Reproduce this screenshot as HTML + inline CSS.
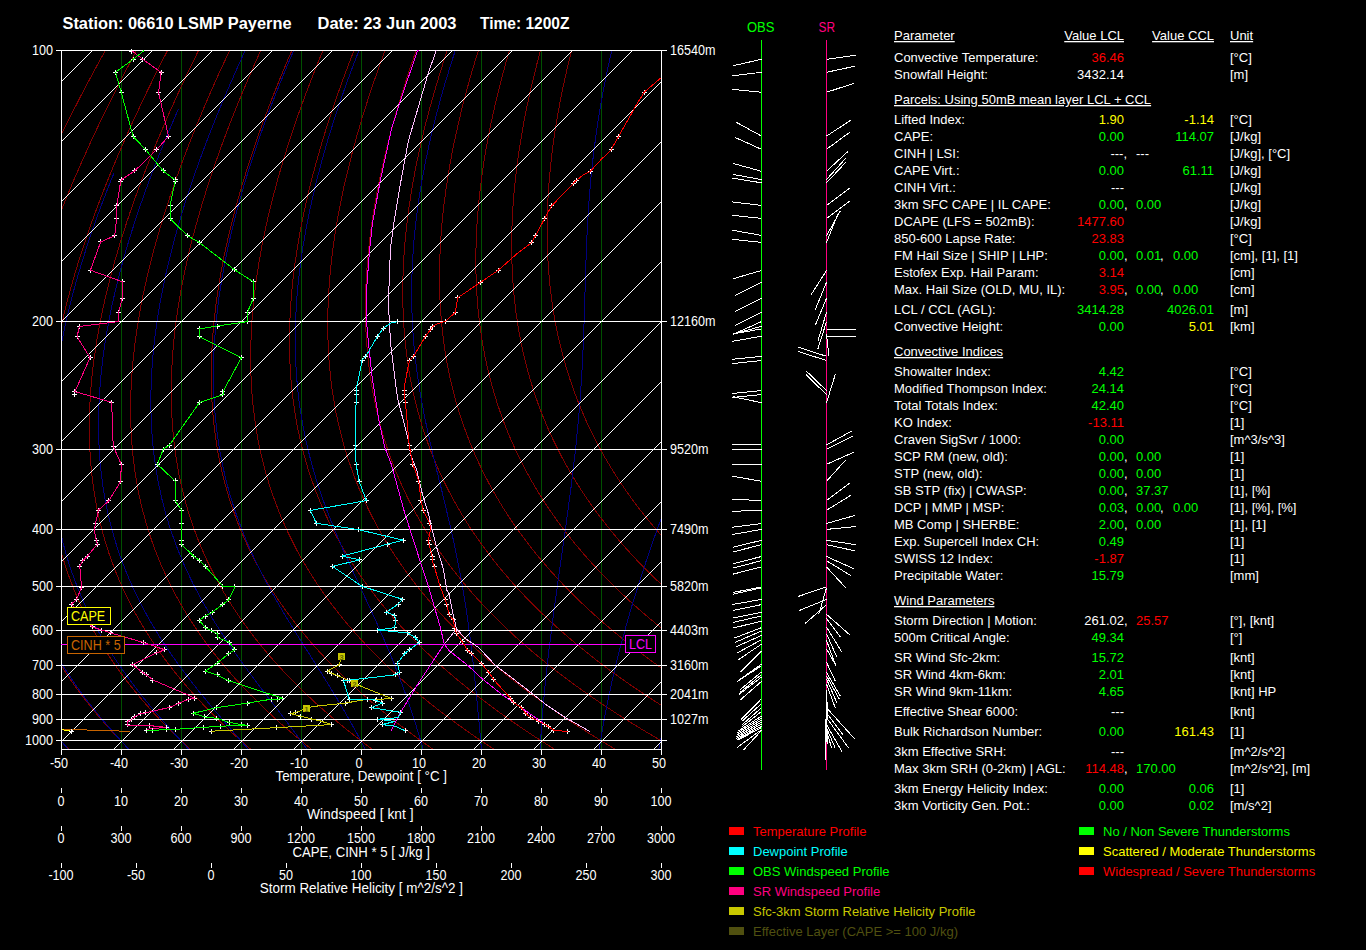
<!DOCTYPE html><html><head><meta charset="utf-8"><style>html,body{margin:0;padding:0;background:#000;width:1366px;height:950px;overflow:hidden}</style></head><body><svg width="1366" height="950" viewBox="0 0 1366 950" style="position:absolute;left:0;top:0">
<rect width="1366" height="950" fill="#000"/>
<defs><clipPath id="pc"><rect x="61" y="50" width="601" height="700"/></clipPath></defs>
<g clip-path="url(#pc)" fill="none" stroke-width="1" shape-rendering="crispEdges">
<line x1="121.5" y1="50" x2="121.5" y2="750" stroke="#005000"/>
<line x1="181.5" y1="50" x2="181.5" y2="750" stroke="#005000"/>
<line x1="241.5" y1="50" x2="241.5" y2="750" stroke="#005000"/>
<line x1="301.5" y1="50" x2="301.5" y2="750" stroke="#005000"/>
<line x1="361.5" y1="50" x2="361.5" y2="750" stroke="#005000"/>
<line x1="421.5" y1="50" x2="421.5" y2="750" stroke="#005000"/>
<line x1="481.5" y1="50" x2="481.5" y2="750" stroke="#005000"/>
<line x1="541.5" y1="50" x2="541.5" y2="750" stroke="#005000"/>
<line x1="601.5" y1="50" x2="601.5" y2="750" stroke="#005000"/>
<polyline points="105.6,50.0 104.5,52.0 103.4,54.0 102.3,56.0 101.2,58.0 100.1,60.0 99.0,62.0 97.9,64.0 96.8,66.0 95.7,68.0 94.6,70.0 93.6,72.0 92.5,74.0 91.4,76.0 90.3,78.0 89.3,80.0 88.2,82.0 87.1,84.0 86.1,86.0 85.0,88.0 84.0,90.0 82.9,92.0 81.9,94.0 80.8,96.0 79.8,98.0 78.8,100.0 77.7,102.0 76.7,104.0 75.7,106.0 74.6,108.0 73.6,110.0 72.6,112.0 71.6,114.0 70.6,116.0 69.6,118.0 68.5,120.0 67.5,122.0 66.5,124.0 65.5,126.0 64.6,128.0 63.6,130.0 62.6,132.0 61.6,134.0 60.6,136.0 59.6,138.0 58.7,140.0 57.7,142.0 56.7,144.0 55.7,146.0 54.8,148.0 53.8,150.0 52.9,152.0 51.9,154.0 51.0,156.0 50.0,158.0 49.1,160.0 48.2,162.0 47.2,164.0 46.3,166.0 45.4,168.0 44.4,170.0 43.5,172.0 42.6,174.0 41.7,176.0 40.8,178.0 39.9,180.0 39.0,182.0 38.1,184.0 37.2,186.0 36.3,188.0 35.4,190.0 34.5,192.0 33.6,194.0 32.8,196.0 31.9,198.0 31.0,200.0 30.2,202.0 29.3,204.0 28.5,206.0 27.6,208.0 26.8,210.0 25.9,212.0 25.1,214.0 24.2,216.0 23.4,218.0 22.6,220.0 21.8,222.0 20.9,224.0 20.1,226.0 19.3,228.0 18.5,230.0 17.7,232.0 16.9,234.0 16.1,236.0 15.3,238.0 14.5,240.0 13.8,242.0 13.0,244.0 12.2,246.0 11.4,248.0 10.7,250.0 9.9,252.0 9.2,254.0 8.4,256.0 7.7,258.0 6.9,260.0 6.2,262.0 5.5,264.0 4.7,266.0 4.0,268.0 3.3,270.0 2.6,272.0 1.9,274.0 1.2,276.0 0.5,278.0 -0.2,280.0 -0.9,282.0 -1.6,284.0 -2.3,286.0 -2.9,288.0 -3.6,290.0 -4.3,292.0 -4.9,294.0 -5.6,296.0 -6.2,298.0 -6.9,300.0 -7.5,302.0 -8.1,304.0 -8.8,306.0 -9.4,308.0 -10.0,310.0 -10.6,312.0 -11.2,314.0 -11.8,316.0 -12.4,318.0 -13.0,320.0 -13.6,322.0 -14.2,324.0 -14.7,326.0 -15.3,328.0 -15.9,330.0 -16.4,332.0 -17.0,334.0 -17.5,336.0 -18.1,338.0 -18.6,340.0 -19.1,342.0 -19.6,344.0 -20.2,346.0 -20.7,348.0 -21.2,350.0 -21.7,352.0 -22.2,354.0 -22.6,356.0 -23.1,358.0 -23.6,360.0 -24.1,362.0 -24.5,364.0 -25.0,366.0 -25.4,368.0 -25.9,370.0 -26.3,372.0 -26.7,374.0 -27.2,376.0 -27.6,378.0 -28.0,380.0 -28.4,382.0 -28.8,384.0 -29.2,386.0 -29.6,388.0 -29.9,390.0 -30.3,392.0 -30.7,394.0 -31.0,396.0 -31.4,398.0 -31.7,400.0 -32.1,402.0 -32.4,404.0 -32.7,406.0 -33.0,408.0 -33.3,410.0 -33.6,412.0 -33.9,414.0 -34.2,416.0 -34.5,418.0 -34.7,420.0 -35.0,422.0 -35.3,424.0 -35.5,426.0 -35.7,428.0 -36.0,430.0 -36.2,432.0 -36.4,434.0 -36.6,436.0 -36.8,438.0 -37.0,440.0 -37.2,442.0 -37.4,444.0 -37.6,446.0 -37.7,448.0 -37.9,450.0 -38.0,452.0 -38.1,454.0 -38.3,456.0 -38.4,458.0 -38.5,460.0 -38.6,462.0 -38.7,464.0 -38.8,466.0 -38.9,468.0 -38.9,470.0 -39.0,472.0 -39.0,474.0 -39.1,476.0 -39.1,478.0 -39.1,480.0 -39.2,482.0 -39.2,484.0 -39.2,486.0 -39.1,488.0 -39.1,490.0 -39.1,492.0 -39.0,494.0 -39.0,496.0 -38.9,498.0 -38.9,500.0 -38.8,502.0 -38.7,504.0 -38.6,506.0 -38.5,508.0 -38.4,510.0 -38.2,512.0 -38.1,514.0 -38.0,516.0 -37.8,518.0 -37.6,520.0 -37.4,522.0 -37.3,524.0 -37.1,526.0 -36.8,528.0 -36.6,530.0 -36.4,532.0 -36.2,534.0 -35.9,536.0 -35.6,538.0 -35.4,540.0 -35.1,542.0 -34.8,544.0 -34.5,546.0 -34.2,548.0 -33.8,550.0 -33.5,552.0 -33.1,554.0 -32.8,556.0 -32.4,558.0 -32.0,560.0 -31.6,562.0 -31.2,564.0 -30.8,566.0 -30.3,568.0 -29.9,570.0 -29.4,572.0 -28.9,574.0 -28.5,576.0 -28.0,578.0 -27.5,580.0 -26.9,582.0 -26.4,584.0 -25.9,586.0 -25.3,588.0 -24.7,590.0 -24.1,592.0 -23.5,594.0 -22.9,596.0 -22.3,598.0 -21.7,600.0 -21.0,602.0 -20.4,604.0 -19.7,606.0 -19.0,608.0 -18.3,610.0 -17.6,612.0 -16.9,614.0 -16.1,616.0 -15.3,618.0 -14.6,620.0 -13.8,622.0 -13.0,624.0 -12.2,626.0 -11.3,628.0 -10.5,630.0 -9.6,632.0 -8.8,634.0 -7.9,636.0 -7.0,638.0 -6.1,640.0 -5.1,642.0 -4.2,644.0 -3.2,646.0 -2.3,648.0 -1.3,650.0 -0.3,652.0 0.8,654.0 1.8,656.0 2.8,658.0 3.9,660.0 5.0,662.0 6.1,664.0 7.2,666.0 8.3,668.0 9.5,670.0 10.7,672.0 11.8,674.0 13.0,676.0 14.2,678.0 15.5,680.0 16.7,682.0 18.0,684.0 19.2,686.0 20.5,688.0 21.8,690.0 23.2,692.0 24.5,694.0 25.9,696.0 27.3,698.0 28.7,700.0 30.1,702.0 31.5,704.0 32.9,706.0 34.4,708.0 35.9,710.0 37.4,712.0 38.9,714.0 40.4,716.0 42.0,718.0 43.6,720.0 45.1,722.0 46.7,724.0 48.4,726.0 50.0,728.0 51.7,730.0 53.3,732.0 55.0,734.0 56.8,736.0 58.5,738.0 60.2,740.0 62.0,742.0 63.8,744.0 65.6,746.0 67.4,748.0 69.3,750.0" stroke="#800000"/>
<polyline points="136.6,50.0 135.6,52.0 134.5,54.0 133.5,56.0 132.4,58.0 131.3,60.0 130.3,62.0 129.2,64.0 128.2,66.0 127.2,68.0 126.1,70.0 125.1,72.0 124.0,74.0 123.0,76.0 122.0,78.0 121.0,80.0 119.9,82.0 118.9,84.0 117.9,86.0 116.9,88.0 115.9,90.0 114.9,92.0 113.9,94.0 112.9,96.0 111.9,98.0 110.9,100.0 109.9,102.0 108.9,104.0 107.9,106.0 106.9,108.0 106.0,110.0 105.0,112.0 104.0,114.0 103.0,116.0 102.1,118.0 101.1,120.0 100.1,122.0 99.2,124.0 98.2,126.0 97.3,128.0 96.3,130.0 95.4,132.0 94.5,134.0 93.5,136.0 92.6,138.0 91.7,140.0 90.7,142.0 89.8,144.0 88.9,146.0 88.0,148.0 87.1,150.0 86.2,152.0 85.3,154.0 84.4,156.0 83.5,158.0 82.6,160.0 81.7,162.0 80.8,164.0 79.9,166.0 79.0,168.0 78.2,170.0 77.3,172.0 76.4,174.0 75.6,176.0 74.7,178.0 73.8,180.0 73.0,182.0 72.1,184.0 71.3,186.0 70.5,188.0 69.6,190.0 68.8,192.0 68.0,194.0 67.1,196.0 66.3,198.0 65.5,200.0 64.7,202.0 63.9,204.0 63.1,206.0 62.3,208.0 61.5,210.0 60.7,212.0 59.9,214.0 59.1,216.0 58.3,218.0 57.6,220.0 56.8,222.0 56.0,224.0 55.3,226.0 54.5,228.0 53.8,230.0 53.0,232.0 52.3,234.0 51.5,236.0 50.8,238.0 50.1,240.0 49.3,242.0 48.6,244.0 47.9,246.0 47.2,248.0 46.5,250.0 45.8,252.0 45.1,254.0 44.4,256.0 43.7,258.0 43.0,260.0 42.3,262.0 41.6,264.0 41.0,266.0 40.3,268.0 39.7,270.0 39.0,272.0 38.4,274.0 37.7,276.0 37.1,278.0 36.4,280.0 35.8,282.0 35.2,284.0 34.6,286.0 33.9,288.0 33.3,290.0 32.7,292.0 32.1,294.0 31.5,296.0 31.0,298.0 30.4,300.0 29.8,302.0 29.2,304.0 28.7,306.0 28.1,308.0 27.5,310.0 27.0,312.0 26.5,314.0 25.9,316.0 25.4,318.0 24.9,320.0 24.3,322.0 23.8,324.0 23.3,326.0 22.8,328.0 22.3,330.0 21.8,332.0 21.3,334.0 20.9,336.0 20.4,338.0 19.9,340.0 19.5,342.0 19.0,344.0 18.5,346.0 18.1,348.0 17.7,350.0 17.2,352.0 16.8,354.0 16.4,356.0 16.0,358.0 15.6,360.0 15.2,362.0 14.8,364.0 14.4,366.0 14.0,368.0 13.7,370.0 13.3,372.0 12.9,374.0 12.6,376.0 12.2,378.0 11.9,380.0 11.6,382.0 11.2,384.0 10.9,386.0 10.6,388.0 10.3,390.0 10.0,392.0 9.7,394.0 9.4,396.0 9.2,398.0 8.9,400.0 8.6,402.0 8.4,404.0 8.1,406.0 7.9,408.0 7.7,410.0 7.4,412.0 7.2,414.0 7.0,416.0 6.8,418.0 6.6,420.0 6.4,422.0 6.3,424.0 6.1,426.0 5.9,428.0 5.8,430.0 5.6,432.0 5.5,434.0 5.4,436.0 5.3,438.0 5.1,440.0 5.0,442.0 4.9,444.0 4.9,446.0 4.8,448.0 4.7,450.0 4.6,452.0 4.6,454.0 4.5,456.0 4.5,458.0 4.5,460.0 4.5,462.0 4.5,464.0 4.5,466.0 4.5,468.0 4.5,470.0 4.5,472.0 4.6,474.0 4.6,476.0 4.7,478.0 4.7,480.0 4.8,482.0 4.9,484.0 5.0,486.0 5.1,488.0 5.2,490.0 5.3,492.0 5.4,494.0 5.6,496.0 5.7,498.0 5.9,500.0 6.1,502.0 6.3,504.0 6.5,506.0 6.7,508.0 6.9,510.0 7.1,512.0 7.3,514.0 7.6,516.0 7.8,518.0 8.1,520.0 8.4,522.0 8.7,524.0 9.0,526.0 9.3,528.0 9.6,530.0 9.9,532.0 10.3,534.0 10.6,536.0 11.0,538.0 11.4,540.0 11.7,542.0 12.1,544.0 12.6,546.0 13.0,548.0 13.4,550.0 13.9,552.0 14.3,554.0 14.8,556.0 15.3,558.0 15.8,560.0 16.3,562.0 16.8,564.0 17.3,566.0 17.9,568.0 18.4,570.0 19.0,572.0 19.6,574.0 20.2,576.0 20.8,578.0 21.4,580.0 22.0,582.0 22.7,584.0 23.3,586.0 24.0,588.0 24.7,590.0 25.4,592.0 26.1,594.0 26.8,596.0 27.6,598.0 28.3,600.0 29.1,602.0 29.9,604.0 30.7,606.0 31.5,608.0 32.3,610.0 33.2,612.0 34.0,614.0 34.9,616.0 35.8,618.0 36.7,620.0 37.6,622.0 38.5,624.0 39.4,626.0 40.4,628.0 41.4,630.0 42.3,632.0 43.3,634.0 44.4,636.0 45.4,638.0 46.4,640.0 47.5,642.0 48.6,644.0 49.7,646.0 50.8,648.0 51.9,650.0 53.0,652.0 54.2,654.0 55.4,656.0 56.6,658.0 57.8,660.0 59.0,662.0 60.2,664.0 61.5,666.0 62.8,668.0 64.0,670.0 65.3,672.0 66.7,674.0 68.0,676.0 69.4,678.0 70.7,680.0 72.1,682.0 73.5,684.0 75.0,686.0 76.4,688.0 77.9,690.0 79.3,692.0 80.8,694.0 82.3,696.0 83.9,698.0 85.4,700.0 87.0,702.0 88.6,704.0 90.2,706.0 91.8,708.0 93.4,710.0 95.1,712.0 96.7,714.0 98.4,716.0 100.1,718.0 101.9,720.0 103.6,722.0 105.4,724.0 107.2,726.0 109.0,728.0 110.8,730.0 112.6,732.0 114.5,734.0 116.4,736.0 118.3,738.0 120.2,740.0 122.1,742.0 124.1,744.0 126.1,746.0 128.1,748.0 130.1,750.0" stroke="#800000"/>
<polyline points="167.7,50.0 166.7,52.0 165.7,54.0 164.7,56.0 163.6,58.0 162.6,60.0 161.6,62.0 160.6,64.0 159.6,66.0 158.6,68.0 157.6,70.0 156.6,72.0 155.6,74.0 154.6,76.0 153.6,78.0 152.7,80.0 151.7,82.0 150.7,84.0 149.7,86.0 148.8,88.0 147.8,90.0 146.8,92.0 145.9,94.0 144.9,96.0 143.9,98.0 143.0,100.0 142.0,102.0 141.1,104.0 140.2,106.0 139.2,108.0 138.3,110.0 137.4,112.0 136.4,114.0 135.5,116.0 134.6,118.0 133.7,120.0 132.7,122.0 131.8,124.0 130.9,126.0 130.0,128.0 129.1,130.0 128.2,132.0 127.3,134.0 126.4,136.0 125.6,138.0 124.7,140.0 123.8,142.0 122.9,144.0 122.0,146.0 121.2,148.0 120.3,150.0 119.4,152.0 118.6,154.0 117.7,156.0 116.9,158.0 116.0,160.0 115.2,162.0 114.4,164.0 113.5,166.0 112.7,168.0 111.9,170.0 111.0,172.0 110.2,174.0 109.4,176.0 108.6,178.0 107.8,180.0 107.0,182.0 106.2,184.0 105.4,186.0 104.6,188.0 103.8,190.0 103.0,192.0 102.3,194.0 101.5,196.0 100.7,198.0 100.0,200.0 99.2,202.0 98.4,204.0 97.7,206.0 96.9,208.0 96.2,210.0 95.4,212.0 94.7,214.0 94.0,216.0 93.3,218.0 92.5,220.0 91.8,222.0 91.1,224.0 90.4,226.0 89.7,228.0 89.0,230.0 88.3,232.0 87.6,234.0 86.9,236.0 86.2,238.0 85.6,240.0 84.9,242.0 84.2,244.0 83.6,246.0 82.9,248.0 82.3,250.0 81.6,252.0 81.0,254.0 80.3,256.0 79.7,258.0 79.1,260.0 78.4,262.0 77.8,264.0 77.2,266.0 76.6,268.0 76.0,270.0 75.4,272.0 74.8,274.0 74.2,276.0 73.7,278.0 73.1,280.0 72.5,282.0 71.9,284.0 71.4,286.0 70.8,288.0 70.3,290.0 69.7,292.0 69.2,294.0 68.7,296.0 68.1,298.0 67.6,300.0 67.1,302.0 66.6,304.0 66.1,306.0 65.6,308.0 65.1,310.0 64.6,312.0 64.1,314.0 63.7,316.0 63.2,318.0 62.7,320.0 62.3,322.0 61.8,324.0 61.4,326.0 60.9,328.0 60.5,330.0 60.1,332.0 59.6,334.0 59.2,336.0 58.8,338.0 58.4,340.0 58.0,342.0 57.6,344.0 57.3,346.0 56.9,348.0 56.5,350.0 56.1,352.0 55.8,354.0 55.4,356.0 55.1,358.0 54.8,360.0 54.4,362.0 54.1,364.0 53.8,366.0 53.5,368.0 53.2,370.0 52.9,372.0 52.6,374.0 52.3,376.0 52.0,378.0 51.8,380.0 51.5,382.0 51.3,384.0 51.0,386.0 50.8,388.0 50.5,390.0 50.3,392.0 50.1,394.0 49.9,396.0 49.7,398.0 49.5,400.0 49.3,402.0 49.1,404.0 49.0,406.0 48.8,408.0 48.6,410.0 48.5,412.0 48.4,414.0 48.2,416.0 48.1,418.0 48.0,420.0 47.9,422.0 47.8,424.0 47.7,426.0 47.6,428.0 47.5,430.0 47.5,432.0 47.4,434.0 47.4,436.0 47.3,438.0 47.3,440.0 47.3,442.0 47.3,444.0 47.3,446.0 47.3,448.0 47.3,450.0 47.3,452.0 47.3,454.0 47.4,456.0 47.4,458.0 47.5,460.0 47.5,462.0 47.6,464.0 47.7,466.0 47.8,468.0 47.9,470.0 48.0,472.0 48.2,474.0 48.3,476.0 48.4,478.0 48.6,480.0 48.7,482.0 48.9,484.0 49.1,486.0 49.3,488.0 49.5,490.0 49.7,492.0 49.9,494.0 50.2,496.0 50.4,498.0 50.7,500.0 50.9,502.0 51.2,504.0 51.5,506.0 51.8,508.0 52.1,510.0 52.4,512.0 52.8,514.0 53.1,516.0 53.5,518.0 53.8,520.0 54.2,522.0 54.6,524.0 55.0,526.0 55.4,528.0 55.8,530.0 56.2,532.0 56.7,534.0 57.1,536.0 57.6,538.0 58.1,540.0 58.6,542.0 59.1,544.0 59.6,546.0 60.1,548.0 60.7,550.0 61.2,552.0 61.8,554.0 62.3,556.0 62.9,558.0 63.5,560.0 64.2,562.0 64.8,564.0 65.4,566.0 66.1,568.0 66.7,570.0 67.4,572.0 68.1,574.0 68.8,576.0 69.5,578.0 70.3,580.0 71.0,582.0 71.8,584.0 72.6,586.0 73.3,588.0 74.1,590.0 75.0,592.0 75.8,594.0 76.6,596.0 77.5,598.0 78.4,600.0 79.2,602.0 80.2,604.0 81.1,606.0 82.0,608.0 82.9,610.0 83.9,612.0 84.9,614.0 85.9,616.0 86.9,618.0 87.9,620.0 88.9,622.0 90.0,624.0 91.0,626.0 92.1,628.0 93.2,630.0 94.3,632.0 95.5,634.0 96.6,636.0 97.8,638.0 99.0,640.0 100.1,642.0 101.4,644.0 102.6,646.0 103.8,648.0 105.1,650.0 106.4,652.0 107.7,654.0 109.0,656.0 110.3,658.0 111.6,660.0 113.0,662.0 114.4,664.0 115.8,666.0 117.2,668.0 118.6,670.0 120.0,672.0 121.5,674.0 123.0,676.0 124.5,678.0 126.0,680.0 127.5,682.0 129.1,684.0 130.7,686.0 132.3,688.0 133.9,690.0 135.5,692.0 137.1,694.0 138.8,696.0 140.5,698.0 142.2,700.0 143.9,702.0 145.6,704.0 147.4,706.0 149.2,708.0 150.9,710.0 152.8,712.0 154.6,714.0 156.4,716.0 158.3,718.0 160.2,720.0 162.1,722.0 164.0,724.0 166.0,726.0 167.9,728.0 169.9,730.0 171.9,732.0 174.0,734.0 176.0,736.0 178.1,738.0 180.2,740.0 182.3,742.0 184.4,744.0 186.5,746.0 188.7,748.0 190.9,750.0" stroke="#800000"/>
<polyline points="198.8,50.0 197.8,52.0 196.8,54.0 195.9,56.0 194.9,58.0 193.9,60.0 192.9,62.0 192.0,64.0 191.0,66.0 190.0,68.0 189.1,70.0 188.1,72.0 187.2,74.0 186.2,76.0 185.3,78.0 184.3,80.0 183.4,82.0 182.5,84.0 181.5,86.0 180.6,88.0 179.7,90.0 178.8,92.0 177.8,94.0 176.9,96.0 176.0,98.0 175.1,100.0 174.2,102.0 173.3,104.0 172.4,106.0 171.5,108.0 170.6,110.0 169.7,112.0 168.8,114.0 168.0,116.0 167.1,118.0 166.2,120.0 165.3,122.0 164.5,124.0 163.6,126.0 162.8,128.0 161.9,130.0 161.0,132.0 160.2,134.0 159.4,136.0 158.5,138.0 157.7,140.0 156.8,142.0 156.0,144.0 155.2,146.0 154.4,148.0 153.5,150.0 152.7,152.0 151.9,154.0 151.1,156.0 150.3,158.0 149.5,160.0 148.7,162.0 147.9,164.0 147.1,166.0 146.4,168.0 145.6,170.0 144.8,172.0 144.0,174.0 143.3,176.0 142.5,178.0 141.8,180.0 141.0,182.0 140.3,184.0 139.5,186.0 138.8,188.0 138.0,190.0 137.3,192.0 136.6,194.0 135.8,196.0 135.1,198.0 134.4,200.0 133.7,202.0 133.0,204.0 132.3,206.0 131.6,208.0 130.9,210.0 130.2,212.0 129.5,214.0 128.9,216.0 128.2,218.0 127.5,220.0 126.8,222.0 126.2,224.0 125.5,226.0 124.9,228.0 124.2,230.0 123.6,232.0 123.0,234.0 122.3,236.0 121.7,238.0 121.1,240.0 120.5,242.0 119.8,244.0 119.2,246.0 118.6,248.0 118.0,250.0 117.5,252.0 116.9,254.0 116.3,256.0 115.7,258.0 115.1,260.0 114.6,262.0 114.0,264.0 113.5,266.0 112.9,268.0 112.4,270.0 111.8,272.0 111.3,274.0 110.8,276.0 110.2,278.0 109.7,280.0 109.2,282.0 108.7,284.0 108.2,286.0 107.7,288.0 107.2,290.0 106.7,292.0 106.3,294.0 105.8,296.0 105.3,298.0 104.9,300.0 104.4,302.0 104.0,304.0 103.5,306.0 103.1,308.0 102.6,310.0 102.2,312.0 101.8,314.0 101.4,316.0 101.0,318.0 100.6,320.0 100.2,322.0 99.8,324.0 99.4,326.0 99.0,328.0 98.7,330.0 98.3,332.0 98.0,334.0 97.6,336.0 97.3,338.0 96.9,340.0 96.6,342.0 96.3,344.0 96.0,346.0 95.7,348.0 95.3,350.0 95.1,352.0 94.8,354.0 94.5,356.0 94.2,358.0 93.9,360.0 93.7,362.0 93.4,364.0 93.2,366.0 92.9,368.0 92.7,370.0 92.5,372.0 92.3,374.0 92.0,376.0 91.8,378.0 91.6,380.0 91.5,382.0 91.3,384.0 91.1,386.0 90.9,388.0 90.8,390.0 90.6,392.0 90.5,394.0 90.4,396.0 90.2,398.0 90.1,400.0 90.0,402.0 89.9,404.0 89.8,406.0 89.7,408.0 89.6,410.0 89.6,412.0 89.5,414.0 89.4,416.0 89.4,418.0 89.4,420.0 89.3,422.0 89.3,424.0 89.3,426.0 89.3,428.0 89.3,430.0 89.3,432.0 89.3,434.0 89.4,436.0 89.4,438.0 89.5,440.0 89.5,442.0 89.6,444.0 89.7,446.0 89.8,448.0 89.9,450.0 90.0,452.0 90.1,454.0 90.2,456.0 90.3,458.0 90.5,460.0 90.6,462.0 90.8,464.0 91.0,466.0 91.1,468.0 91.3,470.0 91.5,472.0 91.7,474.0 92.0,476.0 92.2,478.0 92.4,480.0 92.7,482.0 93.0,484.0 93.2,486.0 93.5,488.0 93.8,490.0 94.1,492.0 94.4,494.0 94.8,496.0 95.1,498.0 95.4,500.0 95.8,502.0 96.2,504.0 96.6,506.0 96.9,508.0 97.3,510.0 97.8,512.0 98.2,514.0 98.6,516.0 99.1,518.0 99.5,520.0 100.0,522.0 100.5,524.0 101.0,526.0 101.5,528.0 102.0,530.0 102.5,532.0 103.1,534.0 103.6,536.0 104.2,538.0 104.8,540.0 105.4,542.0 106.0,544.0 106.6,546.0 107.2,548.0 107.9,550.0 108.5,552.0 109.2,554.0 109.9,556.0 110.6,558.0 111.3,560.0 112.0,562.0 112.8,564.0 113.5,566.0 114.3,568.0 115.0,570.0 115.8,572.0 116.6,574.0 117.5,576.0 118.3,578.0 119.1,580.0 120.0,582.0 120.9,584.0 121.8,586.0 122.7,588.0 123.6,590.0 124.5,592.0 125.5,594.0 126.4,596.0 127.4,598.0 128.4,600.0 129.4,602.0 130.4,604.0 131.4,606.0 132.5,608.0 133.6,610.0 134.6,612.0 135.7,614.0 136.9,616.0 138.0,618.0 139.1,620.0 140.3,622.0 141.5,624.0 142.7,626.0 143.9,628.0 145.1,630.0 146.3,632.0 147.6,634.0 148.9,636.0 150.2,638.0 151.5,640.0 152.8,642.0 154.1,644.0 155.5,646.0 156.9,648.0 158.3,650.0 159.7,652.0 161.1,654.0 162.5,656.0 164.0,658.0 165.5,660.0 167.0,662.0 168.5,664.0 170.0,666.0 171.6,668.0 173.2,670.0 174.7,672.0 176.3,674.0 178.0,676.0 179.6,678.0 181.3,680.0 183.0,682.0 184.7,684.0 186.4,686.0 188.1,688.0 189.9,690.0 191.6,692.0 193.4,694.0 195.2,696.0 197.1,698.0 198.9,700.0 200.8,702.0 202.7,704.0 204.6,706.0 206.5,708.0 208.5,710.0 210.4,712.0 212.4,714.0 214.4,716.0 216.5,718.0 218.5,720.0 220.6,722.0 222.7,724.0 224.8,726.0 226.9,728.0 229.1,730.0 231.2,732.0 233.4,734.0 235.6,736.0 237.9,738.0 240.1,740.0 242.4,742.0 244.7,744.0 247.0,746.0 249.3,748.0 251.7,750.0" stroke="#800000"/>
<polyline points="229.9,50.0 228.9,52.0 228.0,54.0 227.1,56.0 226.1,58.0 225.2,60.0 224.3,62.0 223.3,64.0 222.4,66.0 221.5,68.0 220.6,70.0 219.7,72.0 218.7,74.0 217.8,76.0 216.9,78.0 216.0,80.0 215.1,82.0 214.2,84.0 213.4,86.0 212.5,88.0 211.6,90.0 210.7,92.0 209.8,94.0 209.0,96.0 208.1,98.0 207.2,100.0 206.4,102.0 205.5,104.0 204.6,106.0 203.8,108.0 202.9,110.0 202.1,112.0 201.3,114.0 200.4,116.0 199.6,118.0 198.8,120.0 197.9,122.0 197.1,124.0 196.3,126.0 195.5,128.0 194.7,130.0 193.9,132.0 193.1,134.0 192.3,136.0 191.5,138.0 190.7,140.0 189.9,142.0 189.1,144.0 188.3,146.0 187.6,148.0 186.8,150.0 186.0,152.0 185.3,154.0 184.5,156.0 183.7,158.0 183.0,160.0 182.2,162.0 181.5,164.0 180.8,166.0 180.0,168.0 179.3,170.0 178.6,172.0 177.9,174.0 177.1,176.0 176.4,178.0 175.7,180.0 175.0,182.0 174.3,184.0 173.6,186.0 172.9,188.0 172.2,190.0 171.6,192.0 170.9,194.0 170.2,196.0 169.5,198.0 168.9,200.0 168.2,202.0 167.6,204.0 166.9,206.0 166.3,208.0 165.6,210.0 165.0,212.0 164.4,214.0 163.7,216.0 163.1,218.0 162.5,220.0 161.9,222.0 161.3,224.0 160.7,226.0 160.1,228.0 159.5,230.0 158.9,232.0 158.3,234.0 157.7,236.0 157.2,238.0 156.6,240.0 156.0,242.0 155.5,244.0 154.9,246.0 154.4,248.0 153.8,250.0 153.3,252.0 152.8,254.0 152.2,256.0 151.7,258.0 151.2,260.0 150.7,262.0 150.2,264.0 149.7,266.0 149.2,268.0 148.7,270.0 148.2,272.0 147.8,274.0 147.3,276.0 146.8,278.0 146.4,280.0 145.9,282.0 145.5,284.0 145.0,286.0 144.6,288.0 144.2,290.0 143.7,292.0 143.3,294.0 142.9,296.0 142.5,298.0 142.1,300.0 141.7,302.0 141.3,304.0 140.9,306.0 140.6,308.0 140.2,310.0 139.8,312.0 139.5,314.0 139.1,316.0 138.8,318.0 138.4,320.0 138.1,322.0 137.8,324.0 137.5,326.0 137.2,328.0 136.9,330.0 136.6,332.0 136.3,334.0 136.0,336.0 135.7,338.0 135.4,340.0 135.2,342.0 134.9,344.0 134.7,346.0 134.4,348.0 134.2,350.0 134.0,352.0 133.7,354.0 133.5,356.0 133.3,358.0 133.1,360.0 132.9,362.0 132.7,364.0 132.6,366.0 132.4,368.0 132.2,370.0 132.1,372.0 131.9,374.0 131.8,376.0 131.7,378.0 131.5,380.0 131.4,382.0 131.3,384.0 131.2,386.0 131.1,388.0 131.0,390.0 130.9,392.0 130.9,394.0 130.8,396.0 130.8,398.0 130.7,400.0 130.7,402.0 130.7,404.0 130.6,406.0 130.6,408.0 130.6,410.0 130.6,412.0 130.6,414.0 130.7,416.0 130.7,418.0 130.7,420.0 130.8,422.0 130.8,424.0 130.9,426.0 131.0,428.0 131.1,430.0 131.2,432.0 131.3,434.0 131.4,436.0 131.5,438.0 131.6,440.0 131.8,442.0 131.9,444.0 132.1,446.0 132.2,448.0 132.4,450.0 132.6,452.0 132.8,454.0 133.0,456.0 133.2,458.0 133.5,460.0 133.7,462.0 134.0,464.0 134.2,466.0 134.5,468.0 134.8,470.0 135.0,472.0 135.3,474.0 135.7,476.0 136.0,478.0 136.3,480.0 136.6,482.0 137.0,484.0 137.4,486.0 137.7,488.0 138.1,490.0 138.5,492.0 138.9,494.0 139.3,496.0 139.8,498.0 140.2,500.0 140.7,502.0 141.1,504.0 141.6,506.0 142.1,508.0 142.6,510.0 143.1,512.0 143.6,514.0 144.2,516.0 144.7,518.0 145.3,520.0 145.8,522.0 146.4,524.0 147.0,526.0 147.6,528.0 148.2,530.0 148.9,532.0 149.5,534.0 150.2,536.0 150.8,538.0 151.5,540.0 152.2,542.0 152.9,544.0 153.6,546.0 154.4,548.0 155.1,550.0 155.9,552.0 156.7,554.0 157.5,556.0 158.3,558.0 159.1,560.0 159.9,562.0 160.7,564.0 161.6,566.0 162.5,568.0 163.4,570.0 164.3,572.0 165.2,574.0 166.1,576.0 167.0,578.0 168.0,580.0 169.0,582.0 170.0,584.0 171.0,586.0 172.0,588.0 173.0,590.0 174.1,592.0 175.1,594.0 176.2,596.0 177.3,598.0 178.4,600.0 179.5,602.0 180.7,604.0 181.8,606.0 183.0,608.0 184.2,610.0 185.4,612.0 186.6,614.0 187.8,616.0 189.1,618.0 190.4,620.0 191.7,622.0 193.0,624.0 194.3,626.0 195.6,628.0 197.0,630.0 198.3,632.0 199.7,634.0 201.1,636.0 202.5,638.0 204.0,640.0 205.4,642.0 206.9,644.0 208.4,646.0 209.9,648.0 211.4,650.0 213.0,652.0 214.5,654.0 216.1,656.0 217.7,658.0 219.3,660.0 221.0,662.0 222.6,664.0 224.3,666.0 226.0,668.0 227.7,670.0 229.4,672.0 231.2,674.0 233.0,676.0 234.7,678.0 236.5,680.0 238.4,682.0 240.2,684.0 242.1,686.0 244.0,688.0 245.9,690.0 247.8,692.0 249.7,694.0 251.7,696.0 253.7,698.0 255.7,700.0 257.7,702.0 259.8,704.0 261.8,706.0 263.9,708.0 266.0,710.0 268.1,712.0 270.3,714.0 272.4,716.0 274.6,718.0 276.8,720.0 279.1,722.0 281.3,724.0 283.6,726.0 285.9,728.0 288.2,730.0 290.5,732.0 292.9,734.0 295.3,736.0 297.7,738.0 300.1,740.0 302.5,742.0 305.0,744.0 307.5,746.0 310.0,748.0 312.5,750.0" stroke="#800000"/>
<polyline points="261.0,50.0 260.0,52.0 259.1,54.0 258.2,56.0 257.4,58.0 256.5,60.0 255.6,62.0 254.7,64.0 253.8,66.0 252.9,68.0 252.1,70.0 251.2,72.0 250.3,74.0 249.4,76.0 248.6,78.0 247.7,80.0 246.9,82.0 246.0,84.0 245.2,86.0 244.3,88.0 243.5,90.0 242.7,92.0 241.8,94.0 241.0,96.0 240.2,98.0 239.3,100.0 238.5,102.0 237.7,104.0 236.9,106.0 236.1,108.0 235.3,110.0 234.5,112.0 233.7,114.0 232.9,116.0 232.1,118.0 231.3,120.0 230.5,122.0 229.8,124.0 229.0,126.0 228.2,128.0 227.5,130.0 226.7,132.0 225.9,134.0 225.2,136.0 224.4,138.0 223.7,140.0 222.9,142.0 222.2,144.0 221.5,146.0 220.8,148.0 220.0,150.0 219.3,152.0 218.6,154.0 217.9,156.0 217.2,158.0 216.5,160.0 215.8,162.0 215.1,164.0 214.4,166.0 213.7,168.0 213.0,170.0 212.3,172.0 211.7,174.0 211.0,176.0 210.3,178.0 209.7,180.0 209.0,182.0 208.4,184.0 207.7,186.0 207.1,188.0 206.4,190.0 205.8,192.0 205.2,194.0 204.6,196.0 203.9,198.0 203.3,200.0 202.7,202.0 202.1,204.0 201.5,206.0 200.9,208.0 200.3,210.0 199.7,212.0 199.2,214.0 198.6,216.0 198.0,218.0 197.5,220.0 196.9,222.0 196.3,224.0 195.8,226.0 195.3,228.0 194.7,230.0 194.2,232.0 193.7,234.0 193.1,236.0 192.6,238.0 192.1,240.0 191.6,242.0 191.1,244.0 190.6,246.0 190.1,248.0 189.6,250.0 189.1,252.0 188.7,254.0 188.2,256.0 187.7,258.0 187.3,260.0 186.8,262.0 186.4,264.0 185.9,266.0 185.5,268.0 185.1,270.0 184.6,272.0 184.2,274.0 183.8,276.0 183.4,278.0 183.0,280.0 182.6,282.0 182.2,284.0 181.8,286.0 181.5,288.0 181.1,290.0 180.7,292.0 180.4,294.0 180.0,296.0 179.7,298.0 179.3,300.0 179.0,302.0 178.7,304.0 178.4,306.0 178.0,308.0 177.7,310.0 177.4,312.0 177.1,314.0 176.9,316.0 176.6,318.0 176.3,320.0 176.0,322.0 175.8,324.0 175.5,326.0 175.3,328.0 175.0,330.0 174.8,332.0 174.6,334.0 174.4,336.0 174.1,338.0 173.9,340.0 173.7,342.0 173.6,344.0 173.4,346.0 173.2,348.0 173.0,350.0 172.9,352.0 172.7,354.0 172.6,356.0 172.4,358.0 172.3,360.0 172.2,362.0 172.1,364.0 171.9,366.0 171.8,368.0 171.8,370.0 171.7,372.0 171.6,374.0 171.5,376.0 171.5,378.0 171.4,380.0 171.4,382.0 171.3,384.0 171.3,386.0 171.3,388.0 171.3,390.0 171.3,392.0 171.3,394.0 171.3,396.0 171.3,398.0 171.3,400.0 171.4,402.0 171.4,404.0 171.5,406.0 171.5,408.0 171.6,410.0 171.7,412.0 171.8,414.0 171.9,416.0 172.0,418.0 172.1,420.0 172.2,422.0 172.4,424.0 172.5,426.0 172.7,428.0 172.8,430.0 173.0,432.0 173.2,434.0 173.4,436.0 173.6,438.0 173.8,440.0 174.0,442.0 174.2,444.0 174.5,446.0 174.7,448.0 175.0,450.0 175.3,452.0 175.6,454.0 175.8,456.0 176.1,458.0 176.5,460.0 176.8,462.0 177.1,464.0 177.5,466.0 177.8,468.0 178.2,470.0 178.6,472.0 178.9,474.0 179.3,476.0 179.7,478.0 180.2,480.0 180.6,482.0 181.0,484.0 181.5,486.0 182.0,488.0 182.4,490.0 182.9,492.0 183.4,494.0 183.9,496.0 184.4,498.0 185.0,500.0 185.5,502.0 186.1,504.0 186.7,506.0 187.2,508.0 187.8,510.0 188.4,512.0 189.1,514.0 189.7,516.0 190.3,518.0 191.0,520.0 191.6,522.0 192.3,524.0 193.0,526.0 193.7,528.0 194.4,530.0 195.2,532.0 195.9,534.0 196.7,536.0 197.5,538.0 198.2,540.0 199.0,542.0 199.8,544.0 200.7,546.0 201.5,548.0 202.4,550.0 203.2,552.0 204.1,554.0 205.0,556.0 205.9,558.0 206.8,560.0 207.8,562.0 208.7,564.0 209.7,566.0 210.7,568.0 211.7,570.0 212.7,572.0 213.7,574.0 214.7,576.0 215.8,578.0 216.9,580.0 218.0,582.0 219.1,584.0 220.2,586.0 221.3,588.0 222.5,590.0 223.6,592.0 224.8,594.0 226.0,596.0 227.2,598.0 228.4,600.0 229.7,602.0 230.9,604.0 232.2,606.0 233.5,608.0 234.8,610.0 236.1,612.0 237.5,614.0 238.8,616.0 240.2,618.0 241.6,620.0 243.0,622.0 244.4,624.0 245.9,626.0 247.3,628.0 248.8,630.0 250.3,632.0 251.8,634.0 253.4,636.0 254.9,638.0 256.5,640.0 258.1,642.0 259.7,644.0 261.3,646.0 263.0,648.0 264.6,650.0 266.3,652.0 268.0,654.0 269.7,656.0 271.4,658.0 273.2,660.0 275.0,662.0 276.8,664.0 278.6,666.0 280.4,668.0 282.3,670.0 284.1,672.0 286.0,674.0 287.9,676.0 289.9,678.0 291.8,680.0 293.8,682.0 295.8,684.0 297.8,686.0 299.8,688.0 301.9,690.0 303.9,692.0 306.0,694.0 308.2,696.0 310.3,698.0 312.4,700.0 314.6,702.0 316.8,704.0 319.0,706.0 321.3,708.0 323.5,710.0 325.8,712.0 328.1,714.0 330.4,716.0 332.8,718.0 335.2,720.0 337.6,722.0 340.0,724.0 342.4,726.0 344.9,728.0 347.3,730.0 349.8,732.0 352.4,734.0 354.9,736.0 357.5,738.0 360.1,740.0 362.7,742.0 365.3,744.0 368.0,746.0 370.6,748.0 373.3,750.0" stroke="#800000"/>
<polyline points="292.0,50.0 291.2,52.0 290.3,54.0 289.4,56.0 288.6,58.0 287.7,60.0 286.9,62.0 286.0,64.0 285.2,66.0 284.4,68.0 283.5,70.0 282.7,72.0 281.9,74.0 281.1,76.0 280.2,78.0 279.4,80.0 278.6,82.0 277.8,84.0 277.0,86.0 276.2,88.0 275.4,90.0 274.6,92.0 273.8,94.0 273.0,96.0 272.2,98.0 271.5,100.0 270.7,102.0 269.9,104.0 269.1,106.0 268.4,108.0 267.6,110.0 266.9,112.0 266.1,114.0 265.4,116.0 264.6,118.0 263.9,120.0 263.1,122.0 262.4,124.0 261.7,126.0 261.0,128.0 260.2,130.0 259.5,132.0 258.8,134.0 258.1,136.0 257.4,138.0 256.7,140.0 256.0,142.0 255.3,144.0 254.6,146.0 253.9,148.0 253.3,150.0 252.6,152.0 251.9,154.0 251.3,156.0 250.6,158.0 249.9,160.0 249.3,162.0 248.6,164.0 248.0,166.0 247.4,168.0 246.7,170.0 246.1,172.0 245.5,174.0 244.9,176.0 244.2,178.0 243.6,180.0 243.0,182.0 242.4,184.0 241.8,186.0 241.2,188.0 240.6,190.0 240.1,192.0 239.5,194.0 238.9,196.0 238.3,198.0 237.8,200.0 237.2,202.0 236.7,204.0 236.1,206.0 235.6,208.0 235.0,210.0 234.5,212.0 234.0,214.0 233.5,216.0 232.9,218.0 232.4,220.0 231.9,222.0 231.4,224.0 230.9,226.0 230.4,228.0 230.0,230.0 229.5,232.0 229.0,234.0 228.5,236.0 228.1,238.0 227.6,240.0 227.2,242.0 226.7,244.0 226.3,246.0 225.8,248.0 225.4,250.0 225.0,252.0 224.6,254.0 224.1,256.0 223.7,258.0 223.3,260.0 222.9,262.0 222.6,264.0 222.2,266.0 221.8,268.0 221.4,270.0 221.1,272.0 220.7,274.0 220.3,276.0 220.0,278.0 219.7,280.0 219.3,282.0 219.0,284.0 218.7,286.0 218.3,288.0 218.0,290.0 217.7,292.0 217.4,294.0 217.1,296.0 216.9,298.0 216.6,300.0 216.3,302.0 216.0,304.0 215.8,306.0 215.5,308.0 215.3,310.0 215.1,312.0 214.8,314.0 214.6,316.0 214.4,318.0 214.2,320.0 214.0,322.0 213.8,324.0 213.6,326.0 213.4,328.0 213.2,330.0 213.1,332.0 212.9,334.0 212.7,336.0 212.6,338.0 212.5,340.0 212.3,342.0 212.2,344.0 212.1,346.0 212.0,348.0 211.9,350.0 211.8,352.0 211.7,354.0 211.6,356.0 211.5,358.0 211.5,360.0 211.4,362.0 211.4,364.0 211.3,366.0 211.3,368.0 211.3,370.0 211.3,372.0 211.3,374.0 211.3,376.0 211.3,378.0 211.3,380.0 211.3,382.0 211.3,384.0 211.4,386.0 211.4,388.0 211.5,390.0 211.6,392.0 211.6,394.0 211.7,396.0 211.8,398.0 211.9,400.0 212.0,402.0 212.2,404.0 212.3,406.0 212.4,408.0 212.6,410.0 212.7,412.0 212.9,414.0 213.1,416.0 213.3,418.0 213.5,420.0 213.7,422.0 213.9,424.0 214.1,426.0 214.3,428.0 214.6,430.0 214.8,432.0 215.1,434.0 215.4,436.0 215.7,438.0 216.0,440.0 216.3,442.0 216.6,444.0 216.9,446.0 217.2,448.0 217.6,450.0 217.9,452.0 218.3,454.0 218.7,456.0 219.1,458.0 219.5,460.0 219.9,462.0 220.3,464.0 220.7,466.0 221.2,468.0 221.6,470.0 222.1,472.0 222.5,474.0 223.0,476.0 223.5,478.0 224.0,480.0 224.5,482.0 225.1,484.0 225.6,486.0 226.2,488.0 226.7,490.0 227.3,492.0 227.9,494.0 228.5,496.0 229.1,498.0 229.8,500.0 230.4,502.0 231.0,504.0 231.7,506.0 232.4,508.0 233.1,510.0 233.8,512.0 234.5,514.0 235.2,516.0 235.9,518.0 236.7,520.0 237.5,522.0 238.2,524.0 239.0,526.0 239.8,528.0 240.7,530.0 241.5,532.0 242.3,534.0 243.2,536.0 244.1,538.0 245.0,540.0 245.9,542.0 246.8,544.0 247.7,546.0 248.6,548.0 249.6,550.0 250.6,552.0 251.6,554.0 252.6,556.0 253.6,558.0 254.6,560.0 255.6,562.0 256.7,564.0 257.8,566.0 258.9,568.0 260.0,570.0 261.1,572.0 262.2,574.0 263.4,576.0 264.6,578.0 265.7,580.0 266.9,582.0 268.1,584.0 269.4,586.0 270.6,588.0 271.9,590.0 273.2,592.0 274.5,594.0 275.8,596.0 277.1,598.0 278.4,600.0 279.8,602.0 281.2,604.0 282.6,606.0 284.0,608.0 285.4,610.0 286.9,612.0 288.3,614.0 289.8,616.0 291.3,618.0 292.8,620.0 294.4,622.0 295.9,624.0 297.5,626.0 299.1,628.0 300.7,630.0 302.3,632.0 304.0,634.0 305.6,636.0 307.3,638.0 309.0,640.0 310.7,642.0 312.5,644.0 314.2,646.0 316.0,648.0 317.8,650.0 319.6,652.0 321.4,654.0 323.3,656.0 325.2,658.0 327.1,660.0 329.0,662.0 330.9,664.0 332.9,666.0 334.8,668.0 336.8,670.0 338.8,672.0 340.9,674.0 342.9,676.0 345.0,678.0 347.1,680.0 349.2,682.0 351.3,684.0 353.5,686.0 355.7,688.0 357.9,690.0 360.1,692.0 362.3,694.0 364.6,696.0 366.9,698.0 369.2,700.0 371.5,702.0 373.9,704.0 376.3,706.0 378.7,708.0 381.1,710.0 383.5,712.0 386.0,714.0 388.5,716.0 391.0,718.0 393.5,720.0 396.0,722.0 398.6,724.0 401.2,726.0 403.8,728.0 406.5,730.0 409.1,732.0 411.8,734.0 414.5,736.0 417.3,738.0 420.0,740.0 422.8,742.0 425.6,744.0 428.4,746.0 431.3,748.0 434.2,750.0" stroke="#800000"/>
<polyline points="323.1,50.0 322.3,52.0 321.5,54.0 320.6,56.0 319.8,58.0 319.0,60.0 318.2,62.0 317.4,64.0 316.6,66.0 315.8,68.0 315.0,70.0 314.2,72.0 313.4,74.0 312.7,76.0 311.9,78.0 311.1,80.0 310.3,82.0 309.6,84.0 308.8,86.0 308.0,88.0 307.3,90.0 306.5,92.0 305.8,94.0 305.0,96.0 304.3,98.0 303.6,100.0 302.8,102.0 302.1,104.0 301.4,106.0 300.7,108.0 299.9,110.0 299.2,112.0 298.5,114.0 297.8,116.0 297.1,118.0 296.4,120.0 295.7,122.0 295.1,124.0 294.4,126.0 293.7,128.0 293.0,130.0 292.3,132.0 291.7,134.0 291.0,136.0 290.4,138.0 289.7,140.0 289.1,142.0 288.4,144.0 287.8,146.0 287.1,148.0 286.5,150.0 285.9,152.0 285.3,154.0 284.6,156.0 284.0,158.0 283.4,160.0 282.8,162.0 282.2,164.0 281.6,166.0 281.0,168.0 280.4,170.0 279.9,172.0 279.3,174.0 278.7,176.0 278.1,178.0 277.6,180.0 277.0,182.0 276.5,184.0 275.9,186.0 275.4,188.0 274.9,190.0 274.3,192.0 273.8,194.0 273.3,196.0 272.8,198.0 272.2,200.0 271.7,202.0 271.2,204.0 270.7,206.0 270.2,208.0 269.8,210.0 269.3,212.0 268.8,214.0 268.3,216.0 267.9,218.0 267.4,220.0 267.0,222.0 266.5,224.0 266.1,226.0 265.6,228.0 265.2,230.0 264.8,232.0 264.4,234.0 263.9,236.0 263.5,238.0 263.1,240.0 262.7,242.0 262.3,244.0 261.9,246.0 261.6,248.0 261.2,250.0 260.8,252.0 260.5,254.0 260.1,256.0 259.8,258.0 259.4,260.0 259.1,262.0 258.7,264.0 258.4,266.0 258.1,268.0 257.8,270.0 257.5,272.0 257.2,274.0 256.9,276.0 256.6,278.0 256.3,280.0 256.0,282.0 255.7,284.0 255.5,286.0 255.2,288.0 255.0,290.0 254.7,292.0 254.5,294.0 254.3,296.0 254.0,298.0 253.8,300.0 253.6,302.0 253.4,304.0 253.2,306.0 253.0,308.0 252.8,310.0 252.7,312.0 252.5,314.0 252.3,316.0 252.2,318.0 252.0,320.0 251.9,322.0 251.8,324.0 251.6,326.0 251.5,328.0 251.4,330.0 251.3,332.0 251.2,334.0 251.1,336.0 251.0,338.0 251.0,340.0 250.9,342.0 250.8,344.0 250.8,346.0 250.7,348.0 250.7,350.0 250.7,352.0 250.7,354.0 250.7,356.0 250.7,358.0 250.7,360.0 250.7,362.0 250.7,364.0 250.7,366.0 250.8,368.0 250.8,370.0 250.9,372.0 250.9,374.0 251.0,376.0 251.1,378.0 251.2,380.0 251.3,382.0 251.4,384.0 251.5,386.0 251.6,388.0 251.7,390.0 251.9,392.0 252.0,394.0 252.2,396.0 252.4,398.0 252.5,400.0 252.7,402.0 252.9,404.0 253.1,406.0 253.3,408.0 253.6,410.0 253.8,412.0 254.1,414.0 254.3,416.0 254.6,418.0 254.8,420.0 255.1,422.0 255.4,424.0 255.7,426.0 256.0,428.0 256.4,430.0 256.7,432.0 257.0,434.0 257.4,436.0 257.7,438.0 258.1,440.0 258.5,442.0 258.9,444.0 259.3,446.0 259.7,448.0 260.1,450.0 260.6,452.0 261.0,454.0 261.5,456.0 262.0,458.0 262.4,460.0 262.9,462.0 263.4,464.0 264.0,466.0 264.5,468.0 265.0,470.0 265.6,472.0 266.1,474.0 266.7,476.0 267.3,478.0 267.9,480.0 268.5,482.0 269.1,484.0 269.8,486.0 270.4,488.0 271.1,490.0 271.7,492.0 272.4,494.0 273.1,496.0 273.8,498.0 274.5,500.0 275.3,502.0 276.0,504.0 276.8,506.0 277.5,508.0 278.3,510.0 279.1,512.0 279.9,514.0 280.7,516.0 281.6,518.0 282.4,520.0 283.3,522.0 284.2,524.0 285.1,526.0 286.0,528.0 286.9,530.0 287.8,532.0 288.8,534.0 289.7,536.0 290.7,538.0 291.7,540.0 292.7,542.0 293.7,544.0 294.7,546.0 295.8,548.0 296.8,550.0 297.9,552.0 299.0,554.0 300.1,556.0 301.2,558.0 302.4,560.0 303.5,562.0 304.7,564.0 305.9,566.0 307.1,568.0 308.3,570.0 309.5,572.0 310.8,574.0 312.0,576.0 313.3,578.0 314.6,580.0 315.9,582.0 317.2,584.0 318.6,586.0 319.9,588.0 321.3,590.0 322.7,592.0 324.1,594.0 325.6,596.0 327.0,598.0 328.5,600.0 329.9,602.0 331.4,604.0 333.0,606.0 334.5,608.0 336.0,610.0 337.6,612.0 339.2,614.0 340.8,616.0 342.4,618.0 344.1,620.0 345.7,622.0 347.4,624.0 349.1,626.0 350.8,628.0 352.6,630.0 354.3,632.0 356.1,634.0 357.9,636.0 359.7,638.0 361.5,640.0 363.4,642.0 365.2,644.0 367.1,646.0 369.0,648.0 371.0,650.0 372.9,652.0 374.9,654.0 376.9,656.0 378.9,658.0 380.9,660.0 383.0,662.0 385.0,664.0 387.1,666.0 389.2,668.0 391.4,670.0 393.5,672.0 395.7,674.0 397.9,676.0 400.1,678.0 402.4,680.0 404.6,682.0 406.9,684.0 409.2,686.0 411.5,688.0 413.9,690.0 416.3,692.0 418.6,694.0 421.1,696.0 423.5,698.0 426.0,700.0 428.4,702.0 430.9,704.0 433.5,706.0 436.0,708.0 438.6,710.0 441.2,712.0 443.8,714.0 446.5,716.0 449.1,718.0 451.8,720.0 454.5,722.0 457.3,724.0 460.0,726.0 462.8,728.0 465.6,730.0 468.4,732.0 471.3,734.0 474.2,736.0 477.1,738.0 480.0,740.0 482.9,742.0 485.9,744.0 488.9,746.0 491.9,748.0 495.0,750.0" stroke="#800000"/>
<polyline points="354.2,50.0 353.4,52.0 352.6,54.0 351.8,56.0 351.1,58.0 350.3,60.0 349.5,62.0 348.8,64.0 348.0,66.0 347.3,68.0 346.5,70.0 345.8,72.0 345.0,74.0 344.3,76.0 343.5,78.0 342.8,80.0 342.1,82.0 341.3,84.0 340.6,86.0 339.9,88.0 339.2,90.0 338.5,92.0 337.8,94.0 337.1,96.0 336.4,98.0 335.7,100.0 335.0,102.0 334.3,104.0 333.6,106.0 333.0,108.0 332.3,110.0 331.6,112.0 331.0,114.0 330.3,116.0 329.6,118.0 329.0,120.0 328.3,122.0 327.7,124.0 327.1,126.0 326.4,128.0 325.8,130.0 325.2,132.0 324.5,134.0 323.9,136.0 323.3,138.0 322.7,140.0 322.1,142.0 321.5,144.0 320.9,146.0 320.3,148.0 319.7,150.0 319.2,152.0 318.6,154.0 318.0,156.0 317.5,158.0 316.9,160.0 316.3,162.0 315.8,164.0 315.2,166.0 314.7,168.0 314.2,170.0 313.6,172.0 313.1,174.0 312.6,176.0 312.1,178.0 311.5,180.0 311.0,182.0 310.5,184.0 310.0,186.0 309.5,188.0 309.1,190.0 308.6,192.0 308.1,194.0 307.6,196.0 307.2,198.0 306.7,200.0 306.2,202.0 305.8,204.0 305.4,206.0 304.9,208.0 304.5,210.0 304.0,212.0 303.6,214.0 303.2,216.0 302.8,218.0 302.4,220.0 302.0,222.0 301.6,224.0 301.2,226.0 300.8,228.0 300.4,230.0 300.1,232.0 299.7,234.0 299.3,236.0 299.0,238.0 298.6,240.0 298.3,242.0 298.0,244.0 297.6,246.0 297.3,248.0 297.0,250.0 296.7,252.0 296.4,254.0 296.1,256.0 295.8,258.0 295.5,260.0 295.2,262.0 294.9,264.0 294.6,266.0 294.4,268.0 294.1,270.0 293.9,272.0 293.6,274.0 293.4,276.0 293.2,278.0 292.9,280.0 292.7,282.0 292.5,284.0 292.3,286.0 292.1,288.0 291.9,290.0 291.7,292.0 291.6,294.0 291.4,296.0 291.2,298.0 291.1,300.0 290.9,302.0 290.8,304.0 290.6,306.0 290.5,308.0 290.4,310.0 290.3,312.0 290.2,314.0 290.1,316.0 290.0,318.0 289.9,320.0 289.8,322.0 289.7,324.0 289.7,326.0 289.6,328.0 289.6,330.0 289.5,332.0 289.5,334.0 289.5,336.0 289.5,338.0 289.5,340.0 289.5,342.0 289.5,344.0 289.5,346.0 289.5,348.0 289.6,350.0 289.6,352.0 289.6,354.0 289.7,356.0 289.8,358.0 289.8,360.0 289.9,362.0 290.0,364.0 290.1,366.0 290.2,368.0 290.3,370.0 290.5,372.0 290.6,374.0 290.7,376.0 290.9,378.0 291.0,380.0 291.2,382.0 291.4,384.0 291.6,386.0 291.8,388.0 292.0,390.0 292.2,392.0 292.4,394.0 292.7,396.0 292.9,398.0 293.2,400.0 293.4,402.0 293.7,404.0 294.0,406.0 294.3,408.0 294.6,410.0 294.9,412.0 295.2,414.0 295.5,416.0 295.9,418.0 296.2,420.0 296.6,422.0 296.9,424.0 297.3,426.0 297.7,428.0 298.1,430.0 298.5,432.0 299.0,434.0 299.4,436.0 299.8,438.0 300.3,440.0 300.8,442.0 301.2,444.0 301.7,446.0 302.2,448.0 302.7,450.0 303.2,452.0 303.8,454.0 304.3,456.0 304.9,458.0 305.4,460.0 306.0,462.0 306.6,464.0 307.2,466.0 307.8,468.0 308.4,470.0 309.1,472.0 309.7,474.0 310.4,476.0 311.1,478.0 311.8,480.0 312.4,482.0 313.2,484.0 313.9,486.0 314.6,488.0 315.4,490.0 316.1,492.0 316.9,494.0 317.7,496.0 318.5,498.0 319.3,500.0 320.1,502.0 321.0,504.0 321.8,506.0 322.7,508.0 323.5,510.0 324.4,512.0 325.3,514.0 326.3,516.0 327.2,518.0 328.1,520.0 329.1,522.0 330.1,524.0 331.1,526.0 332.1,528.0 333.1,530.0 334.1,532.0 335.2,534.0 336.2,536.0 337.3,538.0 338.4,540.0 339.5,542.0 340.6,544.0 341.8,546.0 342.9,548.0 344.1,550.0 345.3,552.0 346.5,554.0 347.7,556.0 348.9,558.0 350.1,560.0 351.4,562.0 352.7,564.0 354.0,566.0 355.3,568.0 356.6,570.0 357.9,572.0 359.3,574.0 360.7,576.0 362.1,578.0 363.5,580.0 364.9,582.0 366.3,584.0 367.8,586.0 369.3,588.0 370.8,590.0 372.3,592.0 373.8,594.0 375.3,596.0 376.9,598.0 378.5,600.0 380.1,602.0 381.7,604.0 383.3,606.0 385.0,608.0 386.7,610.0 388.4,612.0 390.1,614.0 391.8,616.0 393.5,618.0 395.3,620.0 397.1,622.0 398.9,624.0 400.7,626.0 402.6,628.0 404.4,630.0 406.3,632.0 408.2,634.0 410.1,636.0 412.1,638.0 414.0,640.0 416.0,642.0 418.0,644.0 420.0,646.0 422.1,648.0 424.1,650.0 426.2,652.0 428.3,654.0 430.5,656.0 432.6,658.0 434.8,660.0 437.0,662.0 439.2,664.0 441.4,666.0 443.7,668.0 445.9,670.0 448.2,672.0 450.5,674.0 452.9,676.0 455.2,678.0 457.6,680.0 460.0,682.0 462.5,684.0 464.9,686.0 467.4,688.0 469.9,690.0 472.4,692.0 475.0,694.0 477.5,696.0 480.1,698.0 482.7,700.0 485.4,702.0 488.0,704.0 490.7,706.0 493.4,708.0 496.1,710.0 498.9,712.0 501.7,714.0 504.5,716.0 507.3,718.0 510.1,720.0 513.0,722.0 515.9,724.0 518.8,726.0 521.8,728.0 524.7,730.0 527.7,732.0 530.7,734.0 533.8,736.0 536.9,738.0 540.0,740.0 543.1,742.0 546.2,744.0 549.4,746.0 552.6,748.0 555.8,750.0" stroke="#800000"/>
<polyline points="385.3,50.0 384.5,52.0 383.8,54.0 383.0,56.0 382.3,58.0 381.6,60.0 380.8,62.0 380.1,64.0 379.4,66.0 378.7,68.0 378.0,70.0 377.3,72.0 376.6,74.0 375.9,76.0 375.2,78.0 374.5,80.0 373.8,82.0 373.1,84.0 372.4,86.0 371.8,88.0 371.1,90.0 370.4,92.0 369.8,94.0 369.1,96.0 368.5,98.0 367.8,100.0 367.2,102.0 366.5,104.0 365.9,106.0 365.2,108.0 364.6,110.0 364.0,112.0 363.4,114.0 362.8,116.0 362.1,118.0 361.5,120.0 360.9,122.0 360.3,124.0 359.7,126.0 359.2,128.0 358.6,130.0 358.0,132.0 357.4,134.0 356.8,136.0 356.3,138.0 355.7,140.0 355.2,142.0 354.6,144.0 354.1,146.0 353.5,148.0 353.0,150.0 352.4,152.0 351.9,154.0 351.4,156.0 350.9,158.0 350.4,160.0 349.9,162.0 349.4,164.0 348.9,166.0 348.4,168.0 347.9,170.0 347.4,172.0 346.9,174.0 346.4,176.0 346.0,178.0 345.5,180.0 345.0,182.0 344.6,184.0 344.1,186.0 343.7,188.0 343.3,190.0 342.8,192.0 342.4,194.0 342.0,196.0 341.6,198.0 341.2,200.0 340.8,202.0 340.4,204.0 340.0,206.0 339.6,208.0 339.2,210.0 338.8,212.0 338.4,214.0 338.1,216.0 337.7,218.0 337.4,220.0 337.0,222.0 336.7,224.0 336.3,226.0 336.0,228.0 335.7,230.0 335.4,232.0 335.0,234.0 334.7,236.0 334.4,238.0 334.1,240.0 333.9,242.0 333.6,244.0 333.3,246.0 333.0,248.0 332.8,250.0 332.5,252.0 332.3,254.0 332.0,256.0 331.8,258.0 331.5,260.0 331.3,262.0 331.1,264.0 330.9,266.0 330.7,268.0 330.5,270.0 330.3,272.0 330.1,274.0 329.9,276.0 329.7,278.0 329.6,280.0 329.4,282.0 329.3,284.0 329.1,286.0 329.0,288.0 328.9,290.0 328.7,292.0 328.6,294.0 328.5,296.0 328.4,298.0 328.3,300.0 328.2,302.0 328.1,304.0 328.1,306.0 328.0,308.0 327.9,310.0 327.9,312.0 327.8,314.0 327.8,316.0 327.8,318.0 327.8,320.0 327.7,322.0 327.7,324.0 327.7,326.0 327.7,328.0 327.8,330.0 327.8,332.0 327.8,334.0 327.9,336.0 327.9,338.0 328.0,340.0 328.0,342.0 328.1,344.0 328.2,346.0 328.3,348.0 328.4,350.0 328.5,352.0 328.6,354.0 328.7,356.0 328.9,358.0 329.0,360.0 329.2,362.0 329.3,364.0 329.5,366.0 329.7,368.0 329.9,370.0 330.1,372.0 330.3,374.0 330.5,376.0 330.7,378.0 330.9,380.0 331.2,382.0 331.4,384.0 331.7,386.0 331.9,388.0 332.2,390.0 332.5,392.0 332.8,394.0 333.1,396.0 333.4,398.0 333.8,400.0 334.1,402.0 334.4,404.0 334.8,406.0 335.2,408.0 335.5,410.0 335.9,412.0 336.3,414.0 336.7,416.0 337.2,418.0 337.6,420.0 338.0,422.0 338.5,424.0 338.9,426.0 339.4,428.0 339.9,430.0 340.4,432.0 340.9,434.0 341.4,436.0 341.9,438.0 342.4,440.0 343.0,442.0 343.6,444.0 344.1,446.0 344.7,448.0 345.3,450.0 345.9,452.0 346.5,454.0 347.1,456.0 347.8,458.0 348.4,460.0 349.1,462.0 349.8,464.0 350.5,466.0 351.2,468.0 351.9,470.0 352.6,472.0 353.3,474.0 354.1,476.0 354.8,478.0 355.6,480.0 356.4,482.0 357.2,484.0 358.0,486.0 358.8,488.0 359.7,490.0 360.5,492.0 361.4,494.0 362.3,496.0 363.2,498.0 364.1,500.0 365.0,502.0 365.9,504.0 366.9,506.0 367.8,508.0 368.8,510.0 369.8,512.0 370.8,514.0 371.8,516.0 372.8,518.0 373.9,520.0 374.9,522.0 376.0,524.0 377.1,526.0 378.2,528.0 379.3,530.0 380.4,532.0 381.6,534.0 382.7,536.0 383.9,538.0 385.1,540.0 386.3,542.0 387.5,544.0 388.8,546.0 390.0,548.0 391.3,550.0 392.6,552.0 393.9,554.0 395.2,556.0 396.6,558.0 397.9,560.0 399.3,562.0 400.7,564.0 402.1,566.0 403.5,568.0 404.9,570.0 406.4,572.0 407.8,574.0 409.3,576.0 410.8,578.0 412.3,580.0 413.9,582.0 415.4,584.0 417.0,586.0 418.6,588.0 420.2,590.0 421.8,592.0 423.5,594.0 425.1,596.0 426.8,598.0 428.5,600.0 430.2,602.0 432.0,604.0 433.7,606.0 435.5,608.0 437.3,610.0 439.1,612.0 440.9,614.0 442.8,616.0 444.7,618.0 446.5,620.0 448.5,622.0 450.4,624.0 452.3,626.0 454.3,628.0 456.3,630.0 458.3,632.0 460.3,634.0 462.4,636.0 464.5,638.0 466.5,640.0 468.7,642.0 470.8,644.0 472.9,646.0 475.1,648.0 477.3,650.0 479.5,652.0 481.8,654.0 484.0,656.0 486.3,658.0 488.6,660.0 491.0,662.0 493.3,664.0 495.7,666.0 498.1,668.0 500.5,670.0 502.9,672.0 505.4,674.0 507.9,676.0 510.4,678.0 512.9,680.0 515.5,682.0 518.0,684.0 520.6,686.0 523.2,688.0 525.9,690.0 528.6,692.0 531.3,694.0 534.0,696.0 536.7,698.0 539.5,700.0 542.3,702.0 545.1,704.0 547.9,706.0 550.8,708.0 553.7,710.0 556.6,712.0 559.5,714.0 562.5,716.0 565.4,718.0 568.5,720.0 571.5,722.0 574.5,724.0 577.6,726.0 580.7,728.0 583.9,730.0 587.0,732.0 590.2,734.0 593.4,736.0 596.7,738.0 599.9,740.0 603.2,742.0 606.5,744.0 609.9,746.0 613.2,748.0 616.6,750.0" stroke="#800000"/>
<polyline points="416.3,50.0 415.6,52.0 414.9,54.0 414.2,56.0 413.5,58.0 412.9,60.0 412.2,62.0 411.5,64.0 410.8,66.0 410.1,68.0 409.5,70.0 408.8,72.0 408.1,74.0 407.5,76.0 406.8,78.0 406.2,80.0 405.5,82.0 404.9,84.0 404.3,86.0 403.6,88.0 403.0,90.0 402.4,92.0 401.8,94.0 401.1,96.0 400.5,98.0 399.9,100.0 399.3,102.0 398.7,104.0 398.1,106.0 397.5,108.0 396.9,110.0 396.4,112.0 395.8,114.0 395.2,116.0 394.7,118.0 394.1,120.0 393.5,122.0 393.0,124.0 392.4,126.0 391.9,128.0 391.4,130.0 390.8,132.0 390.3,134.0 389.8,136.0 389.2,138.0 388.7,140.0 388.2,142.0 387.7,144.0 387.2,146.0 386.7,148.0 386.2,150.0 385.7,152.0 385.3,154.0 384.8,156.0 384.3,158.0 383.8,160.0 383.4,162.0 382.9,164.0 382.5,166.0 382.0,168.0 381.6,170.0 381.2,172.0 380.7,174.0 380.3,176.0 379.9,178.0 379.5,180.0 379.1,182.0 378.6,184.0 378.3,186.0 377.9,188.0 377.5,190.0 377.1,192.0 376.7,194.0 376.3,196.0 376.0,198.0 375.6,200.0 375.3,202.0 374.9,204.0 374.6,206.0 374.2,208.0 373.9,210.0 373.6,212.0 373.3,214.0 372.9,216.0 372.6,218.0 372.3,220.0 372.0,222.0 371.8,224.0 371.5,226.0 371.2,228.0 370.9,230.0 370.7,232.0 370.4,234.0 370.1,236.0 369.9,238.0 369.7,240.0 369.4,242.0 369.2,244.0 369.0,246.0 368.8,248.0 368.6,250.0 368.3,252.0 368.2,254.0 368.0,256.0 367.8,258.0 367.6,260.0 367.4,262.0 367.3,264.0 367.1,266.0 367.0,268.0 366.8,270.0 366.7,272.0 366.6,274.0 366.4,276.0 366.3,278.0 366.2,280.0 366.1,282.0 366.0,284.0 365.9,286.0 365.9,288.0 365.8,290.0 365.7,292.0 365.7,294.0 365.6,296.0 365.6,298.0 365.5,300.0 365.5,302.0 365.5,304.0 365.5,306.0 365.5,308.0 365.5,310.0 365.5,312.0 365.5,314.0 365.5,316.0 365.6,318.0 365.6,320.0 365.7,322.0 365.7,324.0 365.8,326.0 365.9,328.0 365.9,330.0 366.0,332.0 366.1,334.0 366.2,336.0 366.4,338.0 366.5,340.0 366.6,342.0 366.8,344.0 366.9,346.0 367.1,348.0 367.2,350.0 367.4,352.0 367.6,354.0 367.8,356.0 368.0,358.0 368.2,360.0 368.4,362.0 368.6,364.0 368.9,366.0 369.1,368.0 369.4,370.0 369.7,372.0 369.9,374.0 370.2,376.0 370.5,378.0 370.8,380.0 371.1,382.0 371.4,384.0 371.8,386.0 372.1,388.0 372.5,390.0 372.8,392.0 373.2,394.0 373.6,396.0 374.0,398.0 374.4,400.0 374.8,402.0 375.2,404.0 375.6,406.0 376.1,408.0 376.5,410.0 377.0,412.0 377.5,414.0 377.9,416.0 378.4,418.0 378.9,420.0 379.5,422.0 380.0,424.0 380.5,426.0 381.1,428.0 381.6,430.0 382.2,432.0 382.8,434.0 383.4,436.0 384.0,438.0 384.6,440.0 385.2,442.0 385.9,444.0 386.5,446.0 387.2,448.0 387.9,450.0 388.6,452.0 389.3,454.0 390.0,456.0 390.7,458.0 391.4,460.0 392.2,462.0 392.9,464.0 393.7,466.0 394.5,468.0 395.3,470.0 396.1,472.0 396.9,474.0 397.8,476.0 398.6,478.0 399.5,480.0 400.3,482.0 401.2,484.0 402.1,486.0 403.1,488.0 404.0,490.0 404.9,492.0 405.9,494.0 406.8,496.0 407.8,498.0 408.8,500.0 409.8,502.0 410.9,504.0 411.9,506.0 413.0,508.0 414.0,510.0 415.1,512.0 416.2,514.0 417.3,516.0 418.4,518.0 419.6,520.0 420.7,522.0 421.9,524.0 423.1,526.0 424.3,528.0 425.5,530.0 426.7,532.0 428.0,534.0 429.3,536.0 430.5,538.0 431.8,540.0 433.1,542.0 434.5,544.0 435.8,546.0 437.2,548.0 438.5,550.0 439.9,552.0 441.3,554.0 442.8,556.0 444.2,558.0 445.7,560.0 447.1,562.0 448.6,564.0 450.1,566.0 451.7,568.0 453.2,570.0 454.8,572.0 456.4,574.0 458.0,576.0 459.6,578.0 461.2,580.0 462.8,582.0 464.5,584.0 466.2,586.0 467.9,588.0 469.6,590.0 471.4,592.0 473.1,594.0 474.9,596.0 476.7,598.0 478.5,600.0 480.4,602.0 482.2,604.0 484.1,606.0 486.0,608.0 487.9,610.0 489.8,612.0 491.8,614.0 493.8,616.0 495.8,618.0 497.8,620.0 499.8,622.0 501.9,624.0 503.9,626.0 506.0,628.0 508.2,630.0 510.3,632.0 512.5,634.0 514.6,636.0 516.8,638.0 519.1,640.0 521.3,642.0 523.6,644.0 525.9,646.0 528.2,648.0 530.5,650.0 532.8,652.0 535.2,654.0 537.6,656.0 540.0,658.0 542.5,660.0 544.9,662.0 547.4,664.0 549.9,666.0 552.5,668.0 555.0,670.0 557.6,672.0 560.2,674.0 562.8,676.0 565.5,678.0 568.2,680.0 570.9,682.0 573.6,684.0 576.3,686.0 579.1,688.0 581.9,690.0 584.7,692.0 587.6,694.0 590.4,696.0 593.3,698.0 596.2,700.0 599.2,702.0 602.1,704.0 605.1,706.0 608.1,708.0 611.2,710.0 614.3,712.0 617.3,714.0 620.5,716.0 623.6,718.0 626.8,720.0 630.0,722.0 633.2,724.0 636.4,726.0 639.7,728.0 643.0,730.0 646.3,732.0 649.7,734.0 653.1,736.0 656.5,738.0 659.9,740.0 663.3,742.0 666.8,744.0 670.3,746.0 673.9,748.0 677.4,750.0" stroke="#800000"/>
<polyline points="447.4,50.0 446.7,52.0 446.1,54.0 445.4,56.0 444.8,58.0 444.1,60.0 443.5,62.0 442.8,64.0 442.2,66.0 441.6,68.0 440.9,70.0 440.3,72.0 439.7,74.0 439.1,76.0 438.5,78.0 437.9,80.0 437.3,82.0 436.7,84.0 436.1,86.0 435.5,88.0 434.9,90.0 434.3,92.0 433.7,94.0 433.2,96.0 432.6,98.0 432.0,100.0 431.5,102.0 430.9,104.0 430.4,106.0 429.8,108.0 429.3,110.0 428.7,112.0 428.2,114.0 427.7,116.0 427.2,118.0 426.6,120.0 426.1,122.0 425.6,124.0 425.1,126.0 424.6,128.0 424.1,130.0 423.6,132.0 423.2,134.0 422.7,136.0 422.2,138.0 421.7,140.0 421.3,142.0 420.8,144.0 420.4,146.0 419.9,148.0 419.5,150.0 419.0,152.0 418.6,154.0 418.2,156.0 417.7,158.0 417.3,160.0 416.9,162.0 416.5,164.0 416.1,166.0 415.7,168.0 415.3,170.0 414.9,172.0 414.5,174.0 414.2,176.0 413.8,178.0 413.4,180.0 413.1,182.0 412.7,184.0 412.4,186.0 412.0,188.0 411.7,190.0 411.3,192.0 411.0,194.0 410.7,196.0 410.4,198.0 410.1,200.0 409.8,202.0 409.5,204.0 409.2,206.0 408.9,208.0 408.6,210.0 408.3,212.0 408.1,214.0 407.8,216.0 407.6,218.0 407.3,220.0 407.1,222.0 406.8,224.0 406.6,226.0 406.4,228.0 406.2,230.0 406.0,232.0 405.7,234.0 405.5,236.0 405.4,238.0 405.2,240.0 405.0,242.0 404.8,244.0 404.7,246.0 404.5,248.0 404.3,250.0 404.2,252.0 404.1,254.0 403.9,256.0 403.8,258.0 403.7,260.0 403.6,262.0 403.5,264.0 403.4,266.0 403.3,268.0 403.2,270.0 403.1,272.0 403.0,274.0 403.0,276.0 402.9,278.0 402.9,280.0 402.8,282.0 402.8,284.0 402.8,286.0 402.7,288.0 402.7,290.0 402.7,292.0 402.7,294.0 402.7,296.0 402.8,298.0 402.8,300.0 402.8,302.0 402.9,304.0 402.9,306.0 403.0,308.0 403.0,310.0 403.1,312.0 403.2,314.0 403.3,316.0 403.4,318.0 403.5,320.0 403.6,322.0 403.7,324.0 403.8,326.0 404.0,328.0 404.1,330.0 404.3,332.0 404.5,334.0 404.6,336.0 404.8,338.0 405.0,340.0 405.2,342.0 405.4,344.0 405.6,346.0 405.8,348.0 406.1,350.0 406.3,352.0 406.6,354.0 406.8,356.0 407.1,358.0 407.4,360.0 407.7,362.0 408.0,364.0 408.3,366.0 408.6,368.0 408.9,370.0 409.2,372.0 409.6,374.0 409.9,376.0 410.3,378.0 410.7,380.0 411.1,382.0 411.5,384.0 411.9,386.0 412.3,388.0 412.7,390.0 413.1,392.0 413.6,394.0 414.0,396.0 414.5,398.0 415.0,400.0 415.5,402.0 416.0,404.0 416.5,406.0 417.0,408.0 417.5,410.0 418.1,412.0 418.6,414.0 419.2,416.0 419.7,418.0 420.3,420.0 420.9,422.0 421.5,424.0 422.1,426.0 422.8,428.0 423.4,430.0 424.1,432.0 424.7,434.0 425.4,436.0 426.1,438.0 426.8,440.0 427.5,442.0 428.2,444.0 428.9,446.0 429.7,448.0 430.4,450.0 431.2,452.0 432.0,454.0 432.8,456.0 433.6,458.0 434.4,460.0 435.3,462.0 436.1,464.0 437.0,466.0 437.8,468.0 438.7,470.0 439.6,472.0 440.5,474.0 441.4,476.0 442.4,478.0 443.3,480.0 444.3,482.0 445.3,484.0 446.3,486.0 447.3,488.0 448.3,490.0 449.3,492.0 450.4,494.0 451.4,496.0 452.5,498.0 453.6,500.0 454.7,502.0 455.8,504.0 457.0,506.0 458.1,508.0 459.3,510.0 460.4,512.0 461.6,514.0 462.8,516.0 464.1,518.0 465.3,520.0 466.6,522.0 467.8,524.0 469.1,526.0 470.4,528.0 471.7,530.0 473.1,532.0 474.4,534.0 475.8,536.0 477.2,538.0 478.6,540.0 480.0,542.0 481.4,544.0 482.8,546.0 484.3,548.0 485.8,550.0 487.3,552.0 488.8,554.0 490.3,556.0 491.9,558.0 493.4,560.0 495.0,562.0 496.6,564.0 498.2,566.0 499.9,568.0 501.5,570.0 503.2,572.0 504.9,574.0 506.6,576.0 508.3,578.0 510.1,580.0 511.8,582.0 513.6,584.0 515.4,586.0 517.2,588.0 519.1,590.0 520.9,592.0 522.8,594.0 524.7,596.0 526.6,598.0 528.6,600.0 530.5,602.0 532.5,604.0 534.5,606.0 536.5,608.0 538.5,610.0 540.6,612.0 542.7,614.0 544.8,616.0 546.9,618.0 549.0,620.0 551.2,622.0 553.4,624.0 555.6,626.0 557.8,628.0 560.0,630.0 562.3,632.0 564.6,634.0 566.9,636.0 569.2,638.0 571.6,640.0 573.9,642.0 576.3,644.0 578.8,646.0 581.2,648.0 583.7,650.0 586.2,652.0 588.7,654.0 591.2,656.0 593.8,658.0 596.3,660.0 598.9,662.0 601.6,664.0 604.2,666.0 606.9,668.0 609.6,670.0 612.3,672.0 615.1,674.0 617.8,676.0 620.6,678.0 623.4,680.0 626.3,682.0 629.2,684.0 632.0,686.0 635.0,688.0 637.9,690.0 640.9,692.0 643.9,694.0 646.9,696.0 649.9,698.0 653.0,700.0 656.1,702.0 659.2,704.0 662.3,706.0 665.5,708.0 668.7,710.0 671.9,712.0 675.2,714.0 678.5,716.0 681.8,718.0 685.1,720.0 688.5,722.0 691.8,724.0 695.2,726.0 698.7,728.0 702.1,730.0 705.6,732.0 709.1,734.0 712.7,736.0 716.3,738.0 719.9,740.0 723.5,742.0 727.1,744.0 730.8,746.0 734.5,748.0 738.2,750.0" stroke="#800000"/>
<polyline points="478.5,50.0 477.9,52.0 477.2,54.0 476.6,56.0 476.0,58.0 475.4,60.0 474.8,62.0 474.2,64.0 473.6,66.0 473.0,68.0 472.4,70.0 471.8,72.0 471.3,74.0 470.7,76.0 470.1,78.0 469.6,80.0 469.0,82.0 468.4,84.0 467.9,86.0 467.3,88.0 466.8,90.0 466.3,92.0 465.7,94.0 465.2,96.0 464.7,98.0 464.1,100.0 463.6,102.0 463.1,104.0 462.6,106.0 462.1,108.0 461.6,110.0 461.1,112.0 460.6,114.0 460.2,116.0 459.7,118.0 459.2,120.0 458.7,122.0 458.3,124.0 457.8,126.0 457.4,128.0 456.9,130.0 456.5,132.0 456.0,134.0 455.6,136.0 455.2,138.0 454.7,140.0 454.3,142.0 453.9,144.0 453.5,146.0 453.1,148.0 452.7,150.0 452.3,152.0 451.9,154.0 451.5,156.0 451.2,158.0 450.8,160.0 450.4,162.0 450.1,164.0 449.7,166.0 449.4,168.0 449.0,170.0 448.7,172.0 448.3,174.0 448.0,176.0 447.7,178.0 447.4,180.0 447.1,182.0 446.8,184.0 446.5,186.0 446.2,188.0 445.9,190.0 445.6,192.0 445.3,194.0 445.1,196.0 444.8,198.0 444.5,200.0 444.3,202.0 444.0,204.0 443.8,206.0 443.6,208.0 443.3,210.0 443.1,212.0 442.9,214.0 442.7,216.0 442.5,218.0 442.3,220.0 442.1,222.0 441.9,224.0 441.7,226.0 441.6,228.0 441.4,230.0 441.2,232.0 441.1,234.0 441.0,236.0 440.8,238.0 440.7,240.0 440.6,242.0 440.4,244.0 440.3,246.0 440.2,248.0 440.1,250.0 440.0,252.0 440.0,254.0 439.9,256.0 439.8,258.0 439.7,260.0 439.7,262.0 439.6,264.0 439.6,266.0 439.6,268.0 439.5,270.0 439.5,272.0 439.5,274.0 439.5,276.0 439.5,278.0 439.5,280.0 439.5,282.0 439.6,284.0 439.6,286.0 439.6,288.0 439.7,290.0 439.7,292.0 439.8,294.0 439.9,296.0 439.9,298.0 440.0,300.0 440.1,302.0 440.2,304.0 440.3,306.0 440.5,308.0 440.6,310.0 440.7,312.0 440.9,314.0 441.0,316.0 441.2,318.0 441.3,320.0 441.5,322.0 441.7,324.0 441.9,326.0 442.1,328.0 442.3,330.0 442.5,332.0 442.8,334.0 443.0,336.0 443.2,338.0 443.5,340.0 443.8,342.0 444.0,344.0 444.3,346.0 444.6,348.0 444.9,350.0 445.2,352.0 445.5,354.0 445.9,356.0 446.2,358.0 446.6,360.0 446.9,362.0 447.3,364.0 447.7,366.0 448.0,368.0 448.4,370.0 448.8,372.0 449.3,374.0 449.7,376.0 450.1,378.0 450.6,380.0 451.0,382.0 451.5,384.0 452.0,386.0 452.4,388.0 452.9,390.0 453.5,392.0 454.0,394.0 454.5,396.0 455.0,398.0 455.6,400.0 456.1,402.0 456.7,404.0 457.3,406.0 457.9,408.0 458.5,410.0 459.1,412.0 459.7,414.0 460.4,416.0 461.0,418.0 461.7,420.0 462.4,422.0 463.0,424.0 463.7,426.0 464.4,428.0 465.2,430.0 465.9,432.0 466.6,434.0 467.4,436.0 468.2,438.0 468.9,440.0 469.7,442.0 470.5,444.0 471.3,446.0 472.2,448.0 473.0,450.0 473.9,452.0 474.7,454.0 475.6,456.0 476.5,458.0 477.4,460.0 478.3,462.0 479.3,464.0 480.2,466.0 481.2,468.0 482.1,470.0 483.1,472.0 484.1,474.0 485.1,476.0 486.2,478.0 487.2,480.0 488.2,482.0 489.3,484.0 490.4,486.0 491.5,488.0 492.6,490.0 493.7,492.0 494.9,494.0 496.0,496.0 497.2,498.0 498.4,500.0 499.6,502.0 500.8,504.0 502.0,506.0 503.2,508.0 504.5,510.0 505.8,512.0 507.1,514.0 508.4,516.0 509.7,518.0 511.0,520.0 512.4,522.0 513.7,524.0 515.1,526.0 516.5,528.0 517.9,530.0 519.4,532.0 520.8,534.0 522.3,536.0 523.8,538.0 525.3,540.0 526.8,542.0 528.3,544.0 529.9,546.0 531.4,548.0 533.0,550.0 534.6,552.0 536.2,554.0 537.9,556.0 539.5,558.0 541.2,560.0 542.9,562.0 544.6,564.0 546.3,566.0 548.1,568.0 549.8,570.0 551.6,572.0 553.4,574.0 555.2,576.0 557.1,578.0 558.9,580.0 560.8,582.0 562.7,584.0 564.6,586.0 566.6,588.0 568.5,590.0 570.5,592.0 572.5,594.0 574.5,596.0 576.5,598.0 578.6,600.0 580.6,602.0 582.7,604.0 584.9,606.0 587.0,608.0 589.2,610.0 591.3,612.0 593.5,614.0 595.7,616.0 598.0,618.0 600.3,620.0 602.5,622.0 604.8,624.0 607.2,626.0 609.5,628.0 611.9,630.0 614.3,632.0 616.7,634.0 619.1,636.0 621.6,638.0 624.1,640.0 626.6,642.0 629.1,644.0 631.7,646.0 634.2,648.0 636.8,650.0 639.5,652.0 642.1,654.0 644.8,656.0 647.5,658.0 650.2,660.0 652.9,662.0 655.7,664.0 658.5,666.0 661.3,668.0 664.1,670.0 667.0,672.0 669.9,674.0 672.8,676.0 675.8,678.0 678.7,680.0 681.7,682.0 684.7,684.0 687.8,686.0 690.8,688.0 693.9,690.0 697.0,692.0 700.2,694.0 703.3,696.0 706.5,698.0 709.7,700.0 713.0,702.0 716.3,704.0 719.6,706.0 722.9,708.0 726.2,710.0 729.6,712.0 733.0,714.0 736.5,716.0 739.9,718.0 743.4,720.0 746.9,722.0 750.5,724.0 754.0,726.0 757.6,728.0 761.3,730.0 764.9,732.0 768.6,734.0 772.3,736.0 776.1,738.0 779.8,740.0 783.6,742.0 787.4,744.0 791.3,746.0 795.2,748.0 799.1,750.0" stroke="#800000"/>
<polyline points="509.6,50.0 509.0,52.0 508.4,54.0 507.8,56.0 507.3,58.0 506.7,60.0 506.1,62.0 505.6,64.0 505.0,66.0 504.5,68.0 503.9,70.0 503.4,72.0 502.8,74.0 502.3,76.0 501.8,78.0 501.2,80.0 500.7,82.0 500.2,84.0 499.7,86.0 499.2,88.0 498.7,90.0 498.2,92.0 497.7,94.0 497.2,96.0 496.7,98.0 496.3,100.0 495.8,102.0 495.3,104.0 494.9,106.0 494.4,108.0 493.9,110.0 493.5,112.0 493.1,114.0 492.6,116.0 492.2,118.0 491.8,120.0 491.3,122.0 490.9,124.0 490.5,126.0 490.1,128.0 489.7,130.0 489.3,132.0 488.9,134.0 488.5,136.0 488.1,138.0 487.7,140.0 487.4,142.0 487.0,144.0 486.6,146.0 486.3,148.0 485.9,150.0 485.6,152.0 485.3,154.0 484.9,156.0 484.6,158.0 484.3,160.0 483.9,162.0 483.6,164.0 483.3,166.0 483.0,168.0 482.7,170.0 482.4,172.0 482.2,174.0 481.9,176.0 481.6,178.0 481.3,180.0 481.1,182.0 480.8,184.0 480.6,186.0 480.3,188.0 480.1,190.0 479.9,192.0 479.6,194.0 479.4,196.0 479.2,198.0 479.0,200.0 478.8,202.0 478.6,204.0 478.4,206.0 478.2,208.0 478.1,210.0 477.9,212.0 477.7,214.0 477.6,216.0 477.4,218.0 477.3,220.0 477.1,222.0 477.0,224.0 476.9,226.0 476.8,228.0 476.6,230.0 476.5,232.0 476.4,234.0 476.4,236.0 476.3,238.0 476.2,240.0 476.1,242.0 476.1,244.0 476.0,246.0 476.0,248.0 475.9,250.0 475.9,252.0 475.8,254.0 475.8,256.0 475.8,258.0 475.8,260.0 475.8,262.0 475.8,264.0 475.8,266.0 475.9,268.0 475.9,270.0 475.9,272.0 476.0,274.0 476.0,276.0 476.1,278.0 476.2,280.0 476.2,282.0 476.3,284.0 476.4,286.0 476.5,288.0 476.6,290.0 476.7,292.0 476.8,294.0 477.0,296.0 477.1,298.0 477.3,300.0 477.4,302.0 477.6,304.0 477.8,306.0 477.9,308.0 478.1,310.0 478.3,312.0 478.5,314.0 478.7,316.0 479.0,318.0 479.2,320.0 479.4,322.0 479.7,324.0 480.0,326.0 480.2,328.0 480.5,330.0 480.8,332.0 481.1,334.0 481.4,336.0 481.7,338.0 482.0,340.0 482.3,342.0 482.7,344.0 483.0,346.0 483.4,348.0 483.8,350.0 484.1,352.0 484.5,354.0 484.9,356.0 485.3,358.0 485.7,360.0 486.2,362.0 486.6,364.0 487.0,366.0 487.5,368.0 488.0,370.0 488.4,372.0 488.9,374.0 489.4,376.0 489.9,378.0 490.4,380.0 491.0,382.0 491.5,384.0 492.1,386.0 492.6,388.0 493.2,390.0 493.8,392.0 494.4,394.0 495.0,396.0 495.6,398.0 496.2,400.0 496.8,402.0 497.5,404.0 498.1,406.0 498.8,408.0 499.5,410.0 500.2,412.0 500.9,414.0 501.6,416.0 502.3,418.0 503.1,420.0 503.8,422.0 504.6,424.0 505.3,426.0 506.1,428.0 506.9,430.0 507.7,432.0 508.6,434.0 509.4,436.0 510.2,438.0 511.1,440.0 512.0,442.0 512.9,444.0 513.8,446.0 514.7,448.0 515.6,450.0 516.5,452.0 517.5,454.0 518.4,456.0 519.4,458.0 520.4,460.0 521.4,462.0 522.4,464.0 523.5,466.0 524.5,468.0 525.6,470.0 526.6,472.0 527.7,474.0 528.8,476.0 529.9,478.0 531.1,480.0 532.2,482.0 533.4,484.0 534.5,486.0 535.7,488.0 536.9,490.0 538.1,492.0 539.4,494.0 540.6,496.0 541.9,498.0 543.1,500.0 544.4,502.0 545.7,504.0 547.1,506.0 548.4,508.0 549.7,510.0 551.1,512.0 552.5,514.0 553.9,516.0 555.3,518.0 556.7,520.0 558.2,522.0 559.7,524.0 561.1,526.0 562.6,528.0 564.2,530.0 565.7,532.0 567.2,534.0 568.8,536.0 570.4,538.0 572.0,540.0 573.6,542.0 575.2,544.0 576.9,546.0 578.6,548.0 580.3,550.0 582.0,552.0 583.7,554.0 585.4,556.0 587.2,558.0 589.0,560.0 590.8,562.0 592.6,564.0 594.4,566.0 596.3,568.0 598.1,570.0 600.0,572.0 601.9,574.0 603.9,576.0 605.8,578.0 607.8,580.0 609.8,582.0 611.8,584.0 613.8,586.0 615.9,588.0 617.9,590.0 620.0,592.0 622.1,594.0 624.3,596.0 626.4,598.0 628.6,600.0 630.8,602.0 633.0,604.0 635.2,606.0 637.5,608.0 639.8,610.0 642.1,612.0 644.4,614.0 646.7,616.0 649.1,618.0 651.5,620.0 653.9,622.0 656.3,624.0 658.8,626.0 661.3,628.0 663.8,630.0 666.3,632.0 668.8,634.0 671.4,636.0 674.0,638.0 676.6,640.0 679.2,642.0 681.9,644.0 684.6,646.0 687.3,648.0 690.0,650.0 692.8,652.0 695.6,654.0 698.4,656.0 701.2,658.0 704.1,660.0 706.9,662.0 709.8,664.0 712.8,666.0 715.7,668.0 718.7,670.0 721.7,672.0 724.7,674.0 727.8,676.0 730.9,678.0 734.0,680.0 737.1,682.0 740.3,684.0 743.5,686.0 746.7,688.0 749.9,690.0 753.2,692.0 756.5,694.0 759.8,696.0 763.1,698.0 766.5,700.0 769.9,702.0 773.3,704.0 776.8,706.0 780.3,708.0 783.8,710.0 787.3,712.0 790.9,714.0 794.5,716.0 798.1,718.0 801.7,720.0 805.4,722.0 809.1,724.0 812.9,726.0 816.6,728.0 820.4,730.0 824.2,732.0 828.1,734.0 831.9,736.0 835.8,738.0 839.8,740.0 843.7,742.0 847.7,744.0 851.8,746.0 855.8,748.0 859.9,750.0" stroke="#800000"/>
<polyline points="540.6,50.0 540.1,52.0 539.6,54.0 539.0,56.0 538.5,58.0 538.0,60.0 537.4,62.0 536.9,64.0 536.4,66.0 535.9,68.0 535.4,70.0 534.9,72.0 534.4,74.0 533.9,76.0 533.4,78.0 532.9,80.0 532.5,82.0 532.0,84.0 531.5,86.0 531.1,88.0 530.6,90.0 530.1,92.0 529.7,94.0 529.3,96.0 528.8,98.0 528.4,100.0 528.0,102.0 527.5,104.0 527.1,106.0 526.7,108.0 526.3,110.0 525.9,112.0 525.5,114.0 525.1,116.0 524.7,118.0 524.3,120.0 523.9,122.0 523.6,124.0 523.2,126.0 522.8,128.0 522.5,130.0 522.1,132.0 521.8,134.0 521.4,136.0 521.1,138.0 520.8,140.0 520.4,142.0 520.1,144.0 519.8,146.0 519.5,148.0 519.2,150.0 518.9,152.0 518.6,154.0 518.3,156.0 518.0,158.0 517.7,160.0 517.5,162.0 517.2,164.0 516.9,166.0 516.7,168.0 516.4,170.0 516.2,172.0 516.0,174.0 515.7,176.0 515.5,178.0 515.3,180.0 515.1,182.0 514.9,184.0 514.7,186.0 514.5,188.0 514.3,190.0 514.1,192.0 513.9,194.0 513.8,196.0 513.6,198.0 513.5,200.0 513.3,202.0 513.2,204.0 513.0,206.0 512.9,208.0 512.8,210.0 512.6,212.0 512.5,214.0 512.4,216.0 512.3,218.0 512.2,220.0 512.2,222.0 512.1,224.0 512.0,226.0 511.9,228.0 511.9,230.0 511.8,232.0 511.8,234.0 511.8,236.0 511.7,238.0 511.7,240.0 511.7,242.0 511.7,244.0 511.7,246.0 511.7,248.0 511.7,250.0 511.7,252.0 511.7,254.0 511.8,256.0 511.8,258.0 511.9,260.0 511.9,262.0 512.0,264.0 512.1,266.0 512.2,268.0 512.2,270.0 512.3,272.0 512.4,274.0 512.5,276.0 512.7,278.0 512.8,280.0 512.9,282.0 513.1,284.0 513.2,286.0 513.4,288.0 513.6,290.0 513.7,292.0 513.9,294.0 514.1,296.0 514.3,298.0 514.5,300.0 514.7,302.0 515.0,304.0 515.2,306.0 515.4,308.0 515.7,310.0 515.9,312.0 516.2,314.0 516.5,316.0 516.8,318.0 517.1,320.0 517.4,322.0 517.7,324.0 518.0,326.0 518.3,328.0 518.7,330.0 519.0,332.0 519.4,334.0 519.8,336.0 520.1,338.0 520.5,340.0 520.9,342.0 521.3,344.0 521.7,346.0 522.2,348.0 522.6,350.0 523.0,352.0 523.5,354.0 524.0,356.0 524.4,358.0 524.9,360.0 525.4,362.0 525.9,364.0 526.4,366.0 527.0,368.0 527.5,370.0 528.0,372.0 528.6,374.0 529.2,376.0 529.7,378.0 530.3,380.0 530.9,382.0 531.5,384.0 532.2,386.0 532.8,388.0 533.4,390.0 534.1,392.0 534.7,394.0 535.4,396.0 536.1,398.0 536.8,400.0 537.5,402.0 538.2,404.0 539.0,406.0 539.7,408.0 540.5,410.0 541.2,412.0 542.0,414.0 542.8,416.0 543.6,418.0 544.4,420.0 545.3,422.0 546.1,424.0 546.9,426.0 547.8,428.0 548.7,430.0 549.6,432.0 550.5,434.0 551.4,436.0 552.3,438.0 553.3,440.0 554.2,442.0 555.2,444.0 556.2,446.0 557.2,448.0 558.2,450.0 559.2,452.0 560.2,454.0 561.3,456.0 562.3,458.0 563.4,460.0 564.5,462.0 565.6,464.0 566.7,466.0 567.8,468.0 569.0,470.0 570.1,472.0 571.3,474.0 572.5,476.0 573.7,478.0 574.9,480.0 576.1,482.0 577.4,484.0 578.7,486.0 579.9,488.0 581.2,490.0 582.5,492.0 583.8,494.0 585.2,496.0 586.5,498.0 587.9,500.0 589.3,502.0 590.7,504.0 592.1,506.0 593.5,508.0 595.0,510.0 596.4,512.0 597.9,514.0 599.4,516.0 600.9,518.0 602.5,520.0 604.0,522.0 605.6,524.0 607.2,526.0 608.8,528.0 610.4,530.0 612.0,532.0 613.7,534.0 615.3,536.0 617.0,538.0 618.7,540.0 620.4,542.0 622.2,544.0 623.9,546.0 625.7,548.0 627.5,550.0 629.3,552.0 631.1,554.0 633.0,556.0 634.8,558.0 636.7,560.0 638.6,562.0 640.6,564.0 642.5,566.0 644.5,568.0 646.5,570.0 648.5,572.0 650.5,574.0 652.5,576.0 654.6,578.0 656.7,580.0 658.8,582.0 660.9,584.0 663.0,586.0 665.2,588.0 667.4,590.0 669.6,592.0 671.8,594.0 674.1,596.0 676.3,598.0 678.6,600.0 680.9,602.0 683.3,604.0 685.6,606.0 688.0,608.0 690.4,610.0 692.8,612.0 695.3,614.0 697.7,616.0 700.2,618.0 702.7,620.0 705.3,622.0 707.8,624.0 710.4,626.0 713.0,628.0 715.6,630.0 718.3,632.0 720.9,634.0 723.6,636.0 726.4,638.0 729.1,640.0 731.9,642.0 734.7,644.0 737.5,646.0 740.3,648.0 743.2,650.0 746.1,652.0 749.0,654.0 752.0,656.0 754.9,658.0 757.9,660.0 760.9,662.0 764.0,664.0 767.0,666.0 770.1,668.0 773.3,670.0 776.4,672.0 779.6,674.0 782.8,676.0 786.0,678.0 789.3,680.0 792.5,682.0 795.8,684.0 799.2,686.0 802.5,688.0 805.9,690.0 809.3,692.0 812.8,694.0 816.2,696.0 819.7,698.0 823.3,700.0 826.8,702.0 830.4,704.0 834.0,706.0 837.6,708.0 841.3,710.0 845.0,712.0 848.7,714.0 852.5,716.0 856.3,718.0 860.1,720.0 863.9,722.0 867.8,724.0 871.7,726.0 875.6,728.0 879.5,730.0 883.5,732.0 887.5,734.0 891.6,736.0 895.6,738.0 899.7,740.0 903.9,742.0 908.0,744.0 912.2,746.0 916.5,748.0 920.7,750.0" stroke="#800000"/>
<polyline points="571.7,50.0 571.2,52.0 570.7,54.0 570.2,56.0 569.7,58.0 569.2,60.0 568.8,62.0 568.3,64.0 567.8,66.0 567.3,68.0 566.9,70.0 566.4,72.0 566.0,74.0 565.5,76.0 565.1,78.0 564.6,80.0 564.2,82.0 563.8,84.0 563.3,86.0 562.9,88.0 562.5,90.0 562.1,92.0 561.7,94.0 561.3,96.0 560.9,98.0 560.5,100.0 560.1,102.0 559.7,104.0 559.4,106.0 559.0,108.0 558.6,110.0 558.3,112.0 557.9,114.0 557.5,116.0 557.2,118.0 556.9,120.0 556.5,122.0 556.2,124.0 555.9,126.0 555.6,128.0 555.2,130.0 554.9,132.0 554.6,134.0 554.3,136.0 554.0,138.0 553.8,140.0 553.5,142.0 553.2,144.0 552.9,146.0 552.7,148.0 552.4,150.0 552.2,152.0 551.9,154.0 551.7,156.0 551.4,158.0 551.2,160.0 551.0,162.0 550.8,164.0 550.6,166.0 550.4,168.0 550.2,170.0 550.0,172.0 549.8,174.0 549.6,176.0 549.4,178.0 549.3,180.0 549.1,182.0 548.9,184.0 548.8,186.0 548.6,188.0 548.5,190.0 548.4,192.0 548.2,194.0 548.1,196.0 548.0,198.0 547.9,200.0 547.8,202.0 547.7,204.0 547.6,206.0 547.6,208.0 547.5,210.0 547.4,212.0 547.4,214.0 547.3,216.0 547.3,218.0 547.2,220.0 547.2,222.0 547.2,224.0 547.1,226.0 547.1,228.0 547.1,230.0 547.1,232.0 547.1,234.0 547.2,236.0 547.2,238.0 547.2,240.0 547.3,242.0 547.3,244.0 547.4,246.0 547.4,248.0 547.5,250.0 547.6,252.0 547.6,254.0 547.7,256.0 547.8,258.0 547.9,260.0 548.1,262.0 548.2,264.0 548.3,266.0 548.4,268.0 548.6,270.0 548.7,272.0 548.9,274.0 549.1,276.0 549.3,278.0 549.4,280.0 549.6,282.0 549.8,284.0 550.0,286.0 550.3,288.0 550.5,290.0 550.7,292.0 551.0,294.0 551.2,296.0 551.5,298.0 551.8,300.0 552.0,302.0 552.3,304.0 552.6,306.0 552.9,308.0 553.2,310.0 553.6,312.0 553.9,314.0 554.2,316.0 554.6,318.0 554.9,320.0 555.3,322.0 555.7,324.0 556.1,326.0 556.5,328.0 556.9,330.0 557.3,332.0 557.7,334.0 558.1,336.0 558.6,338.0 559.0,340.0 559.5,342.0 560.0,344.0 560.4,346.0 560.9,348.0 561.4,350.0 561.9,352.0 562.5,354.0 563.0,356.0 563.5,358.0 564.1,360.0 564.7,362.0 565.2,364.0 565.8,366.0 566.4,368.0 567.0,370.0 567.6,372.0 568.3,374.0 568.9,376.0 569.5,378.0 570.2,380.0 570.9,382.0 571.6,384.0 572.2,386.0 573.0,388.0 573.7,390.0 574.4,392.0 575.1,394.0 575.9,396.0 576.6,398.0 577.4,400.0 578.2,402.0 579.0,404.0 579.8,406.0 580.6,408.0 581.5,410.0 582.3,412.0 583.2,414.0 584.0,416.0 584.9,418.0 585.8,420.0 586.7,422.0 587.6,424.0 588.6,426.0 589.5,428.0 590.5,430.0 591.4,432.0 592.4,434.0 593.4,436.0 594.4,438.0 595.4,440.0 596.5,442.0 597.5,444.0 598.6,446.0 599.7,448.0 600.7,450.0 601.8,452.0 603.0,454.0 604.1,456.0 605.2,458.0 606.4,460.0 607.6,462.0 608.8,464.0 610.0,466.0 611.2,468.0 612.4,470.0 613.6,472.0 614.9,474.0 616.2,476.0 617.5,478.0 618.8,480.0 620.1,482.0 621.4,484.0 622.8,486.0 624.2,488.0 625.5,490.0 626.9,492.0 628.3,494.0 629.8,496.0 631.2,498.0 632.7,500.0 634.2,502.0 635.6,504.0 637.2,506.0 638.7,508.0 640.2,510.0 641.8,512.0 643.4,514.0 645.0,516.0 646.6,518.0 648.2,520.0 649.8,522.0 651.5,524.0 653.2,526.0 654.9,528.0 656.6,530.0 658.3,532.0 660.1,534.0 661.8,536.0 663.6,538.0 665.4,540.0 667.2,542.0 669.1,544.0 671.0,546.0 672.8,548.0 674.7,550.0 676.6,552.0 678.6,554.0 680.5,556.0 682.5,558.0 684.5,560.0 686.5,562.0 688.5,564.0 690.6,566.0 692.7,568.0 694.8,570.0 696.9,572.0 699.0,574.0 701.2,576.0 703.3,578.0 705.5,580.0 707.7,582.0 710.0,584.0 712.2,586.0 714.5,588.0 716.8,590.0 719.1,592.0 721.5,594.0 723.8,596.0 726.2,598.0 728.6,600.0 731.1,602.0 733.5,604.0 736.0,606.0 738.5,608.0 741.0,610.0 743.6,612.0 746.1,614.0 748.7,616.0 751.3,618.0 754.0,620.0 756.6,622.0 759.3,624.0 762.0,626.0 764.7,628.0 767.5,630.0 770.3,632.0 773.1,634.0 775.9,636.0 778.7,638.0 781.6,640.0 784.5,642.0 787.4,644.0 790.4,646.0 793.4,648.0 796.4,650.0 799.4,652.0 802.5,654.0 805.5,656.0 808.6,658.0 811.8,660.0 814.9,662.0 818.1,664.0 821.3,666.0 824.6,668.0 827.8,670.0 831.1,672.0 834.4,674.0 837.8,676.0 841.1,678.0 844.5,680.0 847.9,682.0 851.4,684.0 854.9,686.0 858.4,688.0 861.9,690.0 865.5,692.0 869.1,694.0 872.7,696.0 876.3,698.0 880.0,700.0 883.7,702.0 887.5,704.0 891.2,706.0 895.0,708.0 898.8,710.0 902.7,712.0 906.6,714.0 910.5,716.0 914.4,718.0 918.4,720.0 922.4,722.0 926.4,724.0 930.5,726.0 934.6,728.0 938.7,730.0 942.8,732.0 947.0,734.0 951.2,736.0 955.4,738.0 959.7,740.0 964.0,742.0 968.3,744.0 972.7,746.0 977.1,748.0 981.5,750.0" stroke="#800000"/>
<polyline points="70.7,751.8 70.3,751.4 70.0,751.0 69.6,750.7 69.3,750.3 68.9,749.9 68.6,749.5 68.2,749.1 67.9,748.7 67.5,748.4 67.2,748.0 66.9,747.6 66.5,747.2 66.2,746.8 65.8,746.4 65.5,746.0 65.1,745.6 64.8,745.2 64.4,744.8 64.1,744.4 63.7,744.0 63.4,743.6 63.0,743.2 62.7,742.8 62.3,742.4 62.0,742.0 61.6,741.6 61.3,741.2 60.9,740.8 60.6,740.4 60.2,740.0 59.9,739.6 59.5,739.2 59.2,738.8 58.8,738.4 58.5,738.0 58.1,737.5 57.8,737.1 57.4,736.7 57.1,736.3 56.7,735.9 56.4,735.5 56.0,735.0 55.7,734.6 55.3,734.2 55.0,733.8 54.6,733.3 54.3,732.9 53.9,732.5 53.6,732.1 53.2,731.6 52.9,731.2 52.5,730.8 52.1,730.4 51.8,729.9 51.4,729.5 51.1,729.1 50.7,728.6 50.4,728.2 50.0,727.7 49.7,727.3 49.3,726.9 49.0,726.4 48.6,726.0 48.2,725.5 47.9,725.1 47.5,724.6 47.2,724.2 46.8,723.7 46.5,723.3 46.1,722.8 45.8,722.4 45.4,721.9 45.0,721.5 44.7,721.0 44.3,720.6 44.0,720.1 43.6,719.7 43.3,719.2 42.9,718.7 42.5,718.3 42.2,717.8 41.8,717.3 41.5,716.9 41.1,716.4 40.8,715.9 40.4,715.5 40.0,715.0 39.7,714.5 39.3,714.0 39.0,713.6 38.6,713.1 38.2,712.6 37.9,712.1 37.5,711.7 37.2,711.2 36.8,710.7 36.5,710.2 36.1,709.7 35.7,709.2 35.4,708.7 35.0,708.2 34.7,707.7 34.3,707.3 33.9,706.8 33.6,706.3 33.2,705.8 32.9,705.3 32.5,704.8 32.1,704.3 31.8,703.8 31.4,703.2 31.1,702.7 30.7,702.2 30.4,701.7 30.0,701.2 29.6,700.7 29.3,700.2 28.9,699.7 28.6,699.1 28.2,698.6 27.8,698.1 27.5,697.6 27.1,697.1 26.8,696.5 26.4,696.0 26.0,695.5 25.7,694.9 25.3,694.4 25.0,693.9 24.6,693.3 24.3,692.8 23.9,692.3 23.5,691.7 23.2,691.2 22.8,690.6 22.5,690.1 22.1,689.5 21.7,689.0 21.4,688.4 21.0,687.9 20.7,687.3 20.3,686.8 20.0,686.2 19.6,685.6 19.2,685.1 18.9,684.5 18.5,684.0 18.2,683.4 17.8,682.8 17.4,682.2 17.1,681.7 16.7,681.1 16.4,680.5 16.0,679.9 15.7,679.4 15.3,678.8 15.0,678.2 14.6,677.6 14.2,677.0 13.9,676.4 13.5,675.8 13.2,675.2 12.8,674.6 12.5,674.0 12.1,673.4 11.8,672.8 11.4,672.2 11.0,671.6 10.7,671.0 10.3,670.4 10.0,669.8 9.6,669.1 9.3,668.5 8.9,667.9 8.6,667.3 8.2,666.7 7.9,666.0 7.5,665.4 7.2,664.8 6.8,664.1 6.5,663.5 6.1,662.9 5.8,662.2 5.4,661.6 5.1,660.9 4.7,660.3 4.4,659.6 4.0,659.0 3.7,658.3 3.3,657.6 3.0,657.0 2.6,656.3 2.3,655.7 1.9,655.0 1.6,654.3 1.2,653.6 0.9,653.0 0.6,652.3 0.2,651.6 -0.1,650.9 -0.5,650.2 -0.8,649.5 -1.2,648.8 -1.5,648.1 -1.9,647.4 -2.2,646.7 -2.5,646.0 -2.9,645.3 -3.2,644.6 -3.6,643.9 -3.9,643.2 -4.2,642.5 -4.6,641.8 -4.9,641.0 -5.2,640.3 -5.6,639.6 -5.9,638.8 -6.2,638.1 -6.6,637.4 -6.9,636.6 -7.2,635.9 -7.6,635.1 -7.9,634.4 -8.2,633.6 -8.6,632.9 -8.9,632.1 -9.2,631.3 -9.6,630.6 -9.9,629.8 -10.2,629.0 -10.5,628.2 -10.9,627.4 -11.2,626.7 -11.5,625.9 -11.8,625.1 -12.2,624.3 -12.5,623.5 -12.8,622.7 -13.1,621.9 -13.4,621.1 -13.8,620.2 -14.1,619.4 -14.4,618.6 -14.7,617.8 -15.0,617.0 -15.3,616.1 -15.7,615.3 -16.0,614.4 -16.3,613.6 -16.6,612.8 -16.9,611.9 -17.2,611.0 -17.5,610.2 -17.8,609.3 -18.1,608.4 -18.4,607.6 -18.7,606.7 -19.0,605.8 -19.3,604.9 -19.6,604.0 -19.9,603.1 -20.2,602.2 -20.5,601.3 -20.8,600.4 -21.1,599.5 -21.4,598.6 -21.7,597.7 -22.0,596.8 -22.3,595.8 -22.5,594.9 -22.8,594.0 -23.1,593.0 -23.4,592.1 -23.7,591.1 -24.0,590.1 -24.2,589.2 -24.5,588.2 -24.8,587.2 -25.1,586.2 -25.3,585.3 -25.6,584.3 -25.9,583.3 -26.1,582.3 -26.4,581.3 -26.7,580.3 -26.9,579.2 -27.2,578.2 -27.4,577.2 -27.7,576.1 -27.9,575.1 -28.2,574.1 -28.4,573.0 -28.7,572.0 -28.9,570.9 -29.2,569.8 -29.4,568.7 -29.7,567.7 -29.9,566.6 -30.1,565.5 -30.4,564.4 -30.6,563.3 -30.8,562.2 -31.0,561.0 -31.3,559.9 -31.5,558.8 -31.7,557.6 -31.9,556.5 -32.1,555.3 -32.3,554.2 -32.5,553.0 -32.8,551.8 -33.0,550.6 -33.2,549.4 -33.4,548.2 -33.5,547.0 -33.7,545.8 -33.9,544.6 -34.1,543.4 -34.3,542.1 -34.5,540.9 -34.7,539.6 -34.8,538.4 -35.0,537.1 -35.2,535.8 -35.3,534.6 -35.5,533.3 -35.6,532.0 -35.8,530.6 -35.9,529.3 -36.1,528.0 -36.2,526.7 -36.4,525.3 -36.5,524.0 -36.6,522.6 -36.8,521.2 -36.9,519.8 -37.0,518.4 -37.1,517.0 -37.2,515.6 -37.3,514.2 -37.4,512.8 -37.5,511.3 -37.6,509.9 -37.7,508.4 -37.8,506.9 -37.9,505.4 -37.9,503.9 -38.0,502.4 -38.1,500.9 -38.1,499.4 -38.2,497.8 -38.2,496.3 -38.3,494.7 -38.3,493.1 -38.3,491.5 -38.3,489.9 -38.4,488.3 -38.4,486.7 -38.4,485.0 -38.4,483.4 -38.4,481.7 -38.4,480.0 -38.3,478.3 -38.3,476.6 -38.3,474.9 -38.2,473.1 -38.2,471.4 -38.1,469.6 -38.1,467.8 -38.0,466.0 -37.9,464.2 -37.8,462.4 -37.8,460.5 -37.7,458.7 -37.5,456.8 -37.4,454.9 -37.3,453.0 -37.2,451.1 -37.0,449.1 -37.0,448.6 -36.9,448.1 -36.9,447.6 -36.9,447.1 -36.8,446.6 -36.8,446.2 -36.7,445.7 -36.7,445.2 -36.7,444.7 -36.6,444.2 -36.6,443.7 -36.5,443.2 -36.5,442.7 -36.4,442.1 -36.4,441.6 -36.3,441.1 -36.3,440.6 -36.3,440.1 -36.2,439.6 -36.2,439.1 -36.1,438.6 -36.1,438.1 -36.0,437.6 -35.9,437.0 -35.9,436.5 -35.8,436.0 -35.8,435.5 -35.7,435.0 -35.7,434.4 -35.6,433.9 -35.6,433.4 -35.5,432.9 -35.5,432.3 -35.4,431.8 -35.3,431.3 -35.3,430.7 -35.2,430.2 -35.2,429.7 -35.1,429.1 -35.0,428.6 -35.0,428.1 -34.9,427.5 -34.8,427.0 -34.8,426.4 -34.7,425.9 -34.6,425.4 -34.6,424.8 -34.5,424.3 -34.4,423.7 -34.4,423.2 -34.3,422.6 -34.2,422.1 -34.2,421.5 -34.1,420.9 -34.0,420.4 -33.9,419.8 -33.9,419.3 -33.8,418.7 -33.7,418.1 -33.6,417.6 -33.6,417.0 -33.5,416.4 -33.4,415.9 -33.3,415.3 -33.2,414.7 -33.1,414.2 -33.1,413.6 -33.0,413.0 -32.9,412.4 -32.8,411.9 -32.7,411.3 -32.6,410.7 -32.5,410.1 -32.5,409.5 -32.4,408.9 -32.3,408.3 -32.2,407.8 -32.1,407.2 -32.0,406.6 -31.9,406.0 -31.8,405.4 -31.7,404.8 -31.6,404.2 -31.5,403.6 -31.4,403.0 -31.3,402.4 -31.2,401.8 -31.1,401.2 -31.0,400.6 -30.9,400.0 -30.8,399.3 -30.7,398.7 -30.6,398.1 -30.5,397.5 -30.4,396.9 -30.3,396.3 -30.2,395.6 -30.1,395.0 -29.9,394.4 -29.8,393.8 -29.7,393.1 -29.6,392.5 -29.5,391.9 -29.4,391.2 -29.3,390.6 -29.1,390.0 -29.0,389.3 -28.9,388.7 -28.8,388.0 -28.7,387.4 -28.5,386.7 -28.4,386.1 -28.3,385.4 -28.2,384.8 -28.0,384.1 -27.9,383.5 -27.8,382.8 -27.6,382.2 -27.5,381.5 -27.4,380.8 -27.2,380.2 -27.1,379.5 -27.0,378.8 -26.8,378.2 -26.7,377.5 -26.5,376.8 -26.4,376.1 -26.3,375.5 -26.1,374.8 -26.0,374.1 -25.8,373.4 -25.7,372.7 -25.5,372.0 -25.4,371.4 -25.2,370.7 -25.1,370.0 -24.9,369.3 -24.8,368.6 -24.6,367.9 -24.5,367.2 -24.3,366.5 -24.1,365.8 -24.0,365.0 -23.8,364.3 -23.7,363.6 -23.5,362.9 -23.3,362.2 -23.2,361.5 -23.0,360.7 -22.8,360.0 -22.6,359.3 -22.5,358.6 -22.3,357.8 -22.1,357.1 -21.9,356.4 -21.8,355.6 -21.6,354.9 -21.4,354.1 -21.2,353.4 -21.0,352.6 -20.9,351.9 -20.7,351.1 -20.5,350.4 -20.3,349.6 -20.1,348.9 -19.9,348.1 -19.7,347.4 -19.5,346.6 -19.3,345.8 -19.1,345.0 -18.9,344.3 -18.7,343.5 -18.5,342.7 -18.3,341.9 -18.1,341.1 -17.9,340.4 -17.7,339.6 -17.5,338.8 -17.3,338.0 -17.0,337.2 -16.8,336.4 -16.6,335.6 -16.4,334.8 -16.2,334.0 -16.0,333.2 -15.7,332.4 -15.5,331.5 -15.3,330.7 -15.0,329.9 -14.8,329.1 -14.6,328.3 -14.4,327.4 -14.1,326.6 -13.9,325.8 -13.6,324.9 -13.4,324.1 -13.2,323.2 -12.9,322.4 -12.7,321.5 -12.4,320.7 -12.2,319.8 -11.9,319.0 -11.7,318.1 -11.4,317.2 -11.1,316.4 -10.9,315.5 -10.6,314.6 -10.4,313.8 -10.1,312.9 -9.8,312.0 -9.5,311.1 -9.3,310.2 -9.0,309.3 -8.7,308.4 -8.4,307.5 -8.2,306.6 -7.9,305.7 -7.6,304.8 -7.3,303.9 -7.0,303.0 -6.7,302.1 -6.4,301.2 -6.1,300.2 -5.8,299.3 -5.5,298.4 -5.2,297.4 -4.9,296.5 -4.6,295.6 -4.3,294.6 -4.0,293.7 -3.7,292.7 -3.4,291.8 -3.1,290.8 -2.8,289.8" stroke="#000080"/>
<polyline points="131.2,751.8 130.8,751.4 130.5,751.0 130.1,750.7 129.8,750.3 129.4,749.9 129.0,749.5 128.7,749.1 128.3,748.7 127.9,748.4 127.6,748.0 127.2,747.6 126.8,747.2 126.5,746.8 126.1,746.4 125.7,746.0 125.4,745.6 125.0,745.2 124.7,744.8 124.3,744.4 123.9,744.0 123.5,743.6 123.2,743.2 122.8,742.8 122.4,742.4 122.1,742.0 121.7,741.6 121.3,741.2 121.0,740.8 120.6,740.4 120.2,740.0 119.8,739.6 119.5,739.2 119.1,738.8 118.7,738.4 118.4,738.0 118.0,737.5 117.6,737.1 117.2,736.7 116.9,736.3 116.5,735.9 116.1,735.5 115.7,735.0 115.4,734.6 115.0,734.2 114.6,733.8 114.2,733.3 113.9,732.9 113.5,732.5 113.1,732.1 112.7,731.6 112.3,731.2 112.0,730.8 111.6,730.4 111.2,729.9 110.8,729.5 110.5,729.1 110.1,728.6 109.7,728.2 109.3,727.7 108.9,727.3 108.6,726.9 108.2,726.4 107.8,726.0 107.4,725.5 107.0,725.1 106.6,724.6 106.3,724.2 105.9,723.7 105.5,723.3 105.1,722.8 104.7,722.4 104.3,721.9 104.0,721.5 103.6,721.0 103.2,720.6 102.8,720.1 102.4,719.7 102.0,719.2 101.7,718.7 101.3,718.3 100.9,717.8 100.5,717.3 100.1,716.9 99.7,716.4 99.3,715.9 98.9,715.5 98.6,715.0 98.2,714.5 97.8,714.0 97.4,713.6 97.0,713.1 96.6,712.6 96.2,712.1 95.8,711.7 95.5,711.2 95.1,710.7 94.7,710.2 94.3,709.7 93.9,709.2 93.5,708.7 93.1,708.2 92.7,707.7 92.3,707.3 91.9,706.8 91.5,706.3 91.2,705.8 90.8,705.3 90.4,704.8 90.0,704.3 89.6,703.8 89.2,703.2 88.8,702.7 88.4,702.2 88.0,701.7 87.6,701.2 87.2,700.7 86.8,700.2 86.4,699.7 86.1,699.1 85.7,698.6 85.3,698.1 84.9,697.6 84.5,697.1 84.1,696.5 83.7,696.0 83.3,695.5 82.9,694.9 82.5,694.4 82.1,693.9 81.7,693.3 81.3,692.8 80.9,692.3 80.5,691.7 80.1,691.2 79.7,690.6 79.4,690.1 79.0,689.5 78.6,689.0 78.2,688.4 77.8,687.9 77.4,687.3 77.0,686.8 76.6,686.2 76.2,685.6 75.8,685.1 75.4,684.5 75.0,684.0 74.6,683.4 74.2,682.8 73.8,682.2 73.4,681.7 73.0,681.1 72.6,680.5 72.2,679.9 71.8,679.4 71.4,678.8 71.0,678.2 70.7,677.6 70.3,677.0 69.9,676.4 69.5,675.8 69.1,675.2 68.7,674.6 68.3,674.0 67.9,673.4 67.5,672.8 67.1,672.2 66.7,671.6 66.3,671.0 65.9,670.4 65.5,669.8 65.1,669.1 64.7,668.5 64.3,667.9 63.9,667.3 63.5,666.7 63.2,666.0 62.8,665.4 62.4,664.8 62.0,664.1 61.6,663.5 61.2,662.9 60.8,662.2 60.4,661.6 60.0,660.9 59.6,660.3 59.2,659.6 58.8,659.0 58.4,658.3 58.0,657.6 57.7,657.0 57.3,656.3 56.9,655.7 56.5,655.0 56.1,654.3 55.7,653.6 55.3,653.0 54.9,652.3 54.5,651.6 54.1,650.9 53.8,650.2 53.4,649.5 53.0,648.8 52.6,648.1 52.2,647.4 51.8,646.7 51.4,646.0 51.0,645.3 50.7,644.6 50.3,643.9 49.9,643.2 49.5,642.5 49.1,641.8 48.7,641.0 48.3,640.3 48.0,639.6 47.6,638.8 47.2,638.1 46.8,637.4 46.4,636.6 46.0,635.9 45.7,635.1 45.3,634.4 44.9,633.6 44.5,632.9 44.2,632.1 43.8,631.3 43.4,630.6 43.0,629.8 42.6,629.0 42.3,628.2 41.9,627.4 41.5,626.7 41.1,625.9 40.8,625.1 40.4,624.3 40.0,623.5 39.7,622.7 39.3,621.9 38.9,621.1 38.5,620.2 38.2,619.4 37.8,618.6 37.4,617.8 37.1,617.0 36.7,616.1 36.3,615.3 36.0,614.4 35.6,613.6 35.3,612.8 34.9,611.9 34.5,611.0 34.2,610.2 33.8,609.3 33.5,608.4 33.1,607.6 32.7,606.7 32.4,605.8 32.0,604.9 31.7,604.0 31.3,603.1 31.0,602.2 30.6,601.3 30.3,600.4 29.9,599.5 29.6,598.6 29.3,597.7 28.9,596.8 28.6,595.8 28.2,594.9 27.9,594.0 27.5,593.0 27.2,592.1 26.9,591.1 26.5,590.1 26.2,589.2 25.9,588.2 25.5,587.2 25.2,586.2 24.9,585.3 24.6,584.3 24.2,583.3 23.9,582.3 23.6,581.3 23.3,580.3 22.9,579.2 22.6,578.2 22.3,577.2 22.0,576.1 21.7,575.1 21.4,574.1 21.1,573.0 20.8,572.0 20.5,570.9 20.2,569.8 19.9,568.7 19.6,567.7 19.3,566.6 19.0,565.5 18.7,564.4 18.4,563.3 18.1,562.2 17.8,561.0 17.5,559.9 17.2,558.8 17.0,557.6 16.7,556.5 16.4,555.3 16.1,554.2 15.9,553.0 15.6,551.8 15.3,550.6 15.1,549.4 14.8,548.2 14.5,547.0 14.3,545.8 14.0,544.6 13.8,543.4 13.5,542.1 13.3,540.9 13.0,539.6 12.8,538.4 12.6,537.1 12.3,535.8 12.1,534.6 11.9,533.3 11.7,532.0 11.4,530.6 11.2,529.3 11.0,528.0 10.8,526.7 10.6,525.3 10.4,524.0 10.2,522.6 10.0,521.2 9.8,519.8 9.6,518.4 9.4,517.0 9.3,515.6 9.1,514.2 8.9,512.8 8.8,511.3 8.6,509.9 8.4,508.4 8.3,506.9 8.1,505.4 8.0,503.9 7.8,502.4 7.7,500.9 7.6,499.4 7.5,497.8 7.3,496.3 7.2,494.7 7.1,493.1 7.0,491.5 6.9,489.9 6.8,488.3 6.7,486.7 6.7,485.0 6.6,483.4 6.5,481.7 6.4,480.0 6.4,478.3 6.3,476.6 6.3,474.9 6.3,473.1 6.2,471.4 6.2,469.6 6.2,467.8 6.2,466.0 6.2,464.2 6.2,462.4 6.2,460.5 6.2,458.7 6.2,456.8 6.3,454.9 6.3,453.0 6.4,451.1 6.4,449.1 6.5,448.6 6.5,448.1 6.5,447.6 6.5,447.1 6.5,446.6 6.5,446.2 6.6,445.7 6.6,445.2 6.6,444.7 6.6,444.2 6.7,443.7 6.7,443.2 6.7,442.7 6.7,442.1 6.7,441.6 6.8,441.1 6.8,440.6 6.8,440.1 6.9,439.6 6.9,439.1 6.9,438.6 6.9,438.1 7.0,437.6 7.0,437.0 7.0,436.5 7.1,436.0 7.1,435.5 7.1,435.0 7.2,434.4 7.2,433.9 7.2,433.4 7.3,432.9 7.3,432.3 7.3,431.8 7.4,431.3 7.4,430.7 7.5,430.2 7.5,429.7 7.5,429.1 7.6,428.6 7.6,428.1 7.7,427.5 7.7,427.0 7.7,426.4 7.8,425.9 7.8,425.4 7.9,424.8 7.9,424.3 8.0,423.7 8.0,423.2 8.1,422.6 8.1,422.1 8.2,421.5 8.2,420.9 8.3,420.4 8.3,419.8 8.4,419.3 8.4,418.7 8.5,418.1 8.5,417.6 8.6,417.0 8.6,416.4 8.7,415.9 8.8,415.3 8.8,414.7 8.9,414.2 8.9,413.6 9.0,413.0 9.1,412.4 9.1,411.9 9.2,411.3 9.3,410.7 9.3,410.1 9.4,409.5 9.5,408.9 9.5,408.3 9.6,407.8 9.7,407.2 9.7,406.6 9.8,406.0 9.9,405.4 9.9,404.8 10.0,404.2 10.1,403.6 10.2,403.0 10.2,402.4 10.3,401.8 10.4,401.2 10.5,400.6 10.6,400.0 10.6,399.3 10.7,398.7 10.8,398.1 10.9,397.5 11.0,396.9 11.1,396.3 11.1,395.6 11.2,395.0 11.3,394.4 11.4,393.8 11.5,393.1 11.6,392.5 11.7,391.9 11.8,391.2 11.9,390.6 12.0,390.0 12.1,389.3 12.2,388.7 12.3,388.0 12.4,387.4 12.5,386.7 12.6,386.1 12.7,385.4 12.8,384.8 12.9,384.1 13.0,383.5 13.1,382.8 13.2,382.2 13.3,381.5 13.4,380.8 13.5,380.2 13.6,379.5 13.7,378.8 13.9,378.2 14.0,377.5 14.1,376.8 14.2,376.1 14.3,375.5 14.4,374.8 14.6,374.1 14.7,373.4 14.8,372.7 14.9,372.0 15.1,371.4 15.2,370.7 15.3,370.0 15.4,369.3 15.6,368.6 15.7,367.9 15.8,367.2 16.0,366.5 16.1,365.8 16.2,365.0 16.4,364.3 16.5,363.6 16.6,362.9 16.8,362.2 16.9,361.5 17.1,360.7 17.2,360.0 17.4,359.3 17.5,358.6 17.7,357.8 17.8,357.1 18.0,356.4 18.1,355.6 18.3,354.9 18.4,354.1 18.6,353.4 18.7,352.6 18.9,351.9 19.1,351.1 19.2,350.4 19.4,349.6 19.5,348.9 19.7,348.1 19.9,347.4 20.0,346.6 20.2,345.8 20.4,345.0 20.6,344.3 20.7,343.5 20.9,342.7 21.1,341.9 21.3,341.1 21.5,340.4 21.6,339.6 21.8,338.8 22.0,338.0 22.2,337.2 22.4,336.4 22.6,335.6 22.8,334.8 23.0,334.0 23.2,333.2 23.4,332.4 23.6,331.5 23.8,330.7 24.0,329.9 24.2,329.1 24.4,328.3 24.6,327.4 24.8,326.6 25.0,325.8 25.2,324.9 25.4,324.1 25.6,323.2 25.9,322.4 26.1,321.5 26.3,320.7 26.5,319.8 26.7,319.0 27.0,318.1 27.2,317.2 27.4,316.4 27.7,315.5 27.9,314.6 28.1,313.8 28.4,312.9 28.6,312.0 28.9,311.1 29.1,310.2 29.3,309.3 29.6,308.4 29.8,307.5 30.1,306.6 30.3,305.7 30.6,304.8 30.9,303.9 31.1,303.0 31.4,302.1 31.6,301.2 31.9,300.2 32.2,299.3 32.4,298.4 32.7,297.4 33.0,296.5 33.3,295.6 33.6,294.6 33.8,293.7 34.1,292.7 34.4,291.8 34.7,290.8 35.0,289.8 35.3,288.9 35.6,287.9 35.9,286.9 36.2,286.0 36.5,285.0 36.8,284.0 37.1,283.0 37.4,282.0 37.7,281.0 38.0,280.0 38.3,279.0 38.7,278.0 39.0,277.0 39.3,276.0 39.6,275.0 40.0,273.9 40.3,272.9 40.6,271.9 41.0,270.8 41.3,269.8 41.7,268.7 42.0,267.7 42.4,266.6 42.7,265.6 43.1,264.5 43.4,263.5 43.8,262.4 44.1,261.3 44.5,260.2 44.9,259.2 45.2,258.1 45.6,257.0 46.0,255.9 46.4,254.8 46.8,253.7 47.1,252.6 47.5,251.4 47.9,250.3 48.3,249.2 48.7,248.1 49.1,246.9 49.5,245.8 49.9,244.7 50.4,243.5 50.8,242.4 51.2,241.2 51.6,240.0 52.0,238.9 52.5,237.7 52.9,236.5 53.3,235.3 53.8,234.1 54.2,232.9" stroke="#000080"/>
<polyline points="191.2,751.8 190.9,751.4 190.5,751.0 190.2,750.7 189.8,750.3 189.4,749.9 189.1,749.5 188.7,749.1 188.4,748.7 188.0,748.4 187.6,748.0 187.3,747.6 186.9,747.2 186.5,746.8 186.2,746.4 185.8,746.0 185.4,745.6 185.1,745.2 184.7,744.8 184.3,744.4 184.0,744.0 183.6,743.6 183.2,743.2 182.8,742.8 182.5,742.4 182.1,742.0 181.7,741.6 181.3,741.2 181.0,740.8 180.6,740.4 180.2,740.0 179.8,739.6 179.5,739.2 179.1,738.8 178.7,738.4 178.3,738.0 177.9,737.5 177.6,737.1 177.2,736.7 176.8,736.3 176.4,735.9 176.0,735.5 175.7,735.0 175.3,734.6 174.9,734.2 174.5,733.8 174.1,733.3 173.7,732.9 173.3,732.5 173.0,732.1 172.6,731.6 172.2,731.2 171.8,730.8 171.4,730.4 171.0,729.9 170.6,729.5 170.2,729.1 169.8,728.6 169.5,728.2 169.1,727.7 168.7,727.3 168.3,726.9 167.9,726.4 167.5,726.0 167.1,725.5 166.7,725.1 166.3,724.6 165.9,724.2 165.5,723.7 165.1,723.3 164.7,722.8 164.3,722.4 163.9,721.9 163.5,721.5 163.1,721.0 162.7,720.6 162.3,720.1 161.9,719.7 161.5,719.2 161.1,718.7 160.7,718.3 160.3,717.8 159.9,717.3 159.5,716.9 159.1,716.4 158.7,715.9 158.3,715.5 157.9,715.0 157.5,714.5 157.1,714.0 156.7,713.6 156.2,713.1 155.8,712.6 155.4,712.1 155.0,711.7 154.6,711.2 154.2,710.7 153.8,710.2 153.4,709.7 153.0,709.2 152.6,708.7 152.1,708.2 151.7,707.7 151.3,707.3 150.9,706.8 150.5,706.3 150.1,705.8 149.7,705.3 149.3,704.8 148.8,704.3 148.4,703.8 148.0,703.2 147.6,702.7 147.2,702.2 146.8,701.7 146.3,701.2 145.9,700.7 145.5,700.2 145.1,699.7 144.7,699.1 144.2,698.6 143.8,698.1 143.4,697.6 143.0,697.1 142.6,696.5 142.1,696.0 141.7,695.5 141.3,694.9 140.9,694.4 140.5,693.9 140.0,693.3 139.6,692.8 139.2,692.3 138.8,691.7 138.3,691.2 137.9,690.6 137.5,690.1 137.1,689.5 136.6,689.0 136.2,688.4 135.8,687.9 135.4,687.3 134.9,686.8 134.5,686.2 134.1,685.6 133.7,685.1 133.2,684.5 132.8,684.0 132.4,683.4 131.9,682.8 131.5,682.2 131.1,681.7 130.7,681.1 130.2,680.5 129.8,679.9 129.4,679.4 128.9,678.8 128.5,678.2 128.1,677.6 127.7,677.0 127.2,676.4 126.8,675.8 126.4,675.2 125.9,674.6 125.5,674.0 125.1,673.4 124.6,672.8 124.2,672.2 123.8,671.6 123.3,671.0 122.9,670.4 122.5,669.8 122.1,669.1 121.6,668.5 121.2,667.9 120.8,667.3 120.3,666.7 119.9,666.0 119.5,665.4 119.0,664.8 118.6,664.1 118.2,663.5 117.7,662.9 117.3,662.2 116.9,661.6 116.4,660.9 116.0,660.3 115.6,659.6 115.1,659.0 114.7,658.3 114.3,657.6 113.8,657.0 113.4,656.3 113.0,655.7 112.5,655.0 112.1,654.3 111.7,653.6 111.2,653.0 110.8,652.3 110.4,651.6 109.9,650.9 109.5,650.2 109.1,649.5 108.7,648.8 108.2,648.1 107.8,647.4 107.4,646.7 106.9,646.0 106.5,645.3 106.1,644.6 105.6,643.9 105.2,643.2 104.8,642.5 104.3,641.8 103.9,641.0 103.5,640.3 103.1,639.6 102.6,638.8 102.2,638.1 101.8,637.4 101.3,636.6 100.9,635.9 100.5,635.1 100.1,634.4 99.6,633.6 99.2,632.9 98.8,632.1 98.4,631.3 97.9,630.6 97.5,629.8 97.1,629.0 96.7,628.2 96.2,627.4 95.8,626.7 95.4,625.9 95.0,625.1 94.5,624.3 94.1,623.5 93.7,622.7 93.3,621.9 92.9,621.1 92.4,620.2 92.0,619.4 91.6,618.6 91.2,617.8 90.8,617.0 90.4,616.1 89.9,615.3 89.5,614.4 89.1,613.6 88.7,612.8 88.3,611.9 87.9,611.0 87.5,610.2 87.0,609.3 86.6,608.4 86.2,607.6 85.8,606.7 85.4,605.8 85.0,604.9 84.6,604.0 84.2,603.1 83.8,602.2 83.4,601.3 83.0,600.4 82.6,599.5 82.2,598.6 81.8,597.7 81.4,596.8 81.0,595.8 80.6,594.9 80.2,594.0 79.8,593.0 79.4,592.1 79.0,591.1 78.6,590.1 78.2,589.2 77.8,588.2 77.4,587.2 77.1,586.2 76.7,585.3 76.3,584.3 75.9,583.3 75.5,582.3 75.1,581.3 74.8,580.3 74.4,579.2 74.0,578.2 73.6,577.2 73.3,576.1 72.9,575.1 72.5,574.1 72.1,573.0 71.8,572.0 71.4,570.9 71.0,569.8 70.7,568.7 70.3,567.7 70.0,566.6 69.6,565.5 69.2,564.4 68.9,563.3 68.5,562.2 68.2,561.0 67.8,559.9 67.5,558.8 67.2,557.6 66.8,556.5 66.5,555.3 66.1,554.2 65.8,553.0 65.5,551.8 65.1,550.6 64.8,549.4 64.5,548.2 64.2,547.0 63.8,545.8 63.5,544.6 63.2,543.4 62.9,542.1 62.6,540.9 62.3,539.6 62.0,538.4 61.7,537.1 61.4,535.8 61.1,534.6 60.8,533.3 60.5,532.0 60.2,530.6 59.9,529.3 59.6,528.0 59.3,526.7 59.1,525.3 58.8,524.0 58.5,522.6 58.3,521.2 58.0,519.8 57.7,518.4 57.5,517.0 57.2,515.6 57.0,514.2 56.7,512.8 56.5,511.3 56.3,509.9 56.0,508.4 55.8,506.9 55.6,505.4 55.4,503.9 55.2,502.4 55.0,500.9 54.7,499.4 54.5,497.8 54.4,496.3 54.2,494.7 54.0,493.1 53.8,491.5 53.6,489.9 53.5,488.3 53.3,486.7 53.1,485.0 53.0,483.4 52.8,481.7 52.7,480.0 52.5,478.3 52.4,476.6 52.3,474.9 52.2,473.1 52.1,471.4 52.0,469.6 51.9,467.8 51.8,466.0 51.7,464.2 51.6,462.4 51.5,460.5 51.5,458.7 51.4,456.8 51.4,454.9 51.3,453.0 51.3,451.1 51.3,449.1 51.3,448.6 51.3,448.1 51.3,447.6 51.3,447.1 51.3,446.6 51.3,446.2 51.3,445.7 51.3,445.2 51.3,444.7 51.3,444.2 51.3,443.7 51.3,443.2 51.3,442.7 51.3,442.1 51.3,441.6 51.3,441.1 51.3,440.6 51.3,440.1 51.3,439.6 51.3,439.1 51.3,438.6 51.3,438.1 51.3,437.6 51.3,437.0 51.3,436.5 51.3,436.0 51.4,435.5 51.4,435.0 51.4,434.4 51.4,433.9 51.4,433.4 51.4,432.9 51.4,432.3 51.4,431.8 51.5,431.3 51.5,430.7 51.5,430.2 51.5,429.7 51.5,429.1 51.5,428.6 51.6,428.1 51.6,427.5 51.6,427.0 51.6,426.4 51.6,425.9 51.7,425.4 51.7,424.8 51.7,424.3 51.7,423.7 51.8,423.2 51.8,422.6 51.8,422.1 51.8,421.5 51.9,420.9 51.9,420.4 51.9,419.8 52.0,419.3 52.0,418.7 52.0,418.1 52.1,417.6 52.1,417.0 52.1,416.4 52.2,415.9 52.2,415.3 52.2,414.7 52.3,414.2 52.3,413.6 52.3,413.0 52.4,412.4 52.4,411.9 52.5,411.3 52.5,410.7 52.5,410.1 52.6,409.5 52.6,408.9 52.7,408.3 52.7,407.8 52.8,407.2 52.8,406.6 52.9,406.0 52.9,405.4 53.0,404.8 53.0,404.2 53.1,403.6 53.1,403.0 53.2,402.4 53.2,401.8 53.3,401.2 53.3,400.6 53.4,400.0 53.4,399.3 53.5,398.7 53.6,398.1 53.6,397.5 53.7,396.9 53.7,396.3 53.8,395.6 53.9,395.0 53.9,394.4 54.0,393.8 54.1,393.1 54.1,392.5 54.2,391.9 54.3,391.2 54.3,390.6 54.4,390.0 54.5,389.3 54.5,388.7 54.6,388.0 54.7,387.4 54.8,386.7 54.8,386.1 54.9,385.4 55.0,384.8 55.1,384.1 55.2,383.5 55.2,382.8 55.3,382.2 55.4,381.5 55.5,380.8 55.6,380.2 55.7,379.5 55.7,378.8 55.8,378.2 55.9,377.5 56.0,376.8 56.1,376.1 56.2,375.5 56.3,374.8 56.4,374.1 56.5,373.4 56.6,372.7 56.7,372.0 56.8,371.4 56.9,370.7 57.0,370.0 57.1,369.3 57.2,368.6 57.3,367.9 57.4,367.2 57.5,366.5 57.6,365.8 57.7,365.0 57.8,364.3 57.9,363.6 58.1,362.9 58.2,362.2 58.3,361.5 58.4,360.7 58.5,360.0 58.6,359.3 58.8,358.6 58.9,357.8 59.0,357.1 59.1,356.4 59.3,355.6 59.4,354.9 59.5,354.1 59.7,353.4 59.8,352.6 59.9,351.9 60.0,351.1 60.2,350.4 60.3,349.6 60.5,348.9 60.6,348.1 60.7,347.4 60.9,346.6 61.0,345.8 61.2,345.0 61.3,344.3 61.5,343.5 61.6,342.7 61.8,341.9 61.9,341.1 62.1,340.4 62.2,339.6 62.4,338.8 62.5,338.0 62.7,337.2 62.9,336.4 63.0,335.6 63.2,334.8 63.4,334.0 63.5,333.2 63.7,332.4 63.9,331.5 64.0,330.7 64.2,329.9 64.4,329.1 64.6,328.3 64.7,327.4 64.9,326.6 65.1,325.8 65.3,324.9 65.5,324.1 65.7,323.2 65.9,322.4 66.0,321.5 66.2,320.7 66.4,319.8 66.6,319.0 66.8,318.1 67.0,317.2 67.2,316.4 67.4,315.5 67.6,314.6 67.8,313.8 68.1,312.9 68.3,312.0 68.5,311.1 68.7,310.2 68.9,309.3 69.1,308.4 69.4,307.5 69.6,306.6 69.8,305.7 70.0,304.8 70.3,303.9 70.5,303.0 70.7,302.1 71.0,301.2 71.2,300.2 71.4,299.3 71.7,298.4 71.9,297.4 72.2,296.5 72.4,295.6 72.7,294.6 72.9,293.7 73.2,292.7 73.4,291.8 73.7,290.8 73.9,289.8 74.2,288.9 74.5,287.9 74.7,286.9 75.0,286.0 75.3,285.0 75.5,284.0 75.8,283.0 76.1,282.0 76.4,281.0 76.7,280.0 76.9,279.0 77.2,278.0 77.5,277.0 77.8,276.0 78.1,275.0 78.4,273.9 78.7,272.9 79.0,271.9 79.3,270.8 79.6,269.8 80.0,268.7 80.3,267.7 80.6,266.6 80.9,265.6 81.2,264.5 81.5,263.5 81.9,262.4 82.2,261.3 82.5,260.2 82.9,259.2 83.2,258.1 83.6,257.0 83.9,255.9 84.3,254.8 84.6,253.7 85.0,252.6 85.3,251.4 85.7,250.3 86.0,249.2 86.4,248.1 86.8,246.9 87.1,245.8 87.5,244.7 87.9,243.5 88.3,242.4 88.7,241.2 89.1,240.0 89.5,238.9 89.8,237.7 90.2,236.5 90.6,235.3 91.1,234.1 91.5,232.9 91.9,231.7 92.3,230.5 92.7,229.3 93.1,228.1 93.6,226.9 94.0,225.7 94.4,224.4 94.9,223.2 95.3,221.9 95.7,220.7 96.2,219.4 96.7,218.2 97.1,216.9 97.6,215.6 98.0,214.4 98.5,213.1 99.0,211.8 99.5,210.5 99.9,209.2 100.4,207.9 100.9,206.6 101.4,205.3 101.9,203.9 102.4,202.6 102.9,201.3 103.4,199.9 103.9,198.6 104.4,197.2 105.0,195.8 105.5,194.5 106.0,193.1 106.6,191.7 107.1,190.3 107.7,188.9 108.2,187.5 108.8,186.1 109.3,184.7 109.9,183.2 110.5,181.8 111.0,180.4 111.6,178.9 112.2,177.5 112.8,176.0 113.4,174.5 114.0,173.0" stroke="#000080"/>
<polyline points="250.5,751.8 250.2,751.4 249.8,751.0 249.5,750.7 249.2,750.3 248.8,749.9 248.5,749.5 248.2,749.1 247.8,748.7 247.5,748.4 247.2,748.0 246.8,747.6 246.5,747.2 246.1,746.8 245.8,746.4 245.5,746.0 245.1,745.6 244.8,745.2 244.4,744.8 244.1,744.4 243.7,744.0 243.4,743.6 243.0,743.2 242.7,742.8 242.4,742.4 242.0,742.0 241.6,741.6 241.3,741.2 240.9,740.8 240.6,740.4 240.2,740.0 239.9,739.6 239.5,739.2 239.2,738.8 238.8,738.4 238.5,738.0 238.1,737.5 237.7,737.1 237.4,736.7 237.0,736.3 236.6,735.9 236.3,735.5 235.9,735.0 235.6,734.6 235.2,734.2 234.8,733.8 234.5,733.3 234.1,732.9 233.7,732.5 233.3,732.1 233.0,731.6 232.6,731.2 232.2,730.8 231.9,730.4 231.5,729.9 231.1,729.5 230.7,729.1 230.3,728.6 230.0,728.2 229.6,727.7 229.2,727.3 228.8,726.9 228.4,726.4 228.1,726.0 227.7,725.5 227.3,725.1 226.9,724.6 226.5,724.2 226.1,723.7 225.8,723.3 225.4,722.8 225.0,722.4 224.6,721.9 224.2,721.5 223.8,721.0 223.4,720.6 223.0,720.1 222.6,719.7 222.2,719.2 221.8,718.7 221.4,718.3 221.0,717.8 220.6,717.3 220.3,716.9 219.9,716.4 219.5,715.9 219.1,715.5 218.6,715.0 218.2,714.5 217.8,714.0 217.4,713.6 217.0,713.1 216.6,712.6 216.2,712.1 215.8,711.7 215.4,711.2 215.0,710.7 214.6,710.2 214.2,709.7 213.8,709.2 213.4,708.7 212.9,708.2 212.5,707.7 212.1,707.3 211.7,706.8 211.3,706.3 210.9,705.8 210.5,705.3 210.0,704.8 209.6,704.3 209.2,703.8 208.8,703.2 208.4,702.7 207.9,702.2 207.5,701.7 207.1,701.2 206.7,700.7 206.2,700.2 205.8,699.7 205.4,699.1 205.0,698.6 204.5,698.1 204.1,697.6 203.7,697.1 203.2,696.5 202.8,696.0 202.4,695.5 202.0,694.9 201.5,694.4 201.1,693.9 200.7,693.3 200.2,692.8 199.8,692.3 199.4,691.7 198.9,691.2 198.5,690.6 198.0,690.1 197.6,689.5 197.2,689.0 196.7,688.4 196.3,687.9 195.8,687.3 195.4,686.8 195.0,686.2 194.5,685.6 194.1,685.1 193.6,684.5 193.2,684.0 192.7,683.4 192.3,682.8 191.9,682.2 191.4,681.7 191.0,681.1 190.5,680.5 190.1,679.9 189.6,679.4 189.2,678.8 188.7,678.2 188.3,677.6 187.8,677.0 187.4,676.4 186.9,675.8 186.5,675.2 186.0,674.6 185.5,674.0 185.1,673.4 184.6,672.8 184.2,672.2 183.7,671.6 183.3,671.0 182.8,670.4 182.4,669.8 181.9,669.1 181.4,668.5 181.0,667.9 180.5,667.3 180.1,666.7 179.6,666.0 179.1,665.4 178.7,664.8 178.2,664.1 177.8,663.5 177.3,662.9 176.8,662.2 176.4,661.6 175.9,660.9 175.5,660.3 175.0,659.6 174.5,659.0 174.1,658.3 173.6,657.6 173.1,657.0 172.7,656.3 172.2,655.7 171.7,655.0 171.3,654.3 170.8,653.6 170.3,653.0 169.9,652.3 169.4,651.6 168.9,650.9 168.5,650.2 168.0,649.5 167.5,648.8 167.1,648.1 166.6,647.4 166.1,646.7 165.7,646.0 165.2,645.3 164.7,644.6 164.3,643.9 163.8,643.2 163.3,642.5 162.9,641.8 162.4,641.0 161.9,640.3 161.5,639.6 161.0,638.8 160.5,638.1 160.0,637.4 159.6,636.6 159.1,635.9 158.6,635.1 158.2,634.4 157.7,633.6 157.2,632.9 156.8,632.1 156.3,631.3 155.8,630.6 155.3,629.8 154.9,629.0 154.4,628.2 153.9,627.4 153.5,626.7 153.0,625.9 152.5,625.1 152.1,624.3 151.6,623.5 151.1,622.7 150.7,621.9 150.2,621.1 149.7,620.2 149.3,619.4 148.8,618.6 148.3,617.8 147.9,617.0 147.4,616.1 146.9,615.3 146.5,614.4 146.0,613.6 145.5,612.8 145.1,611.9 144.6,611.0 144.1,610.2 143.7,609.3 143.2,608.4 142.8,607.6 142.3,606.7 141.8,605.8 141.4,604.9 140.9,604.0 140.5,603.1 140.0,602.2 139.5,601.3 139.1,600.4 138.6,599.5 138.2,598.6 137.7,597.7 137.3,596.8 136.8,595.8 136.4,594.9 135.9,594.0 135.4,593.0 135.0,592.1 134.5,591.1 134.1,590.1 133.6,589.2 133.2,588.2 132.8,587.2 132.3,586.2 131.9,585.3 131.4,584.3 131.0,583.3 130.5,582.3 130.1,581.3 129.7,580.3 129.2,579.2 128.8,578.2 128.3,577.2 127.9,576.1 127.5,575.1 127.0,574.1 126.6,573.0 126.2,572.0 125.8,570.9 125.3,569.8 124.9,568.7 124.5,567.7 124.1,566.6 123.6,565.5 123.2,564.4 122.8,563.3 122.4,562.2 122.0,561.0 121.6,559.9 121.1,558.8 120.7,557.6 120.3,556.5 119.9,555.3 119.5,554.2 119.1,553.0 118.7,551.8 118.3,550.6 117.9,549.4 117.5,548.2 117.1,547.0 116.7,545.8 116.3,544.6 116.0,543.4 115.6,542.1 115.2,540.9 114.8,539.6 114.4,538.4 114.1,537.1 113.7,535.8 113.3,534.6 113.0,533.3 112.6,532.0 112.2,530.6 111.9,529.3 111.5,528.0 111.2,526.7 110.8,525.3 110.5,524.0 110.1,522.6 109.8,521.2 109.5,519.8 109.1,518.4 108.8,517.0 108.5,515.6 108.1,514.2 107.8,512.8 107.5,511.3 107.2,509.9 106.9,508.4 106.6,506.9 106.3,505.4 106.0,503.9 105.7,502.4 105.4,500.9 105.1,499.4 104.8,497.8 104.6,496.3 104.3,494.7 104.0,493.1 103.8,491.5 103.5,489.9 103.3,488.3 103.0,486.7 102.8,485.0 102.5,483.4 102.3,481.7 102.1,480.0 101.9,478.3 101.6,476.6 101.4,474.9 101.2,473.1 101.0,471.4 100.8,469.6 100.7,467.8 100.5,466.0 100.3,464.2 100.1,462.4 100.0,460.5 99.8,458.7 99.7,456.8 99.6,454.9 99.4,453.0 99.3,451.1 99.2,449.1 99.2,448.6 99.1,448.1 99.1,447.6 99.1,447.1 99.1,446.6 99.0,446.2 99.0,445.7 99.0,445.2 99.0,444.7 98.9,444.2 98.9,443.7 98.9,443.2 98.9,442.7 98.9,442.1 98.8,441.6 98.8,441.1 98.8,440.6 98.8,440.1 98.8,439.6 98.7,439.1 98.7,438.6 98.7,438.1 98.7,437.6 98.7,437.0 98.7,436.5 98.7,436.0 98.6,435.5 98.6,435.0 98.6,434.4 98.6,433.9 98.6,433.4 98.6,432.9 98.6,432.3 98.6,431.8 98.6,431.3 98.5,430.7 98.5,430.2 98.5,429.7 98.5,429.1 98.5,428.6 98.5,428.1 98.5,427.5 98.5,427.0 98.5,426.4 98.5,425.9 98.5,425.4 98.5,424.8 98.5,424.3 98.5,423.7 98.5,423.2 98.5,422.6 98.5,422.1 98.5,421.5 98.5,420.9 98.5,420.4 98.5,419.8 98.5,419.3 98.5,418.7 98.5,418.1 98.5,417.6 98.6,417.0 98.6,416.4 98.6,415.9 98.6,415.3 98.6,414.7 98.6,414.2 98.6,413.6 98.6,413.0 98.6,412.4 98.7,411.9 98.7,411.3 98.7,410.7 98.7,410.1 98.7,409.5 98.7,408.9 98.8,408.3 98.8,407.8 98.8,407.2 98.8,406.6 98.8,406.0 98.9,405.4 98.9,404.8 98.9,404.2 98.9,403.6 99.0,403.0 99.0,402.4 99.0,401.8 99.1,401.2 99.1,400.6 99.1,400.0 99.1,399.3 99.2,398.7 99.2,398.1 99.2,397.5 99.3,396.9 99.3,396.3 99.4,395.6 99.4,395.0 99.4,394.4 99.5,393.8 99.5,393.1 99.5,392.5 99.6,391.9 99.6,391.2 99.7,390.6 99.7,390.0 99.8,389.3 99.8,388.7 99.9,388.0 99.9,387.4 100.0,386.7 100.0,386.1 100.1,385.4 100.1,384.8 100.2,384.1 100.2,383.5 100.3,382.8 100.3,382.2 100.4,381.5 100.4,380.8 100.5,380.2 100.6,379.5 100.6,378.8 100.7,378.2 100.7,377.5 100.8,376.8 100.9,376.1 100.9,375.5 101.0,374.8 101.1,374.1 101.1,373.4 101.2,372.7 101.3,372.0 101.4,371.4 101.4,370.7 101.5,370.0 101.6,369.3 101.6,368.6 101.7,367.9 101.8,367.2 101.9,366.5 102.0,365.8 102.0,365.0 102.1,364.3 102.2,363.6 102.3,362.9 102.4,362.2 102.5,361.5 102.6,360.7 102.7,360.0 102.8,359.3 102.8,358.6 102.9,357.8 103.0,357.1 103.1,356.4 103.2,355.6 103.3,354.9 103.4,354.1 103.5,353.4 103.6,352.6 103.7,351.9 103.8,351.1 103.9,350.4 104.1,349.6 104.2,348.9 104.3,348.1 104.4,347.4 104.5,346.6 104.6,345.8 104.7,345.0 104.9,344.3 105.0,343.5 105.1,342.7 105.2,341.9 105.3,341.1 105.5,340.4 105.6,339.6 105.7,338.8 105.8,338.0 106.0,337.2 106.1,336.4 106.2,335.6 106.4,334.8 106.5,334.0 106.7,333.2 106.8,332.4 106.9,331.5 107.1,330.7 107.2,329.9 107.4,329.1 107.5,328.3 107.7,327.4 107.8,326.6 108.0,325.8 108.1,324.9 108.3,324.1 108.4,323.2 108.6,322.4 108.8,321.5 108.9,320.7 109.1,319.8 109.2,319.0 109.4,318.1 109.6,317.2 109.8,316.4 109.9,315.5 110.1,314.6 110.3,313.8 110.5,312.9 110.6,312.0 110.8,311.1 111.0,310.2 111.2,309.3 111.4,308.4 111.6,307.5 111.8,306.6 111.9,305.7 112.1,304.8 112.3,303.9 112.5,303.0 112.7,302.1 112.9,301.2 113.1,300.2 113.4,299.3 113.6,298.4 113.8,297.4 114.0,296.5 114.2,295.6 114.4,294.6 114.6,293.7 114.9,292.7 115.1,291.8 115.3,290.8 115.5,289.8 115.8,288.9 116.0,287.9 116.2,286.9 116.5,286.0 116.7,285.0 117.0,284.0 117.2,283.0 117.4,282.0 117.7,281.0 117.9,280.0 118.2,279.0 118.4,278.0 118.7,277.0 119.0,276.0 119.2,275.0 119.5,273.9 119.8,272.9 120.0,271.9 120.3,270.8 120.6,269.8 120.9,268.7 121.1,267.7 121.4,266.6 121.7,265.6 122.0,264.5 122.3,263.5 122.6,262.4 122.9,261.3 123.2,260.2 123.5,259.2 123.8,258.1 124.1,257.0 124.4,255.9 124.7,254.8 125.0,253.7 125.4,252.6 125.7,251.4 126.0,250.3 126.3,249.2 126.7,248.1 127.0,246.9 127.3,245.8 127.7,244.7 128.0,243.5 128.4,242.4 128.7,241.2 129.1,240.0 129.4,238.9 129.8,237.7 130.1,236.5 130.5,235.3 130.9,234.1 131.3,232.9 131.6,231.7 132.0,230.5 132.4,229.3 132.8,228.1 133.2,226.9 133.6,225.7 134.0,224.4 134.4,223.2 134.8,221.9 135.2,220.7 135.6,219.4 136.0,218.2 136.4,216.9 136.8,215.6 137.3,214.4 137.7,213.1 138.1,211.8 138.6,210.5 139.0,209.2 139.5,207.9 139.9,206.6 140.4,205.3 140.8,203.9 141.3,202.6 141.8,201.3 142.2,199.9 142.7,198.6 143.2,197.2 143.7,195.8 144.2,194.5 144.7,193.1 145.2,191.7 145.7,190.3 146.2,188.9 146.7,187.5 147.2,186.1 147.7,184.7 148.2,183.2 148.8,181.8 149.3,180.4 149.8,178.9 150.4,177.5 150.9,176.0 151.5,174.5 152.1,173.0 152.6,171.6 153.2,170.1 153.8,168.6 154.4,167.0 154.9,165.5 155.5,164.0 156.1,162.5 156.7,160.9 157.3,159.4 158.0,157.8 158.6,156.3 159.2,154.7 159.8,153.1 160.5,151.5 161.1,149.9 161.8,148.3 162.4,146.7 163.1,145.0 163.8,143.4 164.4,141.8 165.1,140.1 165.8,138.4 166.5,136.8 167.2,135.1 167.9,133.4 168.6,131.7 169.4,130.0 170.1,128.3 170.8,126.5 171.6,124.8 172.3,123.0 173.1,121.3 173.8,119.5 174.6,117.7 175.4,115.9 176.2,114.1 177.0,112.3 177.8,110.5 178.6,108.6" stroke="#000080"/>
<polyline points="308.8,751.8 308.6,751.4 308.3,751.0 308.0,750.7 307.7,750.3 307.5,749.9 307.2,749.5 306.9,749.1 306.6,748.7 306.4,748.4 306.1,748.0 305.8,747.6 305.5,747.2 305.2,746.8 305.0,746.4 304.7,746.0 304.4,745.6 304.1,745.2 303.8,744.8 303.5,744.4 303.2,744.0 302.9,743.6 302.7,743.2 302.4,742.8 302.1,742.4 301.8,742.0 301.5,741.6 301.2,741.2 300.9,740.8 300.6,740.4 300.3,740.0 300.0,739.6 299.7,739.2 299.4,738.8 299.1,738.4 298.8,738.0 298.5,737.5 298.2,737.1 297.9,736.7 297.6,736.3 297.2,735.9 296.9,735.5 296.6,735.0 296.3,734.6 296.0,734.2 295.7,733.8 295.4,733.3 295.1,732.9 294.7,732.5 294.4,732.1 294.1,731.6 293.8,731.2 293.5,730.8 293.1,730.4 292.8,729.9 292.5,729.5 292.2,729.1 291.8,728.6 291.5,728.2 291.2,727.7 290.9,727.3 290.5,726.9 290.2,726.4 289.9,726.0 289.5,725.5 289.2,725.1 288.9,724.6 288.5,724.2 288.2,723.7 287.8,723.3 287.5,722.8 287.2,722.4 286.8,721.9 286.5,721.5 286.1,721.0 285.8,720.6 285.4,720.1 285.1,719.7 284.7,719.2 284.4,718.7 284.0,718.3 283.7,717.8 283.3,717.3 283.0,716.9 282.6,716.4 282.3,715.9 281.9,715.5 281.5,715.0 281.2,714.5 280.8,714.0 280.5,713.6 280.1,713.1 279.7,712.6 279.4,712.1 279.0,711.7 278.6,711.2 278.3,710.7 277.9,710.2 277.5,709.7 277.1,709.2 276.8,708.7 276.4,708.2 276.0,707.7 275.6,707.3 275.3,706.8 274.9,706.3 274.5,705.8 274.1,705.3 273.7,704.8 273.3,704.3 273.0,703.8 272.6,703.2 272.2,702.7 271.8,702.2 271.4,701.7 271.0,701.2 270.6,700.7 270.2,700.2 269.8,699.7 269.4,699.1 269.0,698.6 268.6,698.1 268.2,697.6 267.8,697.1 267.4,696.5 267.0,696.0 266.6,695.5 266.2,694.9 265.8,694.4 265.4,693.9 265.0,693.3 264.6,692.8 264.2,692.3 263.8,691.7 263.4,691.2 263.0,690.6 262.5,690.1 262.1,689.5 261.7,689.0 261.3,688.4 260.9,687.9 260.4,687.3 260.0,686.8 259.6,686.2 259.2,685.6 258.8,685.1 258.3,684.5 257.9,684.0 257.5,683.4 257.0,682.8 256.6,682.2 256.2,681.7 255.7,681.1 255.3,680.5 254.9,679.9 254.4,679.4 254.0,678.8 253.6,678.2 253.1,677.6 252.7,677.0 252.2,676.4 251.8,675.8 251.4,675.2 250.9,674.6 250.5,674.0 250.0,673.4 249.6,672.8 249.1,672.2 248.7,671.6 248.2,671.0 247.8,670.4 247.3,669.8 246.9,669.1 246.4,668.5 245.9,667.9 245.5,667.3 245.0,666.7 244.6,666.0 244.1,665.4 243.7,664.8 243.2,664.1 242.7,663.5 242.3,662.9 241.8,662.2 241.3,661.6 240.9,660.9 240.4,660.3 239.9,659.6 239.5,659.0 239.0,658.3 238.5,657.6 238.1,657.0 237.6,656.3 237.1,655.7 236.6,655.0 236.2,654.3 235.7,653.6 235.2,653.0 234.7,652.3 234.2,651.6 233.8,650.9 233.3,650.2 232.8,649.5 232.3,648.8 231.8,648.1 231.4,647.4 230.9,646.7 230.4,646.0 229.9,645.3 229.4,644.6 228.9,643.9 228.4,643.2 227.9,642.5 227.5,641.8 227.0,641.0 226.5,640.3 226.0,639.6 225.5,638.8 225.0,638.1 224.5,637.4 224.0,636.6 223.5,635.9 223.0,635.1 222.5,634.4 222.0,633.6 221.5,632.9 221.0,632.1 220.5,631.3 220.0,630.6 219.5,629.8 219.1,629.0 218.6,628.2 218.1,627.4 217.6,626.7 217.0,625.9 216.5,625.1 216.0,624.3 215.5,623.5 215.0,622.7 214.5,621.9 214.0,621.1 213.5,620.2 213.0,619.4 212.5,618.6 212.0,617.8 211.5,617.0 211.0,616.1 210.5,615.3 210.0,614.4 209.5,613.6 209.0,612.8 208.5,611.9 208.0,611.0 207.5,610.2 207.0,609.3 206.5,608.4 206.0,607.6 205.5,606.7 204.9,605.8 204.4,604.9 203.9,604.0 203.4,603.1 202.9,602.2 202.4,601.3 201.9,600.4 201.4,599.5 200.9,598.6 200.4,597.7 199.9,596.8 199.4,595.8 198.9,594.9 198.4,594.0 197.9,593.0 197.4,592.1 196.9,591.1 196.4,590.1 195.9,589.2 195.4,588.2 194.9,587.2 194.4,586.2 193.8,585.3 193.3,584.3 192.8,583.3 192.3,582.3 191.9,581.3 191.4,580.3 190.9,579.2 190.4,578.2 189.9,577.2 189.4,576.1 188.9,575.1 188.4,574.1 187.9,573.0 187.4,572.0 186.9,570.9 186.4,569.8 185.9,568.7 185.4,567.7 184.9,566.6 184.5,565.5 184.0,564.4 183.5,563.3 183.0,562.2 182.5,561.0 182.0,559.9 181.6,558.8 181.1,557.6 180.6,556.5 180.1,555.3 179.7,554.2 179.2,553.0 178.7,551.8 178.2,550.6 177.8,549.4 177.3,548.2 176.8,547.0 176.4,545.8 175.9,544.6 175.5,543.4 175.0,542.1 174.5,540.9 174.1,539.6 173.6,538.4 173.2,537.1 172.7,535.8 172.3,534.6 171.9,533.3 171.4,532.0 171.0,530.6 170.5,529.3 170.1,528.0 169.7,526.7 169.2,525.3 168.8,524.0 168.4,522.6 168.0,521.2 167.6,519.8 167.1,518.4 166.7,517.0 166.3,515.6 165.9,514.2 165.5,512.8 165.1,511.3 164.7,509.9 164.3,508.4 163.9,506.9 163.5,505.4 163.2,503.9 162.8,502.4 162.4,500.9 162.0,499.4 161.7,497.8 161.3,496.3 160.9,494.7 160.6,493.1 160.2,491.5 159.9,489.9 159.5,488.3 159.2,486.7 158.9,485.0 158.5,483.4 158.2,481.7 157.9,480.0 157.6,478.3 157.3,476.6 157.0,474.9 156.7,473.1 156.4,471.4 156.1,469.6 155.8,467.8 155.5,466.0 155.3,464.2 155.0,462.4 154.7,460.5 154.5,458.7 154.2,456.8 154.0,454.9 153.8,453.0 153.6,451.1 153.3,449.1 153.3,448.6 153.2,448.1 153.2,447.6 153.1,447.1 153.1,446.6 153.0,446.2 153.0,445.7 152.9,445.2 152.9,444.7 152.8,444.2 152.8,443.7 152.7,443.2 152.7,442.7 152.6,442.1 152.6,441.6 152.6,441.1 152.5,440.6 152.5,440.1 152.4,439.6 152.4,439.1 152.3,438.6 152.3,438.1 152.2,437.6 152.2,437.0 152.2,436.5 152.1,436.0 152.1,435.5 152.0,435.0 152.0,434.4 152.0,433.9 151.9,433.4 151.9,432.9 151.9,432.3 151.8,431.8 151.8,431.3 151.8,430.7 151.7,430.2 151.7,429.7 151.7,429.1 151.6,428.6 151.6,428.1 151.6,427.5 151.5,427.0 151.5,426.4 151.5,425.9 151.4,425.4 151.4,424.8 151.4,424.3 151.4,423.7 151.3,423.2 151.3,422.6 151.3,422.1 151.3,421.5 151.2,420.9 151.2,420.4 151.2,419.8 151.2,419.3 151.1,418.7 151.1,418.1 151.1,417.6 151.1,417.0 151.1,416.4 151.0,415.9 151.0,415.3 151.0,414.7 151.0,414.2 151.0,413.6 151.0,413.0 150.9,412.4 150.9,411.9 150.9,411.3 150.9,410.7 150.9,410.1 150.9,409.5 150.9,408.9 150.9,408.3 150.9,407.8 150.9,407.2 150.8,406.6 150.8,406.0 150.8,405.4 150.8,404.8 150.8,404.2 150.8,403.6 150.8,403.0 150.8,402.4 150.8,401.8 150.8,401.2 150.8,400.6 150.8,400.0 150.8,399.3 150.8,398.7 150.8,398.1 150.8,397.5 150.8,396.9 150.8,396.3 150.9,395.6 150.9,395.0 150.9,394.4 150.9,393.8 150.9,393.1 150.9,392.5 150.9,391.9 150.9,391.2 150.9,390.6 151.0,390.0 151.0,389.3 151.0,388.7 151.0,388.0 151.0,387.4 151.0,386.7 151.1,386.1 151.1,385.4 151.1,384.8 151.1,384.1 151.2,383.5 151.2,382.8 151.2,382.2 151.2,381.5 151.3,380.8 151.3,380.2 151.3,379.5 151.3,378.8 151.4,378.2 151.4,377.5 151.4,376.8 151.5,376.1 151.5,375.5 151.5,374.8 151.6,374.1 151.6,373.4 151.7,372.7 151.7,372.0 151.7,371.4 151.8,370.7 151.8,370.0 151.9,369.3 151.9,368.6 152.0,367.9 152.0,367.2 152.1,366.5 152.1,365.8 152.2,365.0 152.2,364.3 152.3,363.6 152.3,362.9 152.4,362.2 152.4,361.5 152.5,360.7 152.6,360.0 152.6,359.3 152.7,358.6 152.7,357.8 152.8,357.1 152.9,356.4 152.9,355.6 153.0,354.9 153.1,354.1 153.1,353.4 153.2,352.6 153.3,351.9 153.4,351.1 153.4,350.4 153.5,349.6 153.6,348.9 153.7,348.1 153.7,347.4 153.8,346.6 153.9,345.8 154.0,345.0 154.1,344.3 154.2,343.5 154.2,342.7 154.3,341.9 154.4,341.1 154.5,340.4 154.6,339.6 154.7,338.8 154.8,338.0 154.9,337.2 155.0,336.4 155.1,335.6 155.2,334.8 155.3,334.0 155.4,333.2 155.5,332.4 155.6,331.5 155.7,330.7 155.8,329.9 156.0,329.1 156.1,328.3 156.2,327.4 156.3,326.6 156.4,325.8 156.5,324.9 156.7,324.1 156.8,323.2 156.9,322.4 157.0,321.5 157.2,320.7 157.3,319.8 157.4,319.0 157.6,318.1 157.7,317.2 157.8,316.4 158.0,315.5 158.1,314.6 158.2,313.8 158.4,312.9 158.5,312.0 158.7,311.1 158.8,310.2 159.0,309.3 159.1,308.4 159.3,307.5 159.4,306.6 159.6,305.7 159.8,304.8 159.9,303.9 160.1,303.0 160.2,302.1 160.4,301.2 160.6,300.2 160.8,299.3 160.9,298.4 161.1,297.4 161.3,296.5 161.5,295.6 161.6,294.6 161.8,293.7 162.0,292.7 162.2,291.8 162.4,290.8 162.6,289.8 162.8,288.9 163.0,287.9 163.2,286.9 163.4,286.0 163.6,285.0 163.8,284.0 164.0,283.0 164.2,282.0 164.4,281.0 164.6,280.0 164.8,279.0 165.0,278.0 165.3,277.0 165.5,276.0 165.7,275.0 165.9,273.9 166.2,272.9 166.4,271.9 166.6,270.8 166.9,269.8 167.1,268.7 167.4,267.7 167.6,266.6 167.8,265.6 168.1,264.5 168.3,263.5 168.6,262.4 168.9,261.3 169.1,260.2 169.4,259.2 169.7,258.1 169.9,257.0 170.2,255.9 170.5,254.8 170.7,253.7 171.0,252.6 171.3,251.4 171.6,250.3 171.9,249.2 172.2,248.1 172.5,246.9 172.8,245.8 173.1,244.7 173.4,243.5 173.7,242.4 174.0,241.2 174.3,240.0 174.6,238.9 174.9,237.7 175.3,236.5 175.6,235.3 175.9,234.1 176.2,232.9 176.6,231.7 176.9,230.5 177.3,229.3 177.6,228.1 177.9,226.9 178.3,225.7 178.7,224.4 179.0,223.2 179.4,221.9 179.7,220.7 180.1,219.4 180.5,218.2 180.9,216.9 181.2,215.6 181.6,214.4 182.0,213.1 182.4,211.8 182.8,210.5 183.2,209.2 183.6,207.9 184.0,206.6 184.4,205.3 184.8,203.9 185.3,202.6 185.7,201.3 186.1,199.9 186.5,198.6 187.0,197.2 187.4,195.8 187.9,194.5 188.3,193.1 188.8,191.7 189.2,190.3 189.7,188.9 190.2,187.5 190.6,186.1 191.1,184.7 191.6,183.2 192.1,181.8 192.6,180.4 193.1,178.9 193.6,177.5 194.1,176.0 194.6,174.5 195.1,173.0 195.6,171.6 196.1,170.1 196.7,168.6 197.2,167.0 197.7,165.5 198.3,164.0 198.8,162.5 199.4,160.9 200.0,159.4 200.5,157.8 201.1,156.3 201.7,154.7 202.3,153.1 202.9,151.5 203.5,149.9 204.1,148.3 204.7,146.7 205.3,145.0 205.9,143.4 206.5,141.8 207.2,140.1 207.8,138.4 208.5,136.8 209.1,135.1 209.8,133.4 210.4,131.7 211.1,130.0 211.8,128.3 212.5,126.5 213.2,124.8 213.9,123.0 214.6,121.3 215.3,119.5 216.0,117.7 216.7,115.9 217.5,114.1 218.2,112.3 219.0,110.5 219.7,108.6 220.5,106.8 221.3,104.9 222.0,103.1 222.8,101.2 223.6,99.3 224.4,97.4 225.2,95.5 226.1,93.6 226.9,91.6 227.7,89.7 228.6,87.7 229.4,85.7 230.3,83.7 231.2,81.7 232.1,79.7 233.0,77.7 233.9,75.6 234.8,73.6 235.7,71.5 236.6,69.4 237.6,67.3 238.5,65.2 239.5,63.1 240.4,61.0 241.4,58.8 242.4,56.7 243.4,54.5 244.4,52.3 245.5,50.1" stroke="#000080"/>
<polyline points="366.5,751.8 366.3,751.4 366.1,751.0 365.9,750.7 365.7,750.3 365.5,749.9 365.3,749.5 365.1,749.1 364.9,748.7 364.7,748.4 364.5,748.0 364.3,747.6 364.1,747.2 363.9,746.8 363.7,746.4 363.5,746.0 363.3,745.6 363.1,745.2 362.9,744.8 362.7,744.4 362.5,744.0 362.3,743.6 362.1,743.2 361.9,742.8 361.7,742.4 361.4,742.0 361.2,741.6 361.0,741.2 360.8,740.8 360.6,740.4 360.4,740.0 360.2,739.6 359.9,739.2 359.7,738.8 359.5,738.4 359.3,738.0 359.1,737.5 358.9,737.1 358.6,736.7 358.4,736.3 358.2,735.9 358.0,735.5 357.7,735.0 357.5,734.6 357.3,734.2 357.1,733.8 356.8,733.3 356.6,732.9 356.4,732.5 356.1,732.1 355.9,731.6 355.7,731.2 355.4,730.8 355.2,730.4 355.0,729.9 354.7,729.5 354.5,729.1 354.2,728.6 354.0,728.2 353.8,727.7 353.5,727.3 353.3,726.9 353.0,726.4 352.8,726.0 352.5,725.5 352.3,725.1 352.1,724.6 351.8,724.2 351.6,723.7 351.3,723.3 351.0,722.8 350.8,722.4 350.5,721.9 350.3,721.5 350.0,721.0 349.8,720.6 349.5,720.1 349.3,719.7 349.0,719.2 348.7,718.7 348.5,718.3 348.2,717.8 347.9,717.3 347.7,716.9 347.4,716.4 347.1,715.9 346.9,715.5 346.6,715.0 346.3,714.5 346.0,714.0 345.8,713.6 345.5,713.1 345.2,712.6 344.9,712.1 344.7,711.7 344.4,711.2 344.1,710.7 343.8,710.2 343.5,709.7 343.3,709.2 343.0,708.7 342.7,708.2 342.4,707.7 342.1,707.3 341.8,706.8 341.5,706.3 341.2,705.8 340.9,705.3 340.6,704.8 340.3,704.3 340.0,703.8 339.7,703.2 339.4,702.7 339.1,702.2 338.8,701.7 338.5,701.2 338.2,700.7 337.9,700.2 337.6,699.7 337.3,699.1 337.0,698.6 336.7,698.1 336.3,697.6 336.0,697.1 335.7,696.5 335.4,696.0 335.1,695.5 334.7,694.9 334.4,694.4 334.1,693.9 333.8,693.3 333.4,692.8 333.1,692.3 332.8,691.7 332.5,691.2 332.1,690.6 331.8,690.1 331.5,689.5 331.1,689.0 330.8,688.4 330.4,687.9 330.1,687.3 329.8,686.8 329.4,686.2 329.1,685.6 328.7,685.1 328.4,684.5 328.0,684.0 327.7,683.4 327.3,682.8 327.0,682.2 326.6,681.7 326.2,681.1 325.9,680.5 325.5,679.9 325.2,679.4 324.8,678.8 324.4,678.2 324.1,677.6 323.7,677.0 323.3,676.4 323.0,675.8 322.6,675.2 322.2,674.6 321.8,674.0 321.5,673.4 321.1,672.8 320.7,672.2 320.3,671.6 319.9,671.0 319.5,670.4 319.2,669.8 318.8,669.1 318.4,668.5 318.0,667.9 317.6,667.3 317.2,666.7 316.8,666.0 316.4,665.4 316.0,664.8 315.6,664.1 315.2,663.5 314.8,662.9 314.4,662.2 314.0,661.6 313.6,660.9 313.2,660.3 312.7,659.6 312.3,659.0 311.9,658.3 311.5,657.6 311.1,657.0 310.7,656.3 310.2,655.7 309.8,655.0 309.4,654.3 309.0,653.6 308.5,653.0 308.1,652.3 307.7,651.6 307.2,650.9 306.8,650.2 306.4,649.5 305.9,648.8 305.5,648.1 305.0,647.4 304.6,646.7 304.2,646.0 303.7,645.3 303.3,644.6 302.8,643.9 302.4,643.2 301.9,642.5 301.5,641.8 301.0,641.0 300.5,640.3 300.1,639.6 299.6,638.8 299.2,638.1 298.7,637.4 298.2,636.6 297.8,635.9 297.3,635.1 296.8,634.4 296.4,633.6 295.9,632.9 295.4,632.1 294.9,631.3 294.5,630.6 294.0,629.8 293.5,629.0 293.0,628.2 292.5,627.4 292.1,626.7 291.6,625.9 291.1,625.1 290.6,624.3 290.1,623.5 289.6,622.7 289.1,621.9 288.6,621.1 288.1,620.2 287.6,619.4 287.1,618.6 286.6,617.8 286.1,617.0 285.6,616.1 285.1,615.3 284.6,614.4 284.1,613.6 283.6,612.8 283.1,611.9 282.6,611.0 282.1,610.2 281.6,609.3 281.1,608.4 280.6,607.6 280.0,606.7 279.5,605.8 279.0,604.9 278.5,604.0 278.0,603.1 277.5,602.2 276.9,601.3 276.4,600.4 275.9,599.5 275.4,598.6 274.8,597.7 274.3,596.8 273.8,595.8 273.3,594.9 272.7,594.0 272.2,593.0 271.7,592.1 271.2,591.1 270.6,590.1 270.1,589.2 269.6,588.2 269.0,587.2 268.5,586.2 268.0,585.3 267.4,584.3 266.9,583.3 266.4,582.3 265.8,581.3 265.3,580.3 264.7,579.2 264.2,578.2 263.7,577.2 263.1,576.1 262.6,575.1 262.1,574.1 261.5,573.0 261.0,572.0 260.4,570.9 259.9,569.8 259.4,568.7 258.8,567.7 258.3,566.6 257.8,565.5 257.2,564.4 256.7,563.3 256.1,562.2 255.6,561.0 255.1,559.9 254.5,558.8 254.0,557.6 253.4,556.5 252.9,555.3 252.4,554.2 251.8,553.0 251.3,551.8 250.8,550.6 250.2,549.4 249.7,548.2 249.2,547.0 248.6,545.8 248.1,544.6 247.6,543.4 247.0,542.1 246.5,540.9 246.0,539.6 245.5,538.4 244.9,537.1 244.4,535.8 243.9,534.6 243.4,533.3 242.9,532.0 242.3,530.6 241.8,529.3 241.3,528.0 240.8,526.7 240.3,525.3 239.8,524.0 239.3,522.6 238.8,521.2 238.2,519.8 237.7,518.4 237.2,517.0 236.7,515.6 236.2,514.2 235.8,512.8 235.3,511.3 234.8,509.9 234.3,508.4 233.8,506.9 233.3,505.4 232.8,503.9 232.4,502.4 231.9,500.9 231.4,499.4 231.0,497.8 230.5,496.3 230.0,494.7 229.6,493.1 229.1,491.5 228.7,489.9 228.2,488.3 227.8,486.7 227.3,485.0 226.9,483.4 226.5,481.7 226.0,480.0 225.6,478.3 225.2,476.6 224.8,474.9 224.4,473.1 224.0,471.4 223.6,469.6 223.2,467.8 222.8,466.0 222.4,464.2 222.0,462.4 221.7,460.5 221.3,458.7 220.9,456.8 220.6,454.9 220.2,453.0 219.9,451.1 219.5,449.1 219.5,448.6 219.4,448.1 219.3,447.6 219.2,447.1 219.1,446.6 219.1,446.2 219.0,445.7 218.9,445.2 218.8,444.7 218.7,444.2 218.7,443.7 218.6,443.2 218.5,442.7 218.4,442.1 218.3,441.6 218.3,441.1 218.2,440.6 218.1,440.1 218.0,439.6 218.0,439.1 217.9,438.6 217.8,438.1 217.7,437.6 217.7,437.0 217.6,436.5 217.5,436.0 217.5,435.5 217.4,435.0 217.3,434.4 217.2,433.9 217.2,433.4 217.1,432.9 217.0,432.3 217.0,431.8 216.9,431.3 216.8,430.7 216.8,430.2 216.7,429.7 216.6,429.1 216.6,428.6 216.5,428.1 216.4,427.5 216.4,427.0 216.3,426.4 216.3,425.9 216.2,425.4 216.1,424.8 216.1,424.3 216.0,423.7 216.0,423.2 215.9,422.6 215.8,422.1 215.8,421.5 215.7,420.9 215.7,420.4 215.6,419.8 215.6,419.3 215.5,418.7 215.5,418.1 215.4,417.6 215.3,417.0 215.3,416.4 215.2,415.9 215.2,415.3 215.1,414.7 215.1,414.2 215.0,413.6 215.0,413.0 214.9,412.4 214.9,411.9 214.9,411.3 214.8,410.7 214.8,410.1 214.7,409.5 214.7,408.9 214.6,408.3 214.6,407.8 214.5,407.2 214.5,406.6 214.5,406.0 214.4,405.4 214.4,404.8 214.3,404.2 214.3,403.6 214.3,403.0 214.2,402.4 214.2,401.8 214.2,401.2 214.1,400.6 214.1,400.0 214.1,399.3 214.0,398.7 214.0,398.1 214.0,397.5 213.9,396.9 213.9,396.3 213.9,395.6 213.9,395.0 213.8,394.4 213.8,393.8 213.8,393.1 213.8,392.5 213.7,391.9 213.7,391.2 213.7,390.6 213.7,390.0 213.6,389.3 213.6,388.7 213.6,388.0 213.6,387.4 213.6,386.7 213.6,386.1 213.5,385.4 213.5,384.8 213.5,384.1 213.5,383.5 213.5,382.8 213.5,382.2 213.5,381.5 213.5,380.8 213.4,380.2 213.4,379.5 213.4,378.8 213.4,378.2 213.4,377.5 213.4,376.8 213.4,376.1 213.4,375.5 213.4,374.8 213.4,374.1 213.4,373.4 213.4,372.7 213.4,372.0 213.4,371.4 213.4,370.7 213.4,370.0 213.4,369.3 213.5,368.6 213.5,367.9 213.5,367.2 213.5,366.5 213.5,365.8 213.5,365.0 213.5,364.3 213.5,363.6 213.6,362.9 213.6,362.2 213.6,361.5 213.6,360.7 213.6,360.0 213.6,359.3 213.7,358.6 213.7,357.8 213.7,357.1 213.7,356.4 213.8,355.6 213.8,354.9 213.8,354.1 213.9,353.4 213.9,352.6 213.9,351.9 214.0,351.1 214.0,350.4 214.0,349.6 214.1,348.9 214.1,348.1 214.1,347.4 214.2,346.6 214.2,345.8 214.3,345.0 214.3,344.3 214.4,343.5 214.4,342.7 214.5,341.9 214.5,341.1 214.6,340.4 214.6,339.6 214.7,338.8 214.7,338.0 214.8,337.2 214.8,336.4 214.9,335.6 215.0,334.8 215.0,334.0 215.1,333.2 215.2,332.4 215.2,331.5 215.3,330.7 215.4,329.9 215.4,329.1 215.5,328.3 215.6,327.4 215.7,326.6 215.7,325.8 215.8,324.9 215.9,324.1 216.0,323.2 216.0,322.4 216.1,321.5 216.2,320.7 216.3,319.8 216.4,319.0 216.5,318.1 216.6,317.2 216.7,316.4 216.8,315.5 216.9,314.6 217.0,313.8 217.1,312.9 217.2,312.0 217.3,311.1 217.4,310.2 217.5,309.3 217.6,308.4 217.7,307.5 217.8,306.6 217.9,305.7 218.0,304.8 218.2,303.9 218.3,303.0 218.4,302.1 218.5,301.2 218.7,300.2 218.8,299.3 218.9,298.4 219.0,297.4 219.2,296.5 219.3,295.6 219.4,294.6 219.6,293.7 219.7,292.7 219.9,291.8 220.0,290.8 220.2,289.8 220.3,288.9 220.5,287.9 220.6,286.9 220.8,286.0 220.9,285.0 221.1,284.0 221.2,283.0 221.4,282.0 221.6,281.0 221.7,280.0 221.9,279.0 222.1,278.0 222.3,277.0 222.4,276.0 222.6,275.0 222.8,273.9 223.0,272.9 223.2,271.9 223.3,270.8 223.5,269.8 223.7,268.7 223.9,267.7 224.1,266.6 224.3,265.6 224.5,264.5 224.7,263.5 224.9,262.4 225.2,261.3 225.4,260.2 225.6,259.2 225.8,258.1 226.0,257.0 226.2,255.9 226.5,254.8 226.7,253.7 226.9,252.6 227.2,251.4 227.4,250.3 227.6,249.2 227.9,248.1 228.1,246.9 228.4,245.8 228.6,244.7 228.9,243.5 229.1,242.4 229.4,241.2 229.7,240.0 229.9,238.9 230.2,237.7 230.5,236.5 230.7,235.3 231.0,234.1 231.3,232.9 231.6,231.7 231.9,230.5 232.2,229.3 232.5,228.1 232.8,226.9 233.1,225.7 233.4,224.4 233.7,223.2 234.0,221.9 234.3,220.7 234.6,219.4 234.9,218.2 235.3,216.9 235.6,215.6 235.9,214.4 236.3,213.1 236.6,211.8 236.9,210.5 237.3,209.2 237.6,207.9 238.0,206.6 238.4,205.3 238.7,203.9 239.1,202.6 239.5,201.3 239.8,199.9 240.2,198.6 240.6,197.2 241.0,195.8 241.4,194.5 241.8,193.1 242.2,191.7 242.6,190.3 243.0,188.9 243.4,187.5 243.8,186.1 244.2,184.7 244.7,183.2 245.1,181.8 245.5,180.4 246.0,178.9 246.4,177.5 246.9,176.0 247.3,174.5 247.8,173.0 248.2,171.6 248.7,170.1 249.2,168.6 249.7,167.0 250.2,165.5 250.6,164.0 251.1,162.5 251.6,160.9 252.1,159.4 252.7,157.8 253.2,156.3 253.7,154.7 254.2,153.1 254.7,151.5 255.3,149.9 255.8,148.3 256.4,146.7 256.9,145.0 257.5,143.4 258.1,141.8 258.6,140.1 259.2,138.4 259.8,136.8 260.4,135.1 261.0,133.4 261.6,131.7 262.2,130.0 262.8,128.3 263.5,126.5 264.1,124.8 264.7,123.0 265.4,121.3 266.0,119.5 266.7,117.7 267.4,115.9 268.0,114.1 268.7,112.3 269.4,110.5 270.1,108.6 270.8,106.8 271.5,104.9 272.2,103.1 272.9,101.2 273.7,99.3 274.4,97.4 275.2,95.5 275.9,93.6 276.7,91.6 277.5,89.7 278.3,87.7 279.0,85.7 279.8,83.7 280.7,81.7 281.5,79.7 282.3,77.7 283.1,75.6 284.0,73.6 284.8,71.5 285.7,69.4 286.6,67.3 287.5,65.2 288.3,63.1 289.3,61.0 290.2,58.8 291.1,56.7 292.0,54.5 293.0,52.3 293.9,50.1" stroke="#000080"/>
<polyline points="423.9,751.8 423.8,751.4 423.7,751.0 423.6,750.7 423.5,750.3 423.3,749.9 423.2,749.5 423.1,749.1 423.0,748.7 422.9,748.4 422.8,748.0 422.7,747.6 422.6,747.2 422.5,746.8 422.3,746.4 422.2,746.0 422.1,745.6 422.0,745.2 421.9,744.8 421.8,744.4 421.7,744.0 421.5,743.6 421.4,743.2 421.3,742.8 421.2,742.4 421.1,742.0 420.9,741.6 420.8,741.2 420.7,740.8 420.6,740.4 420.5,740.0 420.3,739.6 420.2,739.2 420.1,738.8 420.0,738.4 419.9,738.0 419.7,737.5 419.6,737.1 419.5,736.7 419.4,736.3 419.2,735.9 419.1,735.5 419.0,735.0 418.9,734.6 418.7,734.2 418.6,733.8 418.5,733.3 418.3,732.9 418.2,732.5 418.1,732.1 418.0,731.6 417.8,731.2 417.7,730.8 417.6,730.4 417.4,729.9 417.3,729.5 417.2,729.1 417.0,728.6 416.9,728.2 416.8,727.7 416.6,727.3 416.5,726.9 416.3,726.4 416.2,726.0 416.1,725.5 415.9,725.1 415.8,724.6 415.7,724.2 415.5,723.7 415.4,723.3 415.2,722.8 415.1,722.4 414.9,721.9 414.8,721.5 414.6,721.0 414.5,720.6 414.4,720.1 414.2,719.7 414.1,719.2 413.9,718.7 413.8,718.3 413.6,717.8 413.5,717.3 413.3,716.9 413.2,716.4 413.0,715.9 412.9,715.5 412.7,715.0 412.5,714.5 412.4,714.0 412.2,713.6 412.1,713.1 411.9,712.6 411.8,712.1 411.6,711.7 411.4,711.2 411.3,710.7 411.1,710.2 411.0,709.7 410.8,709.2 410.6,708.7 410.5,708.2 410.3,707.7 410.1,707.3 410.0,706.8 409.8,706.3 409.6,705.8 409.5,705.3 409.3,704.8 409.1,704.3 408.9,703.8 408.8,703.2 408.6,702.7 408.4,702.2 408.2,701.7 408.1,701.2 407.9,700.7 407.7,700.2 407.5,699.7 407.4,699.1 407.2,698.6 407.0,698.1 406.8,697.6 406.6,697.1 406.4,696.5 406.2,696.0 406.1,695.5 405.9,694.9 405.7,694.4 405.5,693.9 405.3,693.3 405.1,692.8 404.9,692.3 404.7,691.7 404.5,691.2 404.3,690.6 404.1,690.1 403.9,689.5 403.7,689.0 403.5,688.4 403.3,687.9 403.1,687.3 402.9,686.8 402.7,686.2 402.5,685.6 402.3,685.1 402.1,684.5 401.9,684.0 401.7,683.4 401.5,682.8 401.3,682.2 401.0,681.7 400.8,681.1 400.6,680.5 400.4,679.9 400.2,679.4 399.9,678.8 399.7,678.2 399.5,677.6 399.3,677.0 399.1,676.4 398.8,675.8 398.6,675.2 398.4,674.6 398.1,674.0 397.9,673.4 397.7,672.8 397.4,672.2 397.2,671.6 397.0,671.0 396.7,670.4 396.5,669.8 396.2,669.1 396.0,668.5 395.8,667.9 395.5,667.3 395.3,666.7 395.0,666.0 394.8,665.4 394.5,664.8 394.3,664.1 394.0,663.5 393.7,662.9 393.5,662.2 393.2,661.6 393.0,660.9 392.7,660.3 392.4,659.6 392.2,659.0 391.9,658.3 391.6,657.6 391.4,657.0 391.1,656.3 390.8,655.7 390.5,655.0 390.3,654.3 390.0,653.6 389.7,653.0 389.4,652.3 389.1,651.6 388.9,650.9 388.6,650.2 388.3,649.5 388.0,648.8 387.7,648.1 387.4,647.4 387.1,646.7 386.8,646.0 386.5,645.3 386.2,644.6 385.9,643.9 385.6,643.2 385.3,642.5 385.0,641.8 384.7,641.0 384.4,640.3 384.0,639.6 383.7,638.8 383.4,638.1 383.1,637.4 382.8,636.6 382.4,635.9 382.1,635.1 381.8,634.4 381.4,633.6 381.1,632.9 380.8,632.1 380.4,631.3 380.1,630.6 379.8,629.8 379.4,629.0 379.1,628.2 378.7,627.4 378.4,626.7 378.0,625.9 377.7,625.1 377.3,624.3 377.0,623.5 376.6,622.7 376.2,621.9 375.9,621.1 375.5,620.2 375.1,619.4 374.8,618.6 374.4,617.8 374.0,617.0 373.6,616.1 373.2,615.3 372.9,614.4 372.5,613.6 372.1,612.8 371.7,611.9 371.3,611.0 370.9,610.2 370.5,609.3 370.1,608.4 369.7,607.6 369.3,606.7 368.9,605.8 368.5,604.9 368.1,604.0 367.7,603.1 367.3,602.2 366.8,601.3 366.4,600.4 366.0,599.5 365.6,598.6 365.1,597.7 364.7,596.8 364.3,595.8 363.8,594.9 363.4,594.0 363.0,593.0 362.5,592.1 362.1,591.1 361.6,590.1 361.2,589.2 360.7,588.2 360.3,587.2 359.8,586.2 359.4,585.3 358.9,584.3 358.5,583.3 358.0,582.3 357.5,581.3 357.0,580.3 356.6,579.2 356.1,578.2 355.6,577.2 355.1,576.1 354.7,575.1 354.2,574.1 353.7,573.0 353.2,572.0 352.7,570.9 352.2,569.8 351.7,568.7 351.2,567.7 350.7,566.6 350.2,565.5 349.7,564.4 349.2,563.3 348.7,562.2 348.2,561.0 347.7,559.9 347.2,558.8 346.7,557.6 346.2,556.5 345.7,555.3 345.1,554.2 344.6,553.0 344.1,551.8 343.6,550.6 343.0,549.4 342.5,548.2 342.0,547.0 341.5,545.8 340.9,544.6 340.4,543.4 339.9,542.1 339.3,540.9 338.8,539.6 338.2,538.4 337.7,537.1 337.2,535.8 336.6,534.6 336.1,533.3 335.5,532.0 335.0,530.6 334.5,529.3 333.9,528.0 333.4,526.7 332.8,525.3 332.3,524.0 331.7,522.6 331.2,521.2 330.6,519.8 330.1,518.4 329.5,517.0 329.0,515.6 328.4,514.2 327.9,512.8 327.3,511.3 326.8,509.9 326.2,508.4 325.7,506.9 325.1,505.4 324.6,503.9 324.0,502.4 323.5,500.9 322.9,499.4 322.4,497.8 321.8,496.3 321.3,494.7 320.7,493.1 320.2,491.5 319.7,489.9 319.1,488.3 318.6,486.7 318.1,485.0 317.5,483.4 317.0,481.7 316.5,480.0 315.9,478.3 315.4,476.6 314.9,474.9 314.4,473.1 313.8,471.4 313.3,469.6 312.8,467.8 312.3,466.0 311.8,464.2 311.3,462.4 310.8,460.5 310.3,458.7 309.8,456.8 309.3,454.9 308.9,453.0 308.4,451.1 307.9,449.1 307.8,448.6 307.7,448.1 307.6,447.6 307.4,447.1 307.3,446.6 307.2,446.2 307.1,445.7 307.0,445.2 306.9,444.7 306.8,444.2 306.6,443.7 306.5,443.2 306.4,442.7 306.3,442.1 306.2,441.6 306.1,441.1 306.0,440.6 305.8,440.1 305.7,439.6 305.6,439.1 305.5,438.6 305.4,438.1 305.3,437.6 305.2,437.0 305.1,436.5 305.0,436.0 304.9,435.5 304.8,435.0 304.6,434.4 304.5,433.9 304.4,433.4 304.3,432.9 304.2,432.3 304.1,431.8 304.0,431.3 303.9,430.7 303.8,430.2 303.7,429.7 303.6,429.1 303.5,428.6 303.4,428.1 303.3,427.5 303.2,427.0 303.1,426.4 303.0,425.9 302.9,425.4 302.8,424.8 302.7,424.3 302.6,423.7 302.5,423.2 302.4,422.6 302.3,422.1 302.2,421.5 302.1,420.9 302.0,420.4 301.9,419.8 301.8,419.3 301.7,418.7 301.6,418.1 301.5,417.6 301.4,417.0 301.3,416.4 301.2,415.9 301.1,415.3 301.0,414.7 301.0,414.2 300.9,413.6 300.8,413.0 300.7,412.4 300.6,411.9 300.5,411.3 300.4,410.7 300.3,410.1 300.2,409.5 300.2,408.9 300.1,408.3 300.0,407.8 299.9,407.2 299.8,406.6 299.7,406.0 299.7,405.4 299.6,404.8 299.5,404.2 299.4,403.6 299.3,403.0 299.2,402.4 299.2,401.8 299.1,401.2 299.0,400.6 298.9,400.0 298.9,399.3 298.8,398.7 298.7,398.1 298.6,397.5 298.6,396.9 298.5,396.3 298.4,395.6 298.3,395.0 298.3,394.4 298.2,393.8 298.1,393.1 298.1,392.5 298.0,391.9 297.9,391.2 297.8,390.6 297.8,390.0 297.7,389.3 297.7,388.7 297.6,388.0 297.5,387.4 297.5,386.7 297.4,386.1 297.3,385.4 297.3,384.8 297.2,384.1 297.2,383.5 297.1,382.8 297.0,382.2 297.0,381.5 296.9,380.8 296.9,380.2 296.8,379.5 296.8,378.8 296.7,378.2 296.7,377.5 296.6,376.8 296.6,376.1 296.5,375.5 296.5,374.8 296.4,374.1 296.4,373.4 296.3,372.7 296.3,372.0 296.2,371.4 296.2,370.7 296.1,370.0 296.1,369.3 296.1,368.6 296.0,367.9 296.0,367.2 295.9,366.5 295.9,365.8 295.9,365.0 295.8,364.3 295.8,363.6 295.8,362.9 295.7,362.2 295.7,361.5 295.7,360.7 295.6,360.0 295.6,359.3 295.6,358.6 295.5,357.8 295.5,357.1 295.5,356.4 295.5,355.6 295.4,354.9 295.4,354.1 295.4,353.4 295.4,352.6 295.4,351.9 295.4,351.1 295.3,350.4 295.3,349.6 295.3,348.9 295.3,348.1 295.3,347.4 295.3,346.6 295.3,345.8 295.3,345.0 295.2,344.3 295.2,343.5 295.2,342.7 295.2,341.9 295.2,341.1 295.2,340.4 295.2,339.6 295.2,338.8 295.2,338.0 295.2,337.2 295.2,336.4 295.2,335.6 295.2,334.8 295.3,334.0 295.3,333.2 295.3,332.4 295.3,331.5 295.3,330.7 295.3,329.9 295.3,329.1 295.4,328.3 295.4,327.4 295.4,326.6 295.4,325.8 295.4,324.9 295.5,324.1 295.5,323.2 295.5,322.4 295.5,321.5 295.6,320.7 295.6,319.8 295.6,319.0 295.7,318.1 295.7,317.2 295.7,316.4 295.8,315.5 295.8,314.6 295.9,313.8 295.9,312.9 296.0,312.0 296.0,311.1 296.1,310.2 296.1,309.3 296.2,308.4 296.2,307.5 296.3,306.6 296.3,305.7 296.4,304.8 296.4,303.9 296.5,303.0 296.6,302.1 296.6,301.2 296.7,300.2 296.8,299.3 296.8,298.4 296.9,297.4 297.0,296.5 297.1,295.6 297.1,294.6 297.2,293.7 297.3,292.7 297.4,291.8 297.5,290.8 297.5,289.8 297.6,288.9 297.7,287.9 297.8,286.9 297.9,286.0 298.0,285.0 298.1,284.0 298.2,283.0 298.3,282.0 298.4,281.0 298.5,280.0 298.6,279.0 298.7,278.0 298.9,277.0 299.0,276.0 299.1,275.0 299.2,273.9 299.3,272.9 299.4,271.9 299.6,270.8 299.7,269.8 299.8,268.7 300.0,267.7 300.1,266.6 300.2,265.6 300.4,264.5 300.5,263.5 300.7,262.4 300.8,261.3 301.0,260.2 301.1,259.2 301.3,258.1 301.4,257.0 301.6,255.9 301.7,254.8 301.9,253.7 302.1,252.6 302.2,251.4 302.4,250.3 302.6,249.2 302.8,248.1 302.9,246.9 303.1,245.8 303.3,244.7 303.5,243.5 303.7,242.4 303.9,241.2 304.1,240.0 304.3,238.9 304.5,237.7 304.7,236.5 304.9,235.3 305.1,234.1 305.3,232.9 305.5,231.7 305.8,230.5 306.0,229.3 306.2,228.1 306.4,226.9 306.7,225.7 306.9,224.4 307.2,223.2 307.4,221.9 307.6,220.7 307.9,219.4 308.1,218.2 308.4,216.9 308.7,215.6 308.9,214.4 309.2,213.1 309.5,211.8 309.7,210.5 310.0,209.2 310.3,207.9 310.6,206.6 310.9,205.3 311.2,203.9 311.4,202.6 311.7,201.3 312.1,199.9 312.4,198.6 312.7,197.2 313.0,195.8 313.3,194.5 313.6,193.1 314.0,191.7 314.3,190.3 314.6,188.9 315.0,187.5 315.3,186.1 315.7,184.7 316.0,183.2 316.4,181.8 316.7,180.4 317.1,178.9 317.5,177.5 317.8,176.0 318.2,174.5 318.6,173.0 319.0,171.6 319.4,170.1 319.8,168.6 320.2,167.0 320.6,165.5 321.0,164.0 321.4,162.5 321.8,160.9 322.3,159.4 322.7,157.8 323.1,156.3 323.6,154.7 324.0,153.1 324.5,151.5 325.0,149.9 325.4,148.3 325.9,146.7 326.4,145.0 326.8,143.4 327.3,141.8 327.8,140.1 328.3,138.4 328.8,136.8 329.3,135.1 329.9,133.4 330.4,131.7 330.9,130.0 331.5,128.3 332.0,126.5 332.5,124.8 333.1,123.0 333.7,121.3 334.2,119.5 334.8,117.7 335.4,115.9 336.0,114.1 336.6,112.3 337.2,110.5 337.8,108.6 338.4,106.8 339.0,104.9 339.7,103.1 340.3,101.2 341.0,99.3 341.6,97.4 342.3,95.5 343.0,93.6 343.6,91.6 344.3,89.7 345.0,87.7 345.7,85.7 346.4,83.7 347.2,81.7 347.9,79.7 348.6,77.7 349.4,75.6 350.1,73.6 350.9,71.5 351.7,69.4 352.4,67.3 353.2,65.2 354.0,63.1 354.9,61.0 355.7,58.8 356.5,56.7 357.4,54.5 358.2,52.3 359.1,50.1" stroke="#000080"/>
<polyline points="481.6,751.8 481.6,751.4 481.6,751.0 481.5,750.7 481.5,750.3 481.4,749.9 481.4,749.5 481.4,749.1 481.3,748.7 481.3,748.4 481.3,748.0 481.2,747.6 481.2,747.2 481.2,746.8 481.1,746.4 481.1,746.0 481.1,745.6 481.0,745.2 481.0,744.8 481.0,744.4 480.9,744.0 480.9,743.6 480.8,743.2 480.8,742.8 480.8,742.4 480.7,742.0 480.7,741.6 480.7,741.2 480.6,740.8 480.6,740.4 480.6,740.0 480.5,739.6 480.5,739.2 480.4,738.8 480.4,738.4 480.4,738.0 480.3,737.5 480.3,737.1 480.3,736.7 480.2,736.3 480.2,735.9 480.1,735.5 480.1,735.0 480.1,734.6 480.0,734.2 480.0,733.8 480.0,733.3 479.9,732.9 479.9,732.5 479.8,732.1 479.8,731.6 479.8,731.2 479.7,730.8 479.7,730.4 479.6,729.9 479.6,729.5 479.6,729.1 479.5,728.6 479.5,728.2 479.4,727.7 479.4,727.3 479.4,726.9 479.3,726.4 479.3,726.0 479.2,725.5 479.2,725.1 479.2,724.6 479.1,724.2 479.1,723.7 479.0,723.3 479.0,722.8 479.0,722.4 478.9,721.9 478.9,721.5 478.8,721.0 478.8,720.6 478.7,720.1 478.7,719.7 478.7,719.2 478.6,718.7 478.6,718.3 478.5,717.8 478.5,717.3 478.4,716.9 478.4,716.4 478.4,715.9 478.3,715.5 478.3,715.0 478.2,714.5 478.2,714.0 478.1,713.6 478.1,713.1 478.1,712.6 478.0,712.1 478.0,711.7 477.9,711.2 477.9,710.7 477.8,710.2 477.8,709.7 477.7,709.2 477.7,708.7 477.6,708.2 477.6,707.7 477.5,707.3 477.5,706.8 477.5,706.3 477.4,705.8 477.4,705.3 477.3,704.8 477.3,704.3 477.2,703.8 477.2,703.2 477.1,702.7 477.1,702.2 477.0,701.7 477.0,701.2 476.9,700.7 476.9,700.2 476.8,699.7 476.8,699.1 476.7,698.6 476.7,698.1 476.6,697.6 476.6,697.1 476.5,696.5 476.5,696.0 476.4,695.5 476.4,694.9 476.3,694.4 476.3,693.9 476.2,693.3 476.2,692.8 476.1,692.3 476.1,691.7 476.0,691.2 475.9,690.6 475.9,690.1 475.8,689.5 475.8,689.0 475.7,688.4 475.7,687.9 475.6,687.3 475.6,686.8 475.5,686.2 475.5,685.6 475.4,685.1 475.3,684.5 475.3,684.0 475.2,683.4 475.2,682.8 475.1,682.2 475.0,681.7 475.0,681.1 474.9,680.5 474.9,679.9 474.8,679.4 474.8,678.8 474.7,678.2 474.6,677.6 474.6,677.0 474.5,676.4 474.4,675.8 474.4,675.2 474.3,674.6 474.3,674.0 474.2,673.4 474.1,672.8 474.1,672.2 474.0,671.6 473.9,671.0 473.9,670.4 473.8,669.8 473.7,669.1 473.7,668.5 473.6,667.9 473.5,667.3 473.5,666.7 473.4,666.0 473.3,665.4 473.3,664.8 473.2,664.1 473.1,663.5 473.0,662.9 473.0,662.2 472.9,661.6 472.8,660.9 472.8,660.3 472.7,659.6 472.6,659.0 472.5,658.3 472.5,657.6 472.4,657.0 472.3,656.3 472.2,655.7 472.2,655.0 472.1,654.3 472.0,653.6 471.9,653.0 471.8,652.3 471.8,651.6 471.7,650.9 471.6,650.2 471.5,649.5 471.4,648.8 471.4,648.1 471.3,647.4 471.2,646.7 471.1,646.0 471.0,645.3 470.9,644.6 470.8,643.9 470.8,643.2 470.7,642.5 470.6,641.8 470.5,641.0 470.4,640.3 470.3,639.6 470.2,638.8 470.1,638.1 470.0,637.4 469.9,636.6 469.8,635.9 469.7,635.1 469.6,634.4 469.5,633.6 469.4,632.9 469.3,632.1 469.2,631.3 469.1,630.6 469.0,629.8 468.9,629.0 468.8,628.2 468.7,627.4 468.6,626.7 468.5,625.9 468.4,625.1 468.3,624.3 468.2,623.5 468.1,622.7 468.0,621.9 467.8,621.1 467.7,620.2 467.6,619.4 467.5,618.6 467.4,617.8 467.3,617.0 467.1,616.1 467.0,615.3 466.9,614.4 466.8,613.6 466.6,612.8 466.5,611.9 466.4,611.0 466.3,610.2 466.1,609.3 466.0,608.4 465.9,607.6 465.7,606.7 465.6,605.8 465.5,604.9 465.3,604.0 465.2,603.1 465.0,602.2 464.9,601.3 464.8,600.4 464.6,599.5 464.5,598.6 464.3,597.7 464.2,596.8 464.0,595.8 463.9,594.9 463.7,594.0 463.5,593.0 463.4,592.1 463.2,591.1 463.1,590.1 462.9,589.2 462.7,588.2 462.6,587.2 462.4,586.2 462.2,585.3 462.0,584.3 461.9,583.3 461.7,582.3 461.5,581.3 461.3,580.3 461.2,579.2 461.0,578.2 460.8,577.2 460.6,576.1 460.4,575.1 460.2,574.1 460.0,573.0 459.8,572.0 459.6,570.9 459.4,569.8 459.2,568.7 459.0,567.7 458.8,566.6 458.6,565.5 458.4,564.4 458.1,563.3 457.9,562.2 457.7,561.0 457.5,559.9 457.3,558.8 457.0,557.6 456.8,556.5 456.6,555.3 456.3,554.2 456.1,553.0 455.8,551.8 455.6,550.6 455.3,549.4 455.1,548.2 454.8,547.0 454.6,545.8 454.3,544.6 454.0,543.4 453.8,542.1 453.5,540.9 453.2,539.6 453.0,538.4 452.7,537.1 452.4,535.8 452.1,534.6 451.8,533.3 451.5,532.0 451.2,530.6 450.9,529.3 450.6,528.0 450.3,526.7 450.0,525.3 449.7,524.0 449.4,522.6 449.1,521.2 448.8,519.8 448.4,518.4 448.1,517.0 447.8,515.6 447.4,514.2 447.1,512.8 446.7,511.3 446.4,509.9 446.1,508.4 445.7,506.9 445.3,505.4 445.0,503.9 444.6,502.4 444.2,500.9 443.9,499.4 443.5,497.8 443.1,496.3 442.7,494.7 442.4,493.1 442.0,491.5 441.6,489.9 441.2,488.3 440.8,486.7 440.4,485.0 440.0,483.4 439.6,481.7 439.1,480.0 438.7,478.3 438.3,476.6 437.9,474.9 437.5,473.1 437.0,471.4 436.6,469.6 436.2,467.8 435.7,466.0 435.3,464.2 434.9,462.4 434.4,460.5 434.0,458.7 433.5,456.8 433.1,454.9 432.6,453.0 432.2,451.1 431.7,449.1 431.6,448.6 431.5,448.1 431.4,447.6 431.3,447.1 431.1,446.6 431.0,446.2 430.9,445.7 430.8,445.2 430.7,444.7 430.6,444.2 430.4,443.7 430.3,443.2 430.2,442.7 430.1,442.1 430.0,441.6 429.9,441.1 429.8,440.6 429.6,440.1 429.5,439.6 429.4,439.1 429.3,438.6 429.2,438.1 429.1,437.6 429.0,437.0 428.8,436.5 428.7,436.0 428.6,435.5 428.5,435.0 428.4,434.4 428.3,433.9 428.1,433.4 428.0,432.9 427.9,432.3 427.8,431.8 427.7,431.3 427.6,430.7 427.4,430.2 427.3,429.7 427.2,429.1 427.1,428.6 427.0,428.1 426.9,427.5 426.8,427.0 426.6,426.4 426.5,425.9 426.4,425.4 426.3,424.8 426.2,424.3 426.1,423.7 425.9,423.2 425.8,422.6 425.7,422.1 425.6,421.5 425.5,420.9 425.4,420.4 425.3,419.8 425.1,419.3 425.0,418.7 424.9,418.1 424.8,417.6 424.7,417.0 424.6,416.4 424.5,415.9 424.3,415.3 424.2,414.7 424.1,414.2 424.0,413.6 423.9,413.0 423.8,412.4 423.7,411.9 423.5,411.3 423.4,410.7 423.3,410.1 423.2,409.5 423.1,408.9 423.0,408.3 422.9,407.8 422.8,407.2 422.6,406.6 422.5,406.0 422.4,405.4 422.3,404.8 422.2,404.2 422.1,403.6 422.0,403.0 421.9,402.4 421.8,401.8 421.6,401.2 421.5,400.6 421.4,400.0 421.3,399.3 421.2,398.7 421.1,398.1 421.0,397.5 420.9,396.9 420.8,396.3 420.7,395.6 420.6,395.0 420.4,394.4 420.3,393.8 420.2,393.1 420.1,392.5 420.0,391.9 419.9,391.2 419.8,390.6 419.7,390.0 419.6,389.3 419.5,388.7 419.4,388.0 419.3,387.4 419.2,386.7 419.1,386.1 419.0,385.4 418.9,384.8 418.8,384.1 418.7,383.5 418.6,382.8 418.5,382.2 418.4,381.5 418.3,380.8 418.2,380.2 418.1,379.5 418.0,378.8 417.9,378.2 417.8,377.5 417.7,376.8 417.6,376.1 417.5,375.5 417.4,374.8 417.3,374.1 417.2,373.4 417.1,372.7 417.0,372.0 416.9,371.4 416.8,370.7 416.7,370.0 416.6,369.3 416.5,368.6 416.5,367.9 416.4,367.2 416.3,366.5 416.2,365.8 416.1,365.0 416.0,364.3 415.9,363.6 415.8,362.9 415.7,362.2 415.7,361.5 415.6,360.7 415.5,360.0 415.4,359.3 415.3,358.6 415.2,357.8 415.2,357.1 415.1,356.4 415.0,355.6 414.9,354.9 414.8,354.1 414.8,353.4 414.7,352.6 414.6,351.9 414.5,351.1 414.5,350.4 414.4,349.6 414.3,348.9 414.2,348.1 414.2,347.4 414.1,346.6 414.0,345.8 413.9,345.0 413.9,344.3 413.8,343.5 413.7,342.7 413.7,341.9 413.6,341.1 413.5,340.4 413.5,339.6 413.4,338.8 413.4,338.0 413.3,337.2 413.2,336.4 413.2,335.6 413.1,334.8 413.1,334.0 413.0,333.2 412.9,332.4 412.9,331.5 412.8,330.7 412.8,329.9 412.7,329.1 412.7,328.3 412.6,327.4 412.6,326.6 412.5,325.8 412.5,324.9 412.4,324.1 412.4,323.2 412.4,322.4 412.3,321.5 412.3,320.7 412.2,319.8 412.2,319.0 412.2,318.1 412.1,317.2 412.1,316.4 412.1,315.5 412.0,314.6 412.0,313.8 412.0,312.9 411.9,312.0 411.9,311.1 411.9,310.2 411.9,309.3 411.8,308.4 411.8,307.5 411.8,306.6 411.8,305.7 411.7,304.8 411.7,303.9 411.7,303.0 411.7,302.1 411.7,301.2 411.7,300.2 411.7,299.3 411.7,298.4 411.6,297.4 411.6,296.5 411.6,295.6 411.6,294.6 411.6,293.7 411.6,292.7 411.6,291.8 411.6,290.8 411.6,289.8 411.7,288.9 411.7,287.9 411.7,286.9 411.7,286.0 411.7,285.0 411.7,284.0 411.7,283.0 411.8,282.0 411.8,281.0 411.8,280.0 411.8,279.0 411.8,278.0 411.9,277.0 411.9,276.0 411.9,275.0 412.0,273.9 412.0,272.9 412.0,271.9 412.1,270.8 412.1,269.8 412.2,268.7 412.2,267.7 412.3,266.6 412.3,265.6 412.4,264.5 412.4,263.5 412.5,262.4 412.5,261.3 412.6,260.2 412.6,259.2 412.7,258.1 412.8,257.0 412.8,255.9 412.9,254.8 413.0,253.7 413.1,252.6 413.1,251.4 413.2,250.3 413.3,249.2 413.4,248.1 413.5,246.9 413.6,245.8 413.7,244.7 413.7,243.5 413.8,242.4 413.9,241.2 414.0,240.0 414.1,238.9 414.3,237.7 414.4,236.5 414.5,235.3 414.6,234.1 414.7,232.9 414.8,231.7 415.0,230.5 415.1,229.3 415.2,228.1 415.3,226.9 415.5,225.7 415.6,224.4 415.8,223.2 415.9,221.9 416.0,220.7 416.2,219.4 416.3,218.2 416.5,216.9 416.7,215.6 416.8,214.4 417.0,213.1 417.2,211.8 417.3,210.5 417.5,209.2 417.7,207.9 417.9,206.6 418.0,205.3 418.2,203.9 418.4,202.6 418.6,201.3 418.8,199.9 419.0,198.6 419.2,197.2 419.4,195.8 419.7,194.5 419.9,193.1 420.1,191.7 420.3,190.3 420.5,188.9 420.8,187.5 421.0,186.1 421.3,184.7 421.5,183.2 421.7,181.8 422.0,180.4 422.3,178.9 422.5,177.5 422.8,176.0 423.1,174.5 423.3,173.0 423.6,171.6 423.9,170.1 424.2,168.6 424.5,167.0 424.8,165.5 425.1,164.0 425.4,162.5 425.7,160.9 426.0,159.4 426.3,157.8 426.6,156.3 427.0,154.7 427.3,153.1 427.6,151.5 428.0,149.9 428.3,148.3 428.7,146.7 429.1,145.0 429.4,143.4 429.8,141.8 430.2,140.1 430.5,138.4 430.9,136.8 431.3,135.1 431.7,133.4 432.1,131.7 432.5,130.0 433.0,128.3 433.4,126.5 433.8,124.8 434.2,123.0 434.7,121.3 435.1,119.5 435.6,117.7 436.1,115.9 436.5,114.1 437.0,112.3 437.5,110.5 438.0,108.6 438.5,106.8 439.0,104.9 439.5,103.1 440.0,101.2 440.5,99.3 441.0,97.4 441.6,95.5 442.1,93.6 442.7,91.6 443.2,89.7 443.8,87.7 444.4,85.7 444.9,83.7 445.5,81.7 446.1,79.7 446.7,77.7 447.4,75.6 448.0,73.6 448.6,71.5 449.3,69.4 449.9,67.3 450.6,65.2 451.2,63.1 451.9,61.0 452.6,58.8 453.3,56.7 454.0,54.5 454.7,52.3 455.4,50.1" stroke="#000080"/>
<polyline points="539.9,751.8 540.0,751.4 540.0,751.0 540.0,750.7 540.0,750.3 540.0,749.9 540.1,749.5 540.1,749.1 540.1,748.7 540.1,748.4 540.1,748.0 540.2,747.6 540.2,747.2 540.2,746.8 540.2,746.4 540.3,746.0 540.3,745.6 540.3,745.2 540.3,744.8 540.3,744.4 540.4,744.0 540.4,743.6 540.4,743.2 540.4,742.8 540.5,742.4 540.5,742.0 540.5,741.6 540.5,741.2 540.6,740.8 540.6,740.4 540.6,740.0 540.6,739.6 540.7,739.2 540.7,738.8 540.7,738.4 540.7,738.0 540.8,737.5 540.8,737.1 540.8,736.7 540.9,736.3 540.9,735.9 540.9,735.5 540.9,735.0 541.0,734.6 541.0,734.2 541.0,733.8 541.0,733.3 541.1,732.9 541.1,732.5 541.1,732.1 541.2,731.6 541.2,731.2 541.2,730.8 541.3,730.4 541.3,729.9 541.3,729.5 541.3,729.1 541.4,728.6 541.4,728.2 541.4,727.7 541.5,727.3 541.5,726.9 541.5,726.4 541.6,726.0 541.6,725.5 541.6,725.1 541.7,724.6 541.7,724.2 541.7,723.7 541.8,723.3 541.8,722.8 541.8,722.4 541.9,721.9 541.9,721.5 541.9,721.0 542.0,720.6 542.0,720.1 542.0,719.7 542.1,719.2 542.1,718.7 542.1,718.3 542.2,717.8 542.2,717.3 542.3,716.9 542.3,716.4 542.3,715.9 542.4,715.5 542.4,715.0 542.4,714.5 542.5,714.0 542.5,713.6 542.6,713.1 542.6,712.6 542.6,712.1 542.7,711.7 542.7,711.2 542.8,710.7 542.8,710.2 542.8,709.7 542.9,709.2 542.9,708.7 543.0,708.2 543.0,707.7 543.0,707.3 543.1,706.8 543.1,706.3 543.2,705.8 543.2,705.3 543.3,704.8 543.3,704.3 543.4,703.8 543.4,703.2 543.4,702.7 543.5,702.2 543.5,701.7 543.6,701.2 543.6,700.7 543.7,700.2 543.7,699.7 543.8,699.1 543.8,698.6 543.9,698.1 543.9,697.6 544.0,697.1 544.0,696.5 544.1,696.0 544.1,695.5 544.2,694.9 544.2,694.4 544.3,693.9 544.3,693.3 544.4,692.8 544.4,692.3 544.5,691.7 544.5,691.2 544.6,690.6 544.6,690.1 544.7,689.5 544.7,689.0 544.8,688.4 544.8,687.9 544.9,687.3 544.9,686.8 545.0,686.2 545.1,685.6 545.1,685.1 545.2,684.5 545.2,684.0 545.3,683.4 545.3,682.8 545.4,682.2 545.5,681.7 545.5,681.1 545.6,680.5 545.6,679.9 545.7,679.4 545.8,678.8 545.8,678.2 545.9,677.6 545.9,677.0 546.0,676.4 546.1,675.8 546.1,675.2 546.2,674.6 546.3,674.0 546.3,673.4 546.4,672.8 546.4,672.2 546.5,671.6 546.6,671.0 546.6,670.4 546.7,669.8 546.8,669.1 546.8,668.5 546.9,667.9 547.0,667.3 547.1,666.7 547.1,666.0 547.2,665.4 547.3,664.8 547.3,664.1 547.4,663.5 547.5,662.9 547.5,662.2 547.6,661.6 547.7,660.9 547.8,660.3 547.8,659.6 547.9,659.0 548.0,658.3 548.1,657.6 548.1,657.0 548.2,656.3 548.3,655.7 548.4,655.0 548.5,654.3 548.5,653.6 548.6,653.0 548.7,652.3 548.8,651.6 548.9,650.9 548.9,650.2 549.0,649.5 549.1,648.8 549.2,648.1 549.3,647.4 549.4,646.7 549.4,646.0 549.5,645.3 549.6,644.6 549.7,643.9 549.8,643.2 549.9,642.5 550.0,641.8 550.1,641.0 550.1,640.3 550.2,639.6 550.3,638.8 550.4,638.1 550.5,637.4 550.6,636.6 550.7,635.9 550.8,635.1 550.9,634.4 551.0,633.6 551.1,632.9 551.2,632.1 551.3,631.3 551.4,630.6 551.5,629.8 551.6,629.0 551.7,628.2 551.8,627.4 551.9,626.7 552.0,625.9 552.1,625.1 552.2,624.3 552.3,623.5 552.4,622.7 552.5,621.9 552.6,621.1 552.7,620.2 552.8,619.4 552.9,618.6 553.0,617.8 553.1,617.0 553.2,616.1 553.4,615.3 553.5,614.4 553.6,613.6 553.7,612.8 553.8,611.9 553.9,611.0 554.0,610.2 554.2,609.3 554.3,608.4 554.4,607.6 554.5,606.7 554.6,605.8 554.7,604.9 554.9,604.0 555.0,603.1 555.1,602.2 555.2,601.3 555.4,600.4 555.5,599.5 555.6,598.6 555.7,597.7 555.9,596.8 556.0,595.8 556.1,594.9 556.3,594.0 556.4,593.0 556.5,592.1 556.6,591.1 556.8,590.1 556.9,589.2 557.1,588.2 557.2,587.2 557.3,586.2 557.5,585.3 557.6,584.3 557.7,583.3 557.9,582.3 558.0,581.3 558.2,580.3 558.3,579.2 558.4,578.2 558.6,577.2 558.7,576.1 558.9,575.1 559.0,574.1 559.2,573.0 559.3,572.0 559.5,570.9 559.6,569.8 559.8,568.7 559.9,567.7 560.1,566.6 560.2,565.5 560.4,564.4 560.6,563.3 560.7,562.2 560.9,561.0 561.0,559.9 561.2,558.8 561.4,557.6 561.5,556.5 561.7,555.3 561.9,554.2 562.0,553.0 562.2,551.8 562.4,550.6 562.5,549.4 562.7,548.2 562.9,547.0 563.0,545.8 563.2,544.6 563.4,543.4 563.6,542.1 563.7,540.9 563.9,539.6 564.1,538.4 564.3,537.1 564.4,535.8 564.6,534.6 564.8,533.3 565.0,532.0 565.2,530.6 565.3,529.3 565.5,528.0 565.7,526.7 565.9,525.3 566.1,524.0 566.3,522.6 566.5,521.2 566.7,519.8 566.9,518.4 567.0,517.0 567.2,515.6 567.4,514.2 567.6,512.8 567.8,511.3 568.0,509.9 568.2,508.4 568.4,506.9 568.6,505.4 568.8,503.9 569.0,502.4 569.2,500.9 569.4,499.4 569.6,497.8 569.8,496.3 570.0,494.7 570.2,493.1 570.4,491.5 570.6,489.9 570.9,488.3 571.1,486.7 571.3,485.0 571.5,483.4 571.7,481.7 571.9,480.0 572.1,478.3 572.3,476.6 572.5,474.9 572.7,473.1 572.9,471.4 573.2,469.6 573.4,467.8 573.6,466.0 573.8,464.2 574.0,462.4 574.2,460.5 574.4,458.7 574.6,456.8 574.8,454.9 575.1,453.0 575.3,451.1 575.5,449.1 575.5,448.6 575.6,448.1 575.6,447.6 575.7,447.1 575.7,446.6 575.8,446.2 575.8,445.7 575.9,445.2 576.0,444.7 576.0,444.2 576.1,443.7 576.1,443.2 576.2,442.7 576.2,442.1 576.3,441.6 576.3,441.1 576.4,440.6 576.4,440.1 576.5,439.6 576.5,439.1 576.6,438.6 576.6,438.1 576.7,437.6 576.7,437.0 576.8,436.5 576.8,436.0 576.9,435.5 576.9,435.0 577.0,434.4 577.0,433.9 577.1,433.4 577.1,432.9 577.2,432.3 577.3,431.8 577.3,431.3 577.4,430.7 577.4,430.2 577.5,429.7 577.5,429.1 577.6,428.6 577.6,428.1 577.7,427.5 577.7,427.0 577.8,426.4 577.8,425.9 577.9,425.4 577.9,424.8 578.0,424.3 578.0,423.7 578.1,423.2 578.1,422.6 578.2,422.1 578.2,421.5 578.3,420.9 578.3,420.4 578.4,419.8 578.4,419.3 578.5,418.7 578.5,418.1 578.6,417.6 578.6,417.0 578.7,416.4 578.7,415.9 578.8,415.3 578.8,414.7 578.9,414.2 578.9,413.6 579.0,413.0 579.0,412.4 579.1,411.9 579.1,411.3 579.2,410.7 579.2,410.1 579.2,409.5 579.3,408.9 579.3,408.3 579.4,407.8 579.4,407.2 579.5,406.6 579.5,406.0 579.6,405.4 579.6,404.8 579.7,404.2 579.7,403.6 579.8,403.0 579.8,402.4 579.9,401.8 579.9,401.2 580.0,400.6 580.0,400.0 580.0,399.3 580.1,398.7 580.1,398.1 580.2,397.5 580.2,396.9 580.3,396.3 580.3,395.6 580.4,395.0 580.4,394.4 580.5,393.8 580.5,393.1 580.5,392.5 580.6,391.9 580.6,391.2 580.7,390.6 580.7,390.0 580.8,389.3 580.8,388.7 580.9,388.0 580.9,387.4 580.9,386.7 581.0,386.1 581.0,385.4 581.1,384.8 581.1,384.1 581.2,383.5 581.2,382.8 581.2,382.2 581.3,381.5 581.3,380.8 581.4,380.2 581.4,379.5 581.5,378.8 581.5,378.2 581.5,377.5 581.6,376.8 581.6,376.1 581.7,375.5 581.7,374.8 581.7,374.1 581.8,373.4 581.8,372.7 581.9,372.0 581.9,371.4 581.9,370.7 582.0,370.0 582.0,369.3 582.0,368.6 582.1,367.9 582.1,367.2 582.2,366.5 582.2,365.8 582.2,365.0 582.3,364.3 582.3,363.6 582.4,362.9 582.4,362.2 582.4,361.5 582.5,360.7 582.5,360.0 582.5,359.3 582.6,358.6 582.6,357.8 582.6,357.1 582.7,356.4 582.7,355.6 582.7,354.9 582.8,354.1 582.8,353.4 582.9,352.6 582.9,351.9 582.9,351.1 583.0,350.4 583.0,349.6 583.0,348.9 583.1,348.1 583.1,347.4 583.1,346.6 583.2,345.8 583.2,345.0 583.2,344.3 583.3,343.5 583.3,342.7 583.3,341.9 583.3,341.1 583.4,340.4 583.4,339.6 583.4,338.8 583.5,338.0 583.5,337.2 583.5,336.4 583.6,335.6 583.6,334.8 583.6,334.0 583.7,333.2 583.7,332.4 583.7,331.5 583.7,330.7 583.8,329.9 583.8,329.1 583.8,328.3 583.9,327.4 583.9,326.6 583.9,325.8 583.9,324.9 584.0,324.1 584.0,323.2 584.0,322.4 584.1,321.5 584.1,320.7 584.1,319.8 584.1,319.0 584.2,318.1 584.2,317.2 584.2,316.4 584.3,315.5 584.3,314.6 584.3,313.8 584.3,312.9 584.4,312.0 584.4,311.1 584.4,310.2 584.4,309.3 584.5,308.4 584.5,307.5 584.5,306.6 584.6,305.7 584.6,304.8 584.6,303.9 584.6,303.0 584.7,302.1 584.7,301.2 584.7,300.2 584.7,299.3 584.8,298.4 584.8,297.4 584.8,296.5 584.9,295.6 584.9,294.6 584.9,293.7 584.9,292.7 585.0,291.8 585.0,290.8 585.0,289.8 585.1,288.9 585.1,287.9 585.1,286.9 585.1,286.0 585.2,285.0 585.2,284.0 585.2,283.0 585.3,282.0 585.3,281.0 585.3,280.0 585.3,279.0 585.4,278.0 585.4,277.0 585.4,276.0 585.5,275.0 585.5,273.9 585.5,272.9 585.6,271.9 585.6,270.8 585.6,269.8 585.7,268.7 585.7,267.7 585.7,266.6 585.8,265.6 585.8,264.5 585.8,263.5 585.9,262.4 585.9,261.3 586.0,260.2 586.0,259.2 586.0,258.1 586.1,257.0 586.1,255.9 586.2,254.8 586.2,253.7 586.2,252.6 586.3,251.4 586.3,250.3 586.4,249.2 586.4,248.1 586.5,246.9 586.5,245.8 586.6,244.7 586.6,243.5 586.7,242.4 586.7,241.2 586.8,240.0 586.8,238.9 586.9,237.7 586.9,236.5 587.0,235.3 587.0,234.1 587.1,232.9 587.2,231.7 587.2,230.5 587.3,229.3 587.3,228.1 587.4,226.9 587.5,225.7 587.5,224.4 587.6,223.2 587.7,221.9 587.8,220.7 587.8,219.4 587.9,218.2 588.0,216.9 588.1,215.6 588.1,214.4 588.2,213.1 588.3,211.8 588.4,210.5 588.5,209.2 588.6,207.9 588.6,206.6 588.7,205.3 588.8,203.9 588.9,202.6 589.0,201.3 589.1,199.9 589.2,198.6 589.3,197.2 589.4,195.8 589.5,194.5 589.6,193.1 589.8,191.7 589.9,190.3 590.0,188.9 590.1,187.5 590.2,186.1 590.4,184.7 590.5,183.2 590.6,181.8 590.7,180.4 590.9,178.9 591.0,177.5 591.2,176.0 591.3,174.5 591.5,173.0 591.6,171.6 591.8,170.1 591.9,168.6 592.1,167.0 592.2,165.5 592.4,164.0 592.6,162.5 592.7,160.9 592.9,159.4 593.1,157.8 593.3,156.3 593.5,154.7 593.6,153.1 593.8,151.5 594.0,149.9 594.2,148.3 594.4,146.7 594.7,145.0 594.9,143.4 595.1,141.8 595.3,140.1 595.5,138.4 595.8,136.8 596.0,135.1 596.2,133.4 596.5,131.7 596.7,130.0 597.0,128.3 597.2,126.5 597.5,124.8 597.8,123.0 598.0,121.3 598.3,119.5 598.6,117.7 598.9,115.9 599.2,114.1 599.5,112.3 599.8,110.5 600.1,108.6 600.4,106.8 600.7,104.9 601.0,103.1 601.4,101.2 601.7,99.3 602.1,97.4 602.4,95.5 602.8,93.6 603.1,91.6 603.5,89.7 603.9,87.7 604.3,85.7 604.6,83.7 605.0,81.7 605.4,79.7 605.8,77.7 606.3,75.6 606.7,73.6 607.1,71.5 607.6,69.4 608.0,67.3 608.5,65.2 608.9,63.1 609.4,61.0 609.9,58.8 610.4,56.7 610.9,54.5 611.4,52.3 611.9,50.1" stroke="#000080"/>
<polyline points="598.8,751.8 598.9,751.4 598.9,751.0 599.0,750.7 599.1,750.3 599.1,749.9 599.2,749.5 599.2,749.1 599.3,748.7 599.4,748.4 599.4,748.0 599.5,747.6 599.5,747.2 599.6,746.8 599.6,746.4 599.7,746.0 599.8,745.6 599.8,745.2 599.9,744.8 600.0,744.4 600.0,744.0 600.1,743.6 600.1,743.2 600.2,742.8 600.3,742.4 600.3,742.0 600.4,741.6 600.5,741.2 600.5,740.8 600.6,740.4 600.7,740.0 600.7,739.6 600.8,739.2 600.9,738.8 600.9,738.4 601.0,738.0 601.1,737.5 601.1,737.1 601.2,736.7 601.3,736.3 601.3,735.9 601.4,735.5 601.5,735.0 601.5,734.6 601.6,734.2 601.7,733.8 601.8,733.3 601.8,732.9 601.9,732.5 602.0,732.1 602.0,731.6 602.1,731.2 602.2,730.8 602.3,730.4 602.3,729.9 602.4,729.5 602.5,729.1 602.6,728.6 602.6,728.2 602.7,727.7 602.8,727.3 602.9,726.9 602.9,726.4 603.0,726.0 603.1,725.5 603.2,725.1 603.3,724.6 603.3,724.2 603.4,723.7 603.5,723.3 603.6,722.8 603.7,722.4 603.7,721.9 603.8,721.5 603.9,721.0 604.0,720.6 604.1,720.1 604.2,719.7 604.2,719.2 604.3,718.7 604.4,718.3 604.5,717.8 604.6,717.3 604.7,716.9 604.8,716.4 604.9,715.9 604.9,715.5 605.0,715.0 605.1,714.5 605.2,714.0 605.3,713.6 605.4,713.1 605.5,712.6 605.6,712.1 605.7,711.7 605.8,711.2 605.9,710.7 606.0,710.2 606.0,709.7 606.1,709.2 606.2,708.7 606.3,708.2 606.4,707.7 606.5,707.3 606.6,706.8 606.7,706.3 606.8,705.8 606.9,705.3 607.0,704.8 607.1,704.3 607.2,703.8 607.3,703.2 607.4,702.7 607.5,702.2 607.6,701.7 607.7,701.2 607.9,700.7 608.0,700.2 608.1,699.7 608.2,699.1 608.3,698.6 608.4,698.1 608.5,697.6 608.6,697.1 608.7,696.5 608.8,696.0 608.9,695.5 609.0,694.9 609.2,694.4 609.3,693.9 609.4,693.3 609.5,692.8 609.6,692.3 609.7,691.7 609.9,691.2 610.0,690.6 610.1,690.1 610.2,689.5 610.3,689.0 610.4,688.4 610.6,687.9 610.7,687.3 610.8,686.8 610.9,686.2 611.1,685.6 611.2,685.1 611.3,684.5 611.4,684.0 611.6,683.4 611.7,682.8 611.8,682.2 611.9,681.7 612.1,681.1 612.2,680.5 612.3,679.9 612.5,679.4 612.6,678.8 612.7,678.2 612.9,677.6 613.0,677.0 613.1,676.4 613.3,675.8 613.4,675.2 613.6,674.6 613.7,674.0 613.8,673.4 614.0,672.8 614.1,672.2 614.3,671.6 614.4,671.0 614.6,670.4 614.7,669.8 614.8,669.1 615.0,668.5 615.1,667.9 615.3,667.3 615.4,666.7 615.6,666.0 615.8,665.4 615.9,664.8 616.1,664.1 616.2,663.5 616.4,662.9 616.5,662.2 616.7,661.6 616.8,660.9 617.0,660.3 617.2,659.6 617.3,659.0 617.5,658.3 617.7,657.6 617.8,657.0 618.0,656.3 618.2,655.7 618.3,655.0 618.5,654.3 618.7,653.6 618.8,653.0 619.0,652.3 619.2,651.6 619.4,650.9 619.5,650.2 619.7,649.5 619.9,648.8 620.1,648.1 620.3,647.4 620.5,646.7 620.6,646.0 620.8,645.3 621.0,644.6 621.2,643.9 621.4,643.2 621.6,642.5 621.8,641.8 622.0,641.0 622.2,640.3 622.4,639.6 622.5,638.8 622.7,638.1 622.9,637.4 623.1,636.6 623.3,635.9 623.6,635.1 623.8,634.4 624.0,633.6 624.2,632.9 624.4,632.1 624.6,631.3 624.8,630.6 625.0,629.8 625.2,629.0 625.5,628.2 625.7,627.4 625.9,626.7 626.1,625.9 626.3,625.1 626.6,624.3 626.8,623.5 627.0,622.7 627.2,621.9 627.5,621.1 627.7,620.2 627.9,619.4 628.2,618.6 628.4,617.8 628.7,617.0 628.9,616.1 629.1,615.3 629.4,614.4 629.6,613.6 629.9,612.8 630.1,611.9 630.4,611.0 630.6,610.2 630.9,609.3 631.2,608.4 631.4,607.6 631.7,606.7 631.9,605.8 632.2,604.9 632.5,604.0 632.7,603.1 633.0,602.2 633.3,601.3 633.6,600.4 633.8,599.5 634.1,598.6 634.4,597.7 634.7,596.8 635.0,595.8 635.3,594.9 635.6,594.0 635.9,593.0 636.2,592.1 636.4,591.1 636.7,590.1 637.1,589.2 637.4,588.2 637.7,587.2 638.0,586.2 638.3,585.3 638.6,584.3 638.9,583.3 639.2,582.3 639.6,581.3 639.9,580.3 640.2,579.2 640.5,578.2 640.9,577.2 641.2,576.1 641.5,575.1 641.9,574.1 642.2,573.0 642.6,572.0 642.9,570.9 643.3,569.8 643.6,568.7 644.0,567.7 644.4,566.6 644.7,565.5 645.1,564.4 645.5,563.3 645.8,562.2 646.2,561.0 646.6,559.9 647.0,558.8 647.4,557.6 647.7,556.5 648.1,555.3 648.5,554.2 648.9,553.0 649.3,551.8 649.7,550.6 650.2,549.4 650.6,548.2 651.0,547.0 651.4,545.8 651.8,544.6 652.3,543.4 652.7,542.1 653.1,540.9 653.6,539.6 654.0,538.4 654.5,537.1 654.9,535.8 655.4,534.6 655.8,533.3 656.3,532.0 656.8,530.6 657.2,529.3 657.7,528.0 658.2,526.7 658.7,525.3 659.2,524.0 659.7,522.6 660.2,521.2 660.7,519.8 661.2,518.4 661.7,517.0 662.2,515.6 662.7,514.2 663.3,512.8 663.8,511.3 664.4,509.9 664.9,508.4 665.4,506.9 666.0,505.4 666.6,503.9 667.1,502.4 667.7,500.9 668.3,499.4 668.9,497.8 669.5,496.3 670.1,494.7 670.7,493.1 671.3,491.5 671.9,489.9 672.5,488.3 673.1,486.7 673.8,485.0 674.4,483.4 675.0,481.7 675.7,480.0 676.4,478.3 677.0,476.6 677.7,474.9 678.4,473.1 679.1,471.4 679.8,469.6 680.5,467.8 681.2,466.0 681.9,464.2 682.6,462.4 683.3,460.5 684.1,458.7 684.8,456.8 685.6,454.9 686.4,453.0 687.1,451.1 687.9,449.1 688.1,448.6 688.3,448.1 688.5,447.6 688.7,447.1 688.9,446.6 689.1,446.2 689.3,445.7 689.5,445.2 689.7,444.7 689.9,444.2 690.1,443.7 690.3,443.2 690.5,442.7 690.7,442.1 690.9,441.6 691.1,441.1 691.4,440.6 691.6,440.1 691.8,439.6 692.0,439.1 692.2,438.6 692.4,438.1 692.6,437.6 692.8,437.0 693.0,436.5 693.2,436.0 693.5,435.5 693.7,435.0 693.9,434.4 694.1,433.9 694.3,433.4 694.5,432.9 694.7,432.3 695.0,431.8 695.2,431.3 695.4,430.7 695.6,430.2 695.8,429.7 696.1,429.1 696.3,428.6 696.5,428.1 696.7,427.5 696.9,427.0 697.2,426.4 697.4,425.9 697.6,425.4 697.8,424.8 698.1,424.3 698.3,423.7 698.5,423.2 698.7,422.6 699.0,422.1 699.2,421.5 699.4,420.9 699.7,420.4 699.9,419.8 700.1,419.3 700.4,418.7 700.6,418.1 700.8,417.6 701.1,417.0 701.3,416.4 701.5,415.9 701.8,415.3 702.0,414.7 702.2,414.2 702.5,413.6 702.7,413.0 703.0,412.4 703.2,411.9 703.5,411.3 703.7,410.7 703.9,410.1 704.2,409.5 704.4,408.9 704.7,408.3 704.9,407.8 705.2,407.2 705.4,406.6 705.7,406.0 705.9,405.4 706.2,404.8 706.4,404.2 706.7,403.6 706.9,403.0 707.2,402.4 707.4,401.8 707.7,401.2 707.9,400.6 708.2,400.0 708.5,399.3 708.7,398.7 709.0,398.1 709.2,397.5 709.5,396.9 709.8,396.3 710.0,395.6 710.3,395.0 710.5,394.4 710.8,393.8 711.1,393.1 711.3,392.5 711.6,391.9 711.9,391.2 712.1,390.6 712.4,390.0 712.7,389.3 713.0,388.7 713.2,388.0 713.5,387.4 713.8,386.7 714.1,386.1 714.3,385.4 714.6,384.8 714.9,384.1 715.2,383.5 715.4,382.8 715.7,382.2 716.0,381.5 716.3,380.8 716.6,380.2 716.9,379.5 717.1,378.8 717.4,378.2 717.7,377.5 718.0,376.8 718.3,376.1 718.6,375.5 718.9,374.8 719.2,374.1 719.5,373.4 719.8,372.7 720.0,372.0 720.3,371.4 720.6,370.7 720.9,370.0 721.2,369.3 721.5,368.6 721.8,367.9 722.1,367.2 722.4,366.5 722.7,365.8 723.1,365.0 723.4,364.3 723.7,363.6 724.0,362.9 724.3,362.2 724.6,361.5 724.9,360.7 725.2,360.0 725.5,359.3 725.8,358.6 726.2,357.8 726.5,357.1 726.8,356.4 727.1,355.6 727.4,354.9 727.7,354.1 728.1,353.4 728.4,352.6 728.7,351.9 729.0,351.1 729.4,350.4 729.7,349.6 730.0,348.9 730.4,348.1 730.7,347.4 731.0,346.6 731.3,345.8 731.7,345.0 732.0,344.3 732.4,343.5 732.7,342.7 733.0,341.9 733.4,341.1 733.7,340.4 734.1,339.6 734.4,338.8 734.7,338.0 735.1,337.2 735.4,336.4 735.8,335.6 736.1,334.8 736.5,334.0 736.8,333.2 737.2,332.4 737.5,331.5 737.9,330.7 738.3,329.9 738.6,329.1 739.0,328.3 739.3,327.4 739.7,326.6 740.1,325.8 740.4,324.9 740.8,324.1 741.2,323.2 741.5,322.4 741.9,321.5 742.3,320.7 742.6,319.8 743.0,319.0 743.4,318.1 743.8,317.2 744.1,316.4 744.5,315.5 744.9,314.6 745.3,313.8 745.7,312.9 746.1,312.0 746.4,311.1 746.8,310.2 747.2,309.3 747.6,308.4 748.0,307.5 748.4,306.6 748.8,305.7 749.2,304.8 749.6,303.9 750.0,303.0 750.4,302.1 750.8,301.2 751.2,300.2 751.6,299.3 752.0,298.4 752.4,297.4 752.8,296.5 753.2,295.6 753.7,294.6 754.1,293.7 754.5,292.7 754.9,291.8 755.3,290.8 755.7,289.8 756.2,288.9 756.6,287.9 757.0,286.9 757.4,286.0 757.9,285.0 758.3,284.0 758.7,283.0 759.2,282.0 759.6,281.0 760.0,280.0 760.5,279.0 760.9,278.0 761.4,277.0 761.8,276.0 762.3,275.0 762.7,273.9 763.2,272.9 763.6,271.9 764.1,270.8 764.5,269.8 765.0,268.7 765.4,267.7 765.9,266.6 766.4,265.6 766.8,264.5 767.3,263.5 767.7,262.4 768.2,261.3 768.7,260.2 769.2,259.2 769.6,258.1 770.1,257.0 770.6,255.9 771.1,254.8 771.6,253.7 772.0,252.6 772.5,251.4 773.0,250.3 773.5,249.2 774.0,248.1 774.5,246.9 775.0,245.8 775.5,244.7 776.0,243.5 776.5,242.4 777.0,241.2 777.5,240.0 778.0,238.9 778.5,237.7 779.0,236.5 779.5,235.3 780.0,234.1 780.6,232.9 781.1,231.7 781.6,230.5 782.1,229.3 782.7,228.1 783.2,226.9 783.7,225.7 784.2,224.4 784.8,223.2 785.3,221.9 785.9,220.7 786.4,219.4 786.9,218.2 787.5,216.9 788.0,215.6 788.6,214.4 789.1,213.1 789.7,211.8 790.2,210.5 790.8,209.2 791.4,207.9 791.9,206.6 792.5,205.3 793.1,203.9 793.6,202.6 794.2,201.3 794.8,199.9 795.4,198.6 795.9,197.2 796.5,195.8 797.1,194.5 797.7,193.1 798.3,191.7 798.9,190.3 799.5,188.9 800.1,187.5 800.7,186.1 801.3,184.7 801.9,183.2 802.5,181.8 803.1,180.4 803.7,178.9 804.3,177.5 804.9,176.0 805.5,174.5 806.2,173.0 806.8,171.6 807.4,170.1 808.0,168.6 808.7,167.0 809.3,165.5 809.9,164.0 810.6,162.5 811.2,160.9 811.9,159.4 812.5,157.8 813.2,156.3 813.8,154.7 814.5,153.1 815.1,151.5 815.8,149.9 816.4,148.3 817.1,146.7 817.8,145.0 818.5,143.4 819.1,141.8 819.8,140.1 820.5,138.4 821.2,136.8 821.9,135.1 822.5,133.4 823.2,131.7 823.9,130.0 824.6,128.3 825.3,126.5 826.0,124.8 826.7,123.0 827.4,121.3 828.2,119.5 828.9,117.7 829.6,115.9 830.3,114.1 831.0,112.3 831.8,110.5 832.5,108.6 833.2,106.8 834.0,104.9 834.7,103.1 835.4,101.2 836.2,99.3 836.9,97.4 837.7,95.5 838.4,93.6 839.2,91.6 839.9,89.7 840.7,87.7 841.5,85.7 842.2,83.7 843.0,81.7 843.8,79.7 844.6,77.7 845.3,75.6 846.1,73.6 846.9,71.5 847.7,69.4 848.5,67.3 849.3,65.2 850.1,63.1 850.9,61.0 851.7,58.8 852.5,56.7 853.3,54.5 854.2,52.3 855.0,50.1" stroke="#000080"/>
<polyline points="658.2,751.8 658.3,751.4 658.4,751.0 658.4,750.7 658.5,750.3 658.6,749.9 658.7,749.5 658.8,749.1 658.8,748.7 658.9,748.4 659.0,748.0 659.1,747.6 659.2,747.2 659.2,746.8 659.3,746.4 659.4,746.0 659.5,745.6 659.6,745.2 659.7,744.8 659.7,744.4 659.8,744.0 659.9,743.6 660.0,743.2 660.1,742.8 660.2,742.4 660.2,742.0 660.3,741.6 660.4,741.2 660.5,740.8 660.6,740.4 660.7,740.0 660.8,739.6 660.9,739.2 660.9,738.8 661.0,738.4 661.1,738.0 661.2,737.5 661.3,737.1 661.4,736.7 661.5,736.3 661.6,735.9 661.7,735.5 661.8,735.0 661.9,734.6 662.0,734.2 662.0,733.8 662.1,733.3 662.2,732.9 662.3,732.5 662.4,732.1 662.5,731.6 662.6,731.2 662.7,730.8 662.8,730.4 662.9,729.9 663.0,729.5 663.1,729.1 663.2,728.6 663.3,728.2 663.4,727.7 663.5,727.3 663.6,726.9 663.7,726.4 663.8,726.0 663.9,725.5 664.0,725.1 664.1,724.6 664.3,724.2 664.4,723.7 664.5,723.3 664.6,722.8 664.7,722.4 664.8,721.9 664.9,721.5 665.0,721.0 665.1,720.6 665.2,720.1 665.3,719.7 665.4,719.2 665.6,718.7 665.7,718.3 665.8,717.8 665.9,717.3 666.0,716.9 666.1,716.4 666.2,715.9 666.4,715.5 666.5,715.0 666.6,714.5 666.7,714.0 666.8,713.6 667.0,713.1 667.1,712.6 667.2,712.1 667.3,711.7 667.4,711.2 667.6,710.7 667.7,710.2 667.8,709.7 667.9,709.2 668.1,708.7 668.2,708.2 668.3,707.7 668.4,707.3 668.6,706.8 668.7,706.3 668.8,705.8 669.0,705.3 669.1,704.8 669.2,704.3 669.3,703.8 669.5,703.2 669.6,702.7 669.7,702.2 669.9,701.7 670.0,701.2 670.2,700.7 670.3,700.2 670.4,699.7 670.6,699.1 670.7,698.6 670.8,698.1 671.0,697.6 671.1,697.1 671.3,696.5 671.4,696.0 671.6,695.5 671.7,694.9 671.9,694.4 672.0,693.9 672.1,693.3 672.3,692.8 672.4,692.3 672.6,691.7 672.7,691.2 672.9,690.6 673.1,690.1 673.2,689.5 673.4,689.0 673.5,688.4 673.7,687.9 673.8,687.3 674.0,686.8 674.1,686.2 674.3,685.6 674.5,685.1 674.6,684.5 674.8,684.0 674.9,683.4 675.1,682.8 675.3,682.2 675.4,681.7 675.6,681.1 675.8,680.5 675.9,679.9 676.1,679.4 676.3,678.8 676.5,678.2 676.6,677.6 676.8,677.0 677.0,676.4 677.2,675.8 677.3,675.2 677.5,674.6 677.7,674.0 677.9,673.4 678.1,672.8 678.2,672.2 678.4,671.6 678.6,671.0 678.8,670.4 679.0,669.8 679.2,669.1 679.4,668.5 679.5,667.9 679.7,667.3 679.9,666.7 680.1,666.0 680.3,665.4 680.5,664.8 680.7,664.1 680.9,663.5 681.1,662.9 681.3,662.2 681.5,661.6 681.7,660.9 681.9,660.3 682.1,659.6 682.3,659.0 682.5,658.3 682.8,657.6 683.0,657.0 683.2,656.3 683.4,655.7 683.6,655.0 683.8,654.3 684.0,653.6 684.3,653.0 684.5,652.3 684.7,651.6 684.9,650.9 685.2,650.2 685.4,649.5 685.6,648.8 685.8,648.1 686.1,647.4 686.3,646.7 686.5,646.0 686.8,645.3 687.0,644.6 687.2,643.9 687.5,643.2 687.7,642.5 688.0,641.8 688.2,641.0 688.5,640.3 688.7,639.6 689.0,638.8 689.2,638.1 689.5,637.4 689.7,636.6 690.0,635.9 690.2,635.1 690.5,634.4 690.8,633.6 691.0,632.9 691.3,632.1 691.6,631.3 691.8,630.6 692.1,629.8 692.4,629.0 692.6,628.2 692.9,627.4 693.2,626.7 693.5,625.9 693.8,625.1 694.0,624.3 694.3,623.5 694.6,622.7 694.9,621.9 695.2,621.1 695.5,620.2 695.8,619.4 696.1,618.6 696.4,617.8 696.7,617.0 697.0,616.1 697.3,615.3 697.6,614.4 697.9,613.6 698.2,612.8 698.5,611.9 698.9,611.0 699.2,610.2 699.5,609.3 699.8,608.4 700.2,607.6 700.5,606.7 700.8,605.8 701.2,604.9 701.5,604.0 701.8,603.1 702.2,602.2 702.5,601.3 702.9,600.4 703.2,599.5 703.6,598.6 703.9,597.7 704.3,596.8 704.6,595.8 705.0,594.9 705.4,594.0 705.7,593.0 706.1,592.1 706.5,591.1 706.9,590.1 707.2,589.2 707.6,588.2 708.0,587.2 708.4,586.2 708.8,585.3 709.2,584.3 709.6,583.3 710.0,582.3 710.4,581.3 710.8,580.3 711.2,579.2 711.6,578.2 712.0,577.2 712.5,576.1 712.9,575.1 713.3,574.1 713.8,573.0 714.2,572.0 714.6,570.9 715.1,569.8 715.5,568.7 716.0,567.7 716.4,566.6 716.9,565.5 717.3,564.4 717.8,563.3 718.3,562.2 718.7,561.0 719.2,559.9 719.7,558.8 720.2,557.6 720.7,556.5 721.2,555.3 721.7,554.2 722.2,553.0 722.7,551.8 723.2,550.6 723.7,549.4 724.2,548.2 724.8,547.0 725.3,545.8 725.8,544.6 726.4,543.4 726.9,542.1 727.4,540.9 728.0,539.6 728.6,538.4 729.1,537.1 729.7,535.8 730.3,534.6 730.8,533.3 731.4,532.0 732.0,530.6 732.6,529.3 733.2,528.0 733.8,526.7 734.4,525.3 735.1,524.0 735.7,522.6 736.3,521.2 736.9,519.8 737.6,518.4 738.2,517.0 738.9,515.6 739.5,514.2 740.2,512.8 740.9,511.3 741.6,509.9 742.3,508.4 743.0,506.9 743.7,505.4 744.4,503.9 745.1,502.4 745.8,500.9 746.5,499.4 747.3,497.8 748.0,496.3 748.8,494.7 749.5,493.1 750.3,491.5 751.1,489.9 751.9,488.3 752.7,486.7 753.5,485.0 754.3,483.4 755.1,481.7 755.9,480.0 756.7,478.3 757.6,476.6 758.4,474.9 759.3,473.1 760.2,471.4 761.1,469.6 762.0,467.8 762.9,466.0 763.8,464.2 764.7,462.4 765.6,460.5 766.6,458.7 767.5,456.8 768.5,454.9 769.5,453.0 770.5,451.1 771.5,449.1 771.7,448.6 772.0,448.1 772.2,447.6 772.5,447.1 772.7,446.6 773.0,446.2 773.3,445.7 773.5,445.2 773.8,444.7 774.0,444.2 774.3,443.7 774.5,443.2 774.8,442.7 775.1,442.1 775.3,441.6 775.6,441.1 775.9,440.6 776.1,440.1 776.4,439.6 776.7,439.1 776.9,438.6 777.2,438.1 777.5,437.6 777.7,437.0 778.0,436.5 778.3,436.0 778.6,435.5 778.8,435.0 779.1,434.4 779.4,433.9 779.6,433.4 779.9,432.9 780.2,432.3 780.5,431.8 780.8,431.3 781.0,430.7 781.3,430.2 781.6,429.7 781.9,429.1 782.2,428.6 782.5,428.1 782.7,427.5 783.0,427.0 783.3,426.4 783.6,425.9 783.9,425.4 784.2,424.8 784.5,424.3 784.8,423.7 785.1,423.2 785.4,422.6 785.6,422.1 785.9,421.5 786.2,420.9 786.5,420.4 786.8,419.8 787.1,419.3 787.4,418.7 787.7,418.1 788.0,417.6 788.3,417.0 788.6,416.4 789.0,415.9 789.3,415.3 789.6,414.7 789.9,414.2 790.2,413.6 790.5,413.0 790.8,412.4 791.1,411.9 791.4,411.3 791.7,410.7 792.1,410.1 792.4,409.5 792.7,408.9 793.0,408.3 793.3,407.8 793.6,407.2 794.0,406.6 794.3,406.0 794.6,405.4 794.9,404.8 795.3,404.2 795.6,403.6 795.9,403.0 796.3,402.4 796.6,401.8 796.9,401.2 797.2,400.6 797.6,400.0 797.9,399.3 798.3,398.7 798.6,398.1 798.9,397.5 799.3,396.9 799.6,396.3 799.9,395.6 800.3,395.0 800.6,394.4 801.0,393.8 801.3,393.1 801.7,392.5 802.0,391.9 802.4,391.2 802.7,390.6 803.1,390.0 803.4,389.3 803.8,388.7 804.1,388.0 804.5,387.4 804.9,386.7 805.2,386.1 805.6,385.4 805.9,384.8 806.3,384.1 806.7,383.5 807.0,382.8 807.4,382.2 807.8,381.5 808.1,380.8 808.5,380.2 808.9,379.5 809.3,378.8 809.6,378.2 810.0,377.5 810.4,376.8 810.8,376.1 811.1,375.5 811.5,374.8 811.9,374.1 812.3,373.4 812.7,372.7 813.1,372.0 813.5,371.4 813.8,370.7 814.2,370.0 814.6,369.3 815.0,368.6 815.4,367.9 815.8,367.2 816.2,366.5 816.6,365.8 817.0,365.0 817.4,364.3 817.8,363.6 818.2,362.9 818.6,362.2 819.1,361.5 819.5,360.7 819.9,360.0 820.3,359.3 820.7,358.6 821.1,357.8 821.5,357.1 822.0,356.4 822.4,355.6 822.8,354.9 823.2,354.1 823.7,353.4 824.1,352.6 824.5,351.9 825.0,351.1 825.4,350.4 825.8,349.6 826.3,348.9 826.7,348.1 827.1,347.4 827.6,346.6 828.0,345.8 828.5,345.0 828.9,344.3 829.4,343.5 829.8,342.7 830.3,341.9 830.7,341.1 831.2,340.4 831.6,339.6 832.1,338.8 832.6,338.0 833.0,337.2 833.5,336.4 833.9,335.6 834.4,334.8 834.9,334.0 835.4,333.2 835.8,332.4 836.3,331.5 836.8,330.7 837.3,329.9 837.7,329.1 838.2,328.3 838.7,327.4 839.2,326.6 839.7,325.8 840.2,324.9 840.7,324.1 841.2,323.2 841.7,322.4 842.2,321.5 842.7,320.7 843.2,319.8 843.7,319.0 844.2,318.1 844.7,317.2 845.2,316.4 845.7,315.5 846.3,314.6 846.8,313.8 847.3,312.9 847.8,312.0 848.3,311.1 848.9,310.2 849.4,309.3 849.9,308.4 850.5,307.5 851.0,306.6 851.5,305.7 852.1,304.8 852.6,303.9 853.2,303.0 853.7,302.1 854.3,301.2 854.8,300.2 855.4,299.3 855.9,298.4 856.5,297.4 857.1,296.5 857.6,295.6 858.2,294.6 858.8,293.7 859.3,292.7 859.9,291.8 860.5,290.8 861.1,289.8 861.7,288.9 862.3,287.9 862.8,286.9 863.4,286.0 864.0,285.0 864.6,284.0 865.2,283.0 865.8,282.0 866.4,281.0 867.0,280.0 867.6,279.0 868.3,278.0 868.9,277.0 869.5,276.0 870.1,275.0 870.7,273.9 871.4,272.9 872.0,271.9 872.6,270.8 873.3,269.8 873.9,268.7 874.6,267.7 875.2,266.6 875.8,265.6 876.5,264.5 877.2,263.5 877.8,262.4 878.5,261.3 879.1,260.2 879.8,259.2 880.5,258.1 881.1,257.0 881.8,255.9 882.5,254.8 883.2,253.7 883.9,252.6 884.6,251.4 885.3,250.3 886.0,249.2 886.7,248.1 887.4,246.9 888.1,245.8 888.8,244.7 889.5,243.5 890.2,242.4 890.9,241.2 891.7,240.0 892.4,238.9 893.1,237.7 893.9,236.5 894.6,235.3 895.3,234.1 896.1,232.9 896.8,231.7 897.6,230.5 898.4,229.3 899.1,228.1 899.9,226.9 900.7,225.7 901.4,224.4 902.2,223.2 903.0,221.9 903.8,220.7 904.6,219.4 905.4,218.2 906.2,216.9 907.0,215.6 907.8,214.4 908.6,213.1 909.4,211.8 910.2,210.5 911.1,209.2 911.9,207.9 912.7,206.6 913.6,205.3 914.4,203.9 915.3,202.6 916.1,201.3 917.0,199.9 917.8,198.6 918.7,197.2 919.6,195.8 920.5,194.5 921.3,193.1 922.2,191.7 923.1,190.3 924.0,188.9 924.9,187.5 925.8,186.1 926.7,184.7 927.7,183.2 928.6,181.8 929.5,180.4 930.4,178.9 931.4,177.5 932.3,176.0 933.3,174.5 934.2,173.0 935.2,171.6 936.2,170.1 937.1,168.6 938.1,167.0 939.1,165.5 940.1,164.0 941.1,162.5 942.1,160.9 943.1,159.4 944.1,157.8 945.1,156.3 946.2,154.7 947.2,153.1 948.2,151.5 949.3,149.9 950.3,148.3 951.4,146.7 952.4,145.0 953.5,143.4 954.6,141.8 955.7,140.1 956.8,138.4 957.9,136.8 959.0,135.1 960.1,133.4 961.2,131.7 962.3,130.0 963.5,128.3 964.6,126.5 965.8,124.8 966.9,123.0 968.1,121.3 969.3,119.5 970.4,117.7 971.6,115.9 972.8,114.1 974.0,112.3 975.2,110.5 976.5,108.6 977.7,106.8 978.9,104.9 980.2,103.1 981.4,101.2 982.7,99.3 983.9,97.4 985.2,95.5 986.5,93.6 987.8,91.6 989.1,89.7 990.4,87.7 991.8,85.7 993.1,83.7 994.4,81.7 995.8,79.7 997.1,77.7 998.5,75.6 999.9,73.6 1001.3,71.5 1002.7,69.4 1004.1,67.3 1005.5,65.2 1007.0,63.1 1008.4,61.0 1009.8,58.8 1011.3,56.7 1012.8,54.5 1014.3,52.3 1015.8,50.1" stroke="#000080"/>
<line x1="-757.5" y1="840.5" x2="142.5" y2="-59.5" stroke="#fff"/>
<line x1="-697.5" y1="840.5" x2="202.5" y2="-59.5" stroke="#fff"/>
<line x1="-637.5" y1="840.5" x2="262.5" y2="-59.5" stroke="#fff"/>
<line x1="-577.5" y1="840.5" x2="322.5" y2="-59.5" stroke="#fff"/>
<line x1="-517.5" y1="840.5" x2="382.5" y2="-59.5" stroke="#fff"/>
<line x1="-457.5" y1="840.5" x2="442.5" y2="-59.5" stroke="#fff"/>
<line x1="-397.5" y1="840.5" x2="502.5" y2="-59.5" stroke="#fff"/>
<line x1="-337.5" y1="840.5" x2="562.5" y2="-59.5" stroke="#fff"/>
<line x1="-277.5" y1="840.5" x2="622.5" y2="-59.5" stroke="#fff"/>
<line x1="-217.5" y1="840.5" x2="682.5" y2="-59.5" stroke="#fff"/>
<line x1="-157.5" y1="840.5" x2="742.5" y2="-59.5" stroke="#fff"/>
<line x1="-97.5" y1="840.5" x2="802.5" y2="-59.5" stroke="#fff"/>
<line x1="-37.5" y1="840.5" x2="862.5" y2="-59.5" stroke="#fff"/>
<line x1="22.5" y1="840.5" x2="922.5" y2="-59.5" stroke="#fff"/>
<line x1="82.5" y1="840.5" x2="982.5" y2="-59.5" stroke="#fff"/>
<line x1="142.5" y1="840.5" x2="1042.5" y2="-59.5" stroke="#fff"/>
<line x1="202.5" y1="840.5" x2="1102.5" y2="-59.5" stroke="#fff"/>
<line x1="262.5" y1="840.5" x2="1162.5" y2="-59.5" stroke="#fff"/>
<line x1="322.5" y1="840.5" x2="1222.5" y2="-59.5" stroke="#fff"/>
<line x1="382.5" y1="840.5" x2="1282.5" y2="-59.5" stroke="#fff"/>
<line x1="442.5" y1="840.5" x2="1342.5" y2="-59.5" stroke="#fff"/>
<line x1="502.5" y1="840.5" x2="1402.5" y2="-59.5" stroke="#fff"/>
<line x1="562.5" y1="840.5" x2="1462.5" y2="-59.5" stroke="#fff"/>
<line x1="622.5" y1="840.5" x2="1522.5" y2="-59.5" stroke="#fff"/>
</g>
<g stroke="#fff" shape-rendering="crispEdges">
<line x1="56" y1="50.5" x2="667" y2="50.5"/>
<line x1="56" y1="321.5" x2="667" y2="321.5"/>
<line x1="56" y1="449.5" x2="667" y2="449.5"/>
<line x1="56" y1="529.5" x2="667" y2="529.5"/>
<line x1="56" y1="586.5" x2="667" y2="586.5"/>
<line x1="56" y1="630.5" x2="667" y2="630.5"/>
<line x1="56" y1="665.5" x2="667" y2="665.5"/>
<line x1="56" y1="694.5" x2="667" y2="694.5"/>
<line x1="56" y1="719.5" x2="667" y2="719.5"/>
<line x1="56" y1="740.5" x2="667" y2="740.5"/>
<rect x="61.5" y="50.5" width="600" height="699" fill="none"/>
<line x1="61.5" y1="749" x2="61.5" y2="755"/>
<line x1="61.5" y1="788" x2="61.5" y2="793"/>
<line x1="61.5" y1="826" x2="61.5" y2="831"/>
<line x1="121.5" y1="749" x2="121.5" y2="755"/>
<line x1="121.5" y1="788" x2="121.5" y2="793"/>
<line x1="121.5" y1="826" x2="121.5" y2="831"/>
<line x1="181.5" y1="749" x2="181.5" y2="755"/>
<line x1="181.5" y1="788" x2="181.5" y2="793"/>
<line x1="181.5" y1="826" x2="181.5" y2="831"/>
<line x1="241.5" y1="749" x2="241.5" y2="755"/>
<line x1="241.5" y1="788" x2="241.5" y2="793"/>
<line x1="241.5" y1="826" x2="241.5" y2="831"/>
<line x1="301.5" y1="749" x2="301.5" y2="755"/>
<line x1="301.5" y1="788" x2="301.5" y2="793"/>
<line x1="301.5" y1="826" x2="301.5" y2="831"/>
<line x1="361.5" y1="749" x2="361.5" y2="755"/>
<line x1="361.5" y1="788" x2="361.5" y2="793"/>
<line x1="361.5" y1="826" x2="361.5" y2="831"/>
<line x1="421.5" y1="749" x2="421.5" y2="755"/>
<line x1="421.5" y1="788" x2="421.5" y2="793"/>
<line x1="421.5" y1="826" x2="421.5" y2="831"/>
<line x1="481.5" y1="749" x2="481.5" y2="755"/>
<line x1="481.5" y1="788" x2="481.5" y2="793"/>
<line x1="481.5" y1="826" x2="481.5" y2="831"/>
<line x1="541.5" y1="749" x2="541.5" y2="755"/>
<line x1="541.5" y1="788" x2="541.5" y2="793"/>
<line x1="541.5" y1="826" x2="541.5" y2="831"/>
<line x1="601.5" y1="749" x2="601.5" y2="755"/>
<line x1="601.5" y1="788" x2="601.5" y2="793"/>
<line x1="601.5" y1="826" x2="601.5" y2="831"/>
<line x1="661.5" y1="749" x2="661.5" y2="755"/>
<line x1="661.5" y1="788" x2="661.5" y2="793"/>
<line x1="661.5" y1="826" x2="661.5" y2="831"/>
<line x1="61.5" y1="863" x2="61.5" y2="868"/>
<line x1="136.5" y1="863" x2="136.5" y2="868"/>
<line x1="211.5" y1="863" x2="211.5" y2="868"/>
<line x1="286.5" y1="863" x2="286.5" y2="868"/>
<line x1="361.5" y1="863" x2="361.5" y2="868"/>
<line x1="436.5" y1="863" x2="436.5" y2="868"/>
<line x1="511.5" y1="863" x2="511.5" y2="868"/>
<line x1="586.5" y1="863" x2="586.5" y2="868"/>
<line x1="661.5" y1="863" x2="661.5" y2="868"/>
</g>
<text transform="translate(53,55.0) scale(0.9,1)" font-size="14" fill="#fff" text-anchor="end" font-family="Liberation Sans, sans-serif">100</text>
<text transform="translate(670,55.0) scale(0.9,1)" font-size="14" fill="#fff" text-anchor="start" font-family="Liberation Sans, sans-serif">16540m</text>
<text transform="translate(53,326.0) scale(0.9,1)" font-size="14" fill="#fff" text-anchor="end" font-family="Liberation Sans, sans-serif">200</text>
<text transform="translate(670,326.0) scale(0.9,1)" font-size="14" fill="#fff" text-anchor="start" font-family="Liberation Sans, sans-serif">12160m</text>
<text transform="translate(53,454.0) scale(0.9,1)" font-size="14" fill="#fff" text-anchor="end" font-family="Liberation Sans, sans-serif">300</text>
<text transform="translate(670,454.0) scale(0.9,1)" font-size="14" fill="#fff" text-anchor="start" font-family="Liberation Sans, sans-serif">9520m</text>
<text transform="translate(53,534.0) scale(0.9,1)" font-size="14" fill="#fff" text-anchor="end" font-family="Liberation Sans, sans-serif">400</text>
<text transform="translate(670,534.0) scale(0.9,1)" font-size="14" fill="#fff" text-anchor="start" font-family="Liberation Sans, sans-serif">7490m</text>
<text transform="translate(53,591.0) scale(0.9,1)" font-size="14" fill="#fff" text-anchor="end" font-family="Liberation Sans, sans-serif">500</text>
<text transform="translate(670,591.0) scale(0.9,1)" font-size="14" fill="#fff" text-anchor="start" font-family="Liberation Sans, sans-serif">5820m</text>
<text transform="translate(53,635.0) scale(0.9,1)" font-size="14" fill="#fff" text-anchor="end" font-family="Liberation Sans, sans-serif">600</text>
<text transform="translate(670,635.0) scale(0.9,1)" font-size="14" fill="#fff" text-anchor="start" font-family="Liberation Sans, sans-serif">4403m</text>
<text transform="translate(53,670.0) scale(0.9,1)" font-size="14" fill="#fff" text-anchor="end" font-family="Liberation Sans, sans-serif">700</text>
<text transform="translate(670,670.0) scale(0.9,1)" font-size="14" fill="#fff" text-anchor="start" font-family="Liberation Sans, sans-serif">3160m</text>
<text transform="translate(53,699.0) scale(0.9,1)" font-size="14" fill="#fff" text-anchor="end" font-family="Liberation Sans, sans-serif">800</text>
<text transform="translate(670,699.0) scale(0.9,1)" font-size="14" fill="#fff" text-anchor="start" font-family="Liberation Sans, sans-serif">2041m</text>
<text transform="translate(53,724.0) scale(0.9,1)" font-size="14" fill="#fff" text-anchor="end" font-family="Liberation Sans, sans-serif">900</text>
<text transform="translate(670,724.0) scale(0.9,1)" font-size="14" fill="#fff" text-anchor="start" font-family="Liberation Sans, sans-serif">1027m</text>
<text transform="translate(53,745.0) scale(0.9,1)" font-size="14" fill="#fff" text-anchor="end" font-family="Liberation Sans, sans-serif">1000</text>
<text transform="translate(59,768) scale(0.9,1)" font-size="14" fill="#fff" text-anchor="middle" font-family="Liberation Sans, sans-serif">-50</text>
<text transform="translate(61,806) scale(0.9,1)" font-size="14" fill="#fff" text-anchor="middle" font-family="Liberation Sans, sans-serif">0</text>
<text transform="translate(61,843) scale(0.9,1)" font-size="14" fill="#fff" text-anchor="middle" font-family="Liberation Sans, sans-serif">0</text>
<text transform="translate(119,768) scale(0.9,1)" font-size="14" fill="#fff" text-anchor="middle" font-family="Liberation Sans, sans-serif">-40</text>
<text transform="translate(121,806) scale(0.9,1)" font-size="14" fill="#fff" text-anchor="middle" font-family="Liberation Sans, sans-serif">10</text>
<text transform="translate(121,843) scale(0.9,1)" font-size="14" fill="#fff" text-anchor="middle" font-family="Liberation Sans, sans-serif">300</text>
<text transform="translate(179,768) scale(0.9,1)" font-size="14" fill="#fff" text-anchor="middle" font-family="Liberation Sans, sans-serif">-30</text>
<text transform="translate(181,806) scale(0.9,1)" font-size="14" fill="#fff" text-anchor="middle" font-family="Liberation Sans, sans-serif">20</text>
<text transform="translate(181,843) scale(0.9,1)" font-size="14" fill="#fff" text-anchor="middle" font-family="Liberation Sans, sans-serif">600</text>
<text transform="translate(239,768) scale(0.9,1)" font-size="14" fill="#fff" text-anchor="middle" font-family="Liberation Sans, sans-serif">-20</text>
<text transform="translate(241,806) scale(0.9,1)" font-size="14" fill="#fff" text-anchor="middle" font-family="Liberation Sans, sans-serif">30</text>
<text transform="translate(241,843) scale(0.9,1)" font-size="14" fill="#fff" text-anchor="middle" font-family="Liberation Sans, sans-serif">900</text>
<text transform="translate(299,768) scale(0.9,1)" font-size="14" fill="#fff" text-anchor="middle" font-family="Liberation Sans, sans-serif">-10</text>
<text transform="translate(301,806) scale(0.9,1)" font-size="14" fill="#fff" text-anchor="middle" font-family="Liberation Sans, sans-serif">40</text>
<text transform="translate(301,843) scale(0.9,1)" font-size="14" fill="#fff" text-anchor="middle" font-family="Liberation Sans, sans-serif">1200</text>
<text transform="translate(359,768) scale(0.9,1)" font-size="14" fill="#fff" text-anchor="middle" font-family="Liberation Sans, sans-serif">0</text>
<text transform="translate(361,806) scale(0.9,1)" font-size="14" fill="#fff" text-anchor="middle" font-family="Liberation Sans, sans-serif">50</text>
<text transform="translate(361,843) scale(0.9,1)" font-size="14" fill="#fff" text-anchor="middle" font-family="Liberation Sans, sans-serif">1500</text>
<text transform="translate(419,768) scale(0.9,1)" font-size="14" fill="#fff" text-anchor="middle" font-family="Liberation Sans, sans-serif">10</text>
<text transform="translate(421,806) scale(0.9,1)" font-size="14" fill="#fff" text-anchor="middle" font-family="Liberation Sans, sans-serif">60</text>
<text transform="translate(421,843) scale(0.9,1)" font-size="14" fill="#fff" text-anchor="middle" font-family="Liberation Sans, sans-serif">1800</text>
<text transform="translate(479,768) scale(0.9,1)" font-size="14" fill="#fff" text-anchor="middle" font-family="Liberation Sans, sans-serif">20</text>
<text transform="translate(481,806) scale(0.9,1)" font-size="14" fill="#fff" text-anchor="middle" font-family="Liberation Sans, sans-serif">70</text>
<text transform="translate(481,843) scale(0.9,1)" font-size="14" fill="#fff" text-anchor="middle" font-family="Liberation Sans, sans-serif">2100</text>
<text transform="translate(539,768) scale(0.9,1)" font-size="14" fill="#fff" text-anchor="middle" font-family="Liberation Sans, sans-serif">30</text>
<text transform="translate(541,806) scale(0.9,1)" font-size="14" fill="#fff" text-anchor="middle" font-family="Liberation Sans, sans-serif">80</text>
<text transform="translate(541,843) scale(0.9,1)" font-size="14" fill="#fff" text-anchor="middle" font-family="Liberation Sans, sans-serif">2400</text>
<text transform="translate(599,768) scale(0.9,1)" font-size="14" fill="#fff" text-anchor="middle" font-family="Liberation Sans, sans-serif">40</text>
<text transform="translate(601,806) scale(0.9,1)" font-size="14" fill="#fff" text-anchor="middle" font-family="Liberation Sans, sans-serif">90</text>
<text transform="translate(601,843) scale(0.9,1)" font-size="14" fill="#fff" text-anchor="middle" font-family="Liberation Sans, sans-serif">2700</text>
<text transform="translate(659,768) scale(0.9,1)" font-size="14" fill="#fff" text-anchor="middle" font-family="Liberation Sans, sans-serif">50</text>
<text transform="translate(661,806) scale(0.9,1)" font-size="14" fill="#fff" text-anchor="middle" font-family="Liberation Sans, sans-serif">100</text>
<text transform="translate(661,843) scale(0.9,1)" font-size="14" fill="#fff" text-anchor="middle" font-family="Liberation Sans, sans-serif">3000</text>
<text transform="translate(61,880) scale(0.9,1)" font-size="14" fill="#fff" text-anchor="middle" font-family="Liberation Sans, sans-serif">-100</text>
<text transform="translate(136,880) scale(0.9,1)" font-size="14" fill="#fff" text-anchor="middle" font-family="Liberation Sans, sans-serif">-50</text>
<text transform="translate(211,880) scale(0.9,1)" font-size="14" fill="#fff" text-anchor="middle" font-family="Liberation Sans, sans-serif">0</text>
<text transform="translate(286,880) scale(0.9,1)" font-size="14" fill="#fff" text-anchor="middle" font-family="Liberation Sans, sans-serif">50</text>
<text transform="translate(361,880) scale(0.9,1)" font-size="14" fill="#fff" text-anchor="middle" font-family="Liberation Sans, sans-serif">100</text>
<text transform="translate(436,880) scale(0.9,1)" font-size="14" fill="#fff" text-anchor="middle" font-family="Liberation Sans, sans-serif">150</text>
<text transform="translate(511,880) scale(0.9,1)" font-size="14" fill="#fff" text-anchor="middle" font-family="Liberation Sans, sans-serif">200</text>
<text transform="translate(586,880) scale(0.9,1)" font-size="14" fill="#fff" text-anchor="middle" font-family="Liberation Sans, sans-serif">250</text>
<text transform="translate(661,880) scale(0.9,1)" font-size="14" fill="#fff" text-anchor="middle" font-family="Liberation Sans, sans-serif">300</text>
<text x="275.5" y="781" font-size="14" fill="#fff" textLength="171.5" lengthAdjust="spacingAndGlyphs" font-family="Liberation Sans, sans-serif">Temperature, Dewpoint [ °C ]</text>
<text x="307" y="819" font-size="14" fill="#fff" textLength="106.5" lengthAdjust="spacingAndGlyphs" font-family="Liberation Sans, sans-serif">Windspeed [ knt ]</text>
<text x="292.5" y="857" font-size="14" fill="#fff" textLength="137.5" lengthAdjust="spacingAndGlyphs" font-family="Liberation Sans, sans-serif">CAPE, CINH * 5 [ J/kg ]</text>
<text x="259.8" y="893" font-size="14" fill="#fff" textLength="203.2" lengthAdjust="spacingAndGlyphs" font-family="Liberation Sans, sans-serif">Storm Relative Helicity [ m^2/s^2 ]</text>
<text x="62.5" y="29" font-size="16" font-weight="bold" fill="#fff" textLength="229" lengthAdjust="spacingAndGlyphs" font-family="Liberation Sans, sans-serif">Station: 06610 LSMP Payerne</text>
<text x="317.5" y="29" font-size="16" font-weight="bold" fill="#fff" textLength="139" lengthAdjust="spacingAndGlyphs" font-family="Liberation Sans, sans-serif">Date: 23 Jun 2003</text>
<text x="480" y="29" font-size="16" font-weight="bold" fill="#fff" textLength="89.5" lengthAdjust="spacingAndGlyphs" font-family="Liberation Sans, sans-serif">Time: 1200Z</text>
<g shape-rendering="crispEdges">
<line x1="61" y1="644.5" x2="626" y2="644.5" stroke="#ff00ff"/>
<rect x="625.5" y="635.5" width="30" height="17" fill="#000" stroke="#ff00ff"/>
<text transform="translate(629,649) scale(0.9,1)" font-size="14" fill="#ff00ff" font-family="Liberation Sans, sans-serif">LCL</text>
<polyline points="436.5,50.0 428.3,73.0 408.4,140.8 401.1,180.0 393.7,224.2 390.7,246.3 389.3,274.3 388.5,306.8 389.3,320.0 390.7,344.5 397.4,397.5 408.4,440.3 410.6,455.0 416.5,469.2 422.4,494.2 428.3,513.4 435.7,544.3 443.1,567.9 446.8,590.0 449.2,594.7 452.4,610.9 456.5,628.8 465.4,638.5 478.4,647.4 496.2,666.1 512.4,678.2 530.2,692.0 546.5,705.0 565.9,717.9 590.2,731.7" fill="none" stroke="#ffc0ff" stroke-width="1"/>
<polyline points="456.5,628.8 444.3,644.2" fill="none" stroke="#ffc0ff" stroke-width="1"/>
<polyline points="419.0,50.0 417.3,51.2 400.3,101.0 391.5,129.0 380.4,180.0 372.3,224.2 369.4,252.2 366.4,292.0 366.4,320.0 368.6,344.5 372.3,378.4 379.0,421.1 384.9,447.6 391.5,464.7 404.8,513.4 419.5,559.1 428.1,585.0 434.6,607.7 440.3,627.2 444.3,644.2 449.2,650.7 468.6,666.1 481.6,678.2 502.7,695.2 517.3,705.0 554.6,730.9" fill="none" stroke="#ff00ff" stroke-width="1"/>
<polyline points="444.3,644.2 420.0,680.7 400.6,712.3 390.6,731.5" fill="none" stroke="#ff00ff" stroke-width="1"/>
<polyline points="61.8,729.1 78.6,729.1 78.6,729.7 112.2,730.9 129.7,731.2" fill="none" stroke="#c86400" stroke-width="1"/>
<polyline points="61.8,729.7 71.2,731.2" fill="none" stroke="#ffff00" stroke-width="1"/>
<path d="M69,731.5h5M71.5,729v5" stroke="#fff" fill="none"/>
<path d="M337,664.5h5M339.5,662v5M325,671.5h5M327.5,669v5M329,673.5h5M331.5,671v5M335,675.5h5M337.5,673v5M345,680.5h5M347.5,678v5M389,698.5h5M391.5,696v5M379,699.5h5M381.5,697v5M374,699.5h5M376.5,697v5M343,703.5h5M345.5,701v5M293,712.5h5M295.5,710v5M288,713.5h5M290.5,711v5M298,716.5h5M300.5,714v5M309,719.5h5M311.5,717v5M329,724.5h5M331.5,722v5M274,727.5h5M276.5,725v5M209,731.5h5M211.5,729v5" stroke="#fff" fill="none"/>
<polyline points="341.5,656.5 339.2,664.6 327.4,671.2 331.8,673.4 337.7,675.6 347.3,680.1 354.2,683.5 391.5,698.5 381.9,699.2 376.0,699.2 367.6,699.2 345.3,703.1 311.9,706.6 306.5,708.5 295.7,712.5 290.5,713.7 300.8,716.2 311.9,719.1 319.3,720.6 331.4,724.6 276.1,727.7 211.2,731.2" fill="none" stroke="#c8c800" stroke-width="1"/>
<path d="M642,92.5h5M644.5,90v5M616,136.5h5M618.5,134v5M609,149.5h5M611.5,147v5M588,171.5h5M590.5,169v5M574,180.5h5M576.5,178v5M571,183.5h5M573.5,181v5M549,205.5h5M551.5,203v5M542,218.5h5M544.5,216v5M533,235.5h5M535.5,233v5M529,242.5h5M531.5,240v5M496,270.5h5M498.5,268v5M478,282.5h5M480.5,280v5M455,297.5h5M457.5,295v5M453,312.5h5M455.5,310v5M443,321.5h5M445.5,319v5M430,326.5h5M432.5,324v5M428,329.5h5M430.5,327v5M423,336.5h5M425.5,334v5M411,356.5h5M413.5,354v5M407,360.5h5M409.5,358v5M402,390.5h5M404.5,388v5M402,394.5h5M404.5,392v5M403,402.5h5M405.5,400v5M407,445.5h5M409.5,443v5M410,464.5h5M412.5,462v5M416,481.5h5M418.5,479v5M418,500.5h5M420.5,498v5M421,510.5h5M423.5,508v5M427,523.5h5M429.5,521v5M426,540.5h5M428.5,538v5M427,544.5h5M429.5,542v5M430,556.5h5M432.5,554v5M430,559.5h5M432.5,557v5M432,566.5h5M434.5,564v5M438,586.5h5M440.5,584v5M443,599.5h5M445.5,597v5M444,604.5h5M446.5,602v5M447,614.5h5M449.5,612v5M451,619.5h5M453.5,617v5M452,628.5h5M454.5,626v5M454,633.5h5M456.5,631v5M460,641.5h5M462.5,639v5M465,650.5h5M467.5,648v5M469,653.5h5M471.5,651v5M479,663.5h5M481.5,661v5M486,672.5h5M488.5,670v5M491,679.5h5M493.5,677v5M508,698.5h5M510.5,696v5M511,702.5h5M513.5,700v5M519,707.5h5M521.5,705v5M523,713.5h5M525.5,711v5M528,717.5h5M530.5,715v5M536,721.5h5M538.5,719v5M542,724.5h5M544.5,722v5M546,726.5h5M548.5,724v5M551,730.5h5M553.5,728v5M565,731.5h5M567.5,729v5" stroke="#fff" fill="none"/>
<polyline points="661.0,77.8 655.8,82.3 644.4,92.0 636.3,105.0 618.5,136.6 611.2,149.6 600.6,160.1 590.1,171.5 583.6,174.7 576.3,180.4 573.1,183.6 567.1,190.0 551.7,205.7 544.4,218.9 535.5,235.7 531.5,242.7 518.5,252.4 498.2,270.3 480.4,282.4 457.7,297.8 455.3,312.4 445.5,321.3 437.4,323.8 432.0,326.8 430.5,329.7 425.4,336.4 413.6,356.3 409.9,360.0 408.4,365.1 404.0,388.7 404.0,390.9 404.0,394.6 405.5,402.7 409.2,445.4 412.9,464.3 418.8,481.2 421.0,500.6 423.2,510.4 429.8,523.3 430.5,529.6 428.3,540.2 429.1,544.3 432.0,556.1 432.0,559.8 434.2,566.4 440.1,586.3 445.1,599.6 446.8,604.5 449.2,615.0 453.2,619.9 454.9,628.0 456.5,633.6 462.2,641.7 467.8,650.7 471.1,653.1 481.6,663.6 488.9,672.5 493.8,679.8 510.8,698.5 513.2,702.5 521.3,707.4 525.4,713.1 530.2,717.1 538.4,721.2 544.8,724.4 548.9,726.9 553.8,730.1 567.5,731.7" fill="none" stroke="#ff0000" stroke-width="1"/>
<path d="M395,321.5h5M397.5,319v5M381,328.5h5M383.5,326v5M375,336.5h5M377.5,334v5M363,356.5h5M365.5,354v5M360,360.5h5M362.5,358v5M354,390.5h5M356.5,388v5M354,394.5h5M356.5,392v5M354,402.5h5M356.5,400v5M353,445.5h5M355.5,443v5M354,464.5h5M356.5,462v5M357,481.5h5M359.5,479v5M364,500.5h5M366.5,498v5M308,510.5h5M310.5,508v5M314,523.5h5M316.5,521v5M356,529.5h5M358.5,527v5M401,540.5h5M403.5,538v5M385,544.5h5M387.5,542v5M340,556.5h5M342.5,554v5M357,559.5h5M359.5,557v5M330,566.5h5M332.5,564v5M360,586.5h5M362.5,584v5M400,599.5h5M402.5,597v5M396,604.5h5M398.5,602v5M384,612.5h5M386.5,610v5M392,615.5h5M394.5,613v5M393,620.5h5M395.5,618v5M392,627.5h5M394.5,625v5M375,630.5h5M377.5,628v5M405,632.5h5M407.5,630v5M413,637.5h5M415.5,635v5M417,642.5h5M419.5,640v5M407,649.5h5M409.5,647v5M402,653.5h5M404.5,651v5M395,663.5h5M397.5,661v5M397,672.5h5M399.5,670v5M393,674.5h5M395.5,672v5M347,680.5h5M349.5,678v5M341,680.5h5M343.5,678v5M347,699.5h5M349.5,697v5M365,699.5h5M367.5,697v5M373,700.5h5M375.5,698v5M380,703.5h5M382.5,701v5M369,707.5h5M371.5,705v5M398,712.5h5M400.5,710v5M375,719.5h5M377.5,717v5M380,724.5h5M382.5,722v5M403,730.5h5M405.5,728v5" stroke="#fff" fill="none"/>
<polyline points="397.4,321.6 390.7,323.1 383.4,328.3 377.5,336.4 365.7,356.3 362.0,360.0 359.8,372.5 356.9,385.7 356.1,390.9 356.1,394.6 356.1,402.7 355.4,424.1 355.4,445.4 356.1,464.3 359.1,481.2 366.4,500.6 310.4,510.4 316.3,523.3 358.3,529.6 403.3,540.2 387.1,544.3 342.1,556.1 359.8,559.8 332.5,566.4 362.0,586.3 402.5,599.3 398.1,604.2 386.3,612.3 394.4,615.2 395.9,620.4 394.4,627.7 377.5,630.0 407.7,632.9 415.1,637.3 419.5,642.5 409.2,649.8 404.8,653.5 397.4,663.1 399.6,672.0 395.2,674.9 349.5,680.1 343.6,680.8 349.1,699.2 367.6,699.2 375.3,700.0 382.2,703.1 371.4,707.7 400.6,712.3 398.3,717.7 377.6,719.2 394.5,721.5 382.2,724.6 394.5,726.1 405.2,730.7" fill="none" stroke="#00ffff" stroke-width="1"/>
<path d="M129,51.5h5M131.5,49v5M140,59.5h5M142.5,57v5M159,72.5h5M161.5,70v5M156,92.5h5M158.5,90v5M166,136.5h5M168.5,134v5M154,149.5h5M156.5,147v5M132,170.5h5M134.5,168v5M119,179.5h5M121.5,177v5M118,181.5h5M120.5,179v5M114,205.5h5M116.5,203v5M114,218.5h5M116.5,216v5M112,235.5h5M114.5,233v5M98,241.5h5M100.5,239v5M88,270.5h5M90.5,268v5M120,281.5h5M122.5,279v5M120,298.5h5M122.5,296v5M116,312.5h5M118.5,310v5M77,326.5h5M79.5,324v5M75,336.5h5M77.5,334v5M88,357.5h5M90.5,355v5M72,391.5h5M74.5,389v5M72,394.5h5M74.5,392v5M109,402.5h5M111.5,400v5M111,446.5h5M113.5,444v5M119,464.5h5M121.5,462v5M118,481.5h5M120.5,479v5M106,500.5h5M108.5,498v5M96,510.5h5M98.5,508v5M93,523.5h5M95.5,521v5M94,540.5h5M96.5,538v5M95,544.5h5M97.5,542v5M85,556.5h5M87.5,554v5M80,560.5h5M82.5,558v5M77,566.5h5M79.5,564v5M79,587.5h5M81.5,585v5M74,599.5h5M76.5,597v5M69,604.5h5M71.5,602v5M90,626.5h5M92.5,624v5M99,630.5h5M101.5,628v5M108,632.5h5M110.5,630v5M141,642.5h5M143.5,640v5M162,649.5h5M164.5,647v5M154,652.5h5M156.5,650v5M130,664.5h5M132.5,662v5M140,672.5h5M142.5,670v5M144,674.5h5M146.5,672v5M150,680.5h5M152.5,678v5M192,698.5h5M194.5,696v5M186,699.5h5M188.5,697v5M176,703.5h5M178.5,701v5M167,707.5h5M169.5,705v5M143,712.5h5M145.5,710v5M138,713.5h5M140.5,711v5M132,716.5h5M134.5,714v5M129,719.5h5M131.5,717v5M125,721.5h5M127.5,719v5M125,724.5h5M127.5,722v5M147,725.5h5M149.5,723v5M164,727.5h5M166.5,725v5M144,730.5h5M146.5,728v5" stroke="#fff" fill="none"/>
<polyline points="131.6,50.5 142.7,59.3 161.1,72.3 158.6,92.5 168.5,136.4 156.7,149.6 134.6,171.0 121.3,179.9 120.6,181.8 116.9,205.4 116.6,218.6 114.7,235.7 100.7,241.9 90.4,270.2 122.1,281.7 122.1,298.6 118.7,312.2 118.4,321.6 79.3,326.5 77.1,336.8 90.1,357.7 74.9,391.6 111.7,402.3 113.2,446.2 121.3,464.3 120.6,481.7 108.8,500.8 98.5,510.0 95.5,523.7 94.1,529.6 96.3,540.6 97.4,544.3 87.4,556.1 83.0,560.5 79.8,566.0 81.5,587.4 76.4,599.7 71.2,604.2 92.6,627.0 101.4,630.0 111.0,633.0 143.4,642.5 164.8,649.8 156.7,652.8 132.4,664.6 142.0,672.0 146.4,674.9 153.0,680.0 172.1,688.2 188.5,695.2 194.4,698.1 188.5,699.3 178.6,703.4 169.2,707.5 145.8,712.8 140.5,713.9 134.6,716.9 131.1,719.8 127.6,721.5 127.2,725.0 149.6,725.6 167.0,727.4 149.6,728.7 146.5,730.6" fill="none" stroke="#ff0080" stroke-width="1"/>
<path d="M131,59.5h5M133.5,57v5M113,72.5h5M115.5,70v5M119,92.5h5M121.5,90v5M131,136.5h5M133.5,134v5M143,149.5h5M145.5,147v5M161,170.5h5M163.5,168v5M173,179.5h5M175.5,177v5M173,181.5h5M175.5,179v5M168,205.5h5M170.5,203v5M168,218.5h5M170.5,216v5M185,235.5h5M187.5,233v5M197,242.5h5M199.5,240v5M232,269.5h5M234.5,267v5M251,281.5h5M253.5,279v5M251,298.5h5M253.5,296v5M245,312.5h5M247.5,310v5M245,321.5h5M247.5,319v5M215,326.5h5M217.5,324v5M197,328.5h5M199.5,326v5M197,336.5h5M199.5,334v5M239,357.5h5M241.5,355v5M220,391.5h5M222.5,389v5M220,394.5h5M222.5,392v5M197,402.5h5M199.5,400v5M167,445.5h5M169.5,443v5M161,449.5h5M163.5,447v5M155,464.5h5M157.5,462v5M173,480.5h5M175.5,478v5M173,500.5h5M175.5,498v5M179,510.5h5M181.5,508v5M179,523.5h5M181.5,521v5M179,540.5h5M181.5,538v5M179,544.5h5M181.5,542v5M191,556.5h5M193.5,554v5M197,560.5h5M199.5,558v5M203,566.5h5M205.5,564v5M220,586.5h5M222.5,584v5M232,586.5h5M234.5,584v5M226,599.5h5M228.5,597v5M220,604.5h5M222.5,602v5M210,612.5h5M212.5,610v5M203,616.5h5M205.5,614v5M197,620.5h5M199.5,618v5M203,627.5h5M205.5,625v5M209,630.5h5M211.5,628v5M215,633.5h5M217.5,631v5M215,637.5h5M217.5,635v5M227,642.5h5M229.5,640v5M232,649.5h5M234.5,647v5M226,653.5h5M228.5,651v5M215,663.5h5M217.5,661v5M203,671.5h5M205.5,669v5M215,674.5h5M217.5,672v5M226,680.5h5M228.5,678v5M280,698.5h5M282.5,696v5M275,699.5h5M277.5,697v5M269,699.5h5M271.5,697v5M245,703.5h5M247.5,701v5M214,707.5h5M216.5,705v5M191,713.5h5M193.5,711v5M202,716.5h5M204.5,714v5M214,718.5h5M216.5,716v5M227,722.5h5M229.5,720v5M239,724.5h5M241.5,722v5M245,725.5h5M247.5,723v5M218,726.5h5M220.5,724v5M201,727.5h5M203.5,725v5M173,729.5h5M175.5,727v5M164,729.5h5M166.5,727v5M150,730.5h5M152.5,728v5M144,730.5h5M146.5,728v5" stroke="#fff" fill="none"/>
<polyline points="144.2,50.5 133.1,59.3 115.4,72.3 121.3,92.5 133.1,136.4 145.6,149.6 163.3,171.0 175.1,179.9 175.1,181.8 170.0,205.4 170.0,218.6 187.6,235.7 199.4,242.6 234.8,269.9 253.2,281.7 253.2,298.6 247.3,312.6 247.3,321.6 217.1,326.0 199.4,329.0 199.4,336.8 241.4,357.7 223.0,391.6 223.0,394.6 199.4,402.7 169.2,445.4 163.3,449.1 157.4,464.3 175.1,481.0 175.1,500.8 181.5,510.0 181.5,523.3 181.5,540.6 181.5,544.3 193.5,556.1 199.4,560.5 205.3,566.4 223.0,586.3 234.8,587.0 228.9,599.7 223.0,604.2 212.0,612.3 205.3,616.0 199.4,620.4 205.3,627.7 211.2,630.7 217.1,633.6 217.1,637.3 229.7,642.5 234.8,649.8 228.9,653.5 217.1,663.1 205.3,671.2 217.1,674.9 228.9,680.8 283.0,698.4 277.6,699.2 271.5,699.2 247.7,703.1 216.1,707.7 193.2,713.3 205.0,717.0 216.9,718.4 229.2,722.3 241.5,724.6 247.7,725.3 220.5,726.2 203.1,727.4 175.7,729.3 167.0,729.3 152.1,730.6 146.5,730.6" fill="none" stroke="#00ff00" stroke-width="1"/>
<rect x="338" y="653" width="7" height="7" fill="#c8c800"/>
<text x="341.5" y="659.5" font-size="8" font-weight="bold" fill="#646400" text-anchor="middle" font-family="Liberation Sans, sans-serif">3</text>
<rect x="351" y="680" width="7" height="7" fill="#c8c800"/>
<text x="354.5" y="686.5" font-size="8" font-weight="bold" fill="#646400" text-anchor="middle" font-family="Liberation Sans, sans-serif">2</text>
<rect x="303" y="705" width="7" height="7" fill="#c8c800"/>
<text x="306.5" y="711.5" font-size="8" font-weight="bold" fill="#646400" text-anchor="middle" font-family="Liberation Sans, sans-serif">1</text>
<rect x="67.5" y="607.5" width="43" height="17" fill="#000" stroke="#ffff00"/>
<text transform="translate(71,621) scale(0.9,1)" font-size="14" fill="#ffff00" font-family="Liberation Sans, sans-serif">CAPE</text>
<rect x="67.5" y="636.5" width="57" height="17" fill="#000" stroke="#c86400"/>
<text transform="translate(71,650) scale(0.9,1)" font-size="14" fill="#c86400" font-family="Liberation Sans, sans-serif">CINH * 5</text>
</g>
<g shape-rendering="crispEdges">
<line x1="761.5" y1="40" x2="761.5" y2="770" stroke="#00ff00"/>
<line x1="826.5" y1="40" x2="826.5" y2="770" stroke="#ff0080"/>
<path d="M761.5,59.3L733.3,65.7M761.5,72.3L732.0,75.8M761.5,92.3L732.0,89.3M761.5,136.1L736.3,122.3M761.5,149.3L735.1,137.5M761.5,171.3L733.3,163.5M761.5,179.6L733.3,174.5M761.5,182.8L732.0,178.1M761.5,205.4L732.0,201.9M761.5,218.4L732.0,215.3M761.5,235.4L732.0,230.2M761.5,242.4L732.0,239.3M761.5,270.5L733.3,278.7M761.5,282.3L735.1,295.4M761.5,298.3L735.1,311.4M761.5,312.2L735.1,325.3M761.5,321.6L732.8,334.5M761.5,326.3L733.5,334.0M761.5,328.9L732.8,334.0M761.5,336.2L732.0,341.4M761.5,356.3L732.0,359.3M761.5,360.5L732.0,363.6M761.5,390.6L732.0,393.5M761.5,394.6L732.0,397.5M761.5,402.7L732.8,396.6M761.5,444.9L732.0,444.4M761.5,449.3L732.0,449.3M761.5,464.4L732.0,464.4M761.5,481.3L732.0,476.1M761.5,500.4L732.0,499.5M761.5,510.3L732.0,511.3M761.5,523.5L732.0,527.3M761.5,529.4L732.0,534.6M761.5,540.3L732.8,547.3M761.5,544.7L732.8,552.0M761.5,556.5L732.8,563.8M761.5,560.7L732.8,568.1M761.5,566.9L732.8,574.2M761.5,586.9L732.8,592.5M761.5,587.8L732.8,594.2M761.5,599.4L732.0,604.6M761.5,604.6L732.8,610.4M761.5,612.4L733.3,618.0M761.5,615.9L733.3,622.4M761.5,621.1L733.3,628.0M761.5,627.6L734.6,638.0M761.5,631.0L735.4,642.3M761.5,635.4L736.3,646.7M761.5,639.7L737.5,652.8M761.5,644.1L738.5,659.7M761.5,651.0L740.6,671.9M761.5,664.1L737.2,681.4M761.5,665.8L738.0,681.0M761.5,671.9L739.8,690.1M761.5,674.5L739.8,692.7M761.5,677.1L738.9,694.5M761.5,681.4L740.6,699.7M761.5,698.8L741.0,719.6M761.5,703.6L741.9,721.3M761.5,707.8L742.3,724.6M761.5,711.5L741.5,727.2M761.5,716.0L738.5,731.0M761.5,718.0L737.5,733.0M761.5,720.0L737.0,735.0M761.5,722.0L736.5,737.0M761.5,724.0L736.5,738.5M761.5,726.0L737.0,739.5M761.5,727.5L738.0,740.0M761.5,729.7L737.3,747.4M761.5,730.5L743.6,749.9M826.5,59.3L855.6,55.3M826.5,72.3L854.9,66.2M826.5,92.3L853.9,83.3M826.5,136.1L850.9,120.1M826.5,149.3L849.7,132.3M826.5,171.3L848.0,151.4M826.5,179.6L845.7,158.3M826.5,182.8L845.7,162.3M826.5,205.4L849.7,188.0M826.5,218.4L849.7,201.1M826.5,235.8L840.5,210.6M826.5,242.7L837.9,214.1M826.5,270.5L811.0,294.9M826.5,282.3L815.3,309.6M826.5,298.3L815.3,325.3M826.5,312.2L817.9,341.1M826.5,321.6L817.9,348.9M826.5,329.2L855.6,329.2M826.5,336.2L855.6,336.2M826.5,334.1L828.9,355.8M826.5,356.3L798.0,347.1M826.5,360.5L798.0,351.5M826.5,390.6L805.8,370.6M826.5,394.6L805.8,374.4M826.5,402.7L835.3,374.4M826.5,444.9L851.8,431.0M826.5,449.3L852.7,436.2M826.5,464.4L853.9,452.2M826.5,481.3L845.7,460.0M826.5,500.4L849.7,483.0M826.5,510.3L850.9,495.2M826.5,523.5L854.9,515.5M826.5,529.4L856.1,526.5M826.5,540.3L856.1,544.7M826.5,544.7L854.9,550.8M826.5,556.5L853.9,568.7M826.5,560.7L850.9,575.6M826.5,566.9L845.7,587.8M826.5,586.9L798.0,596.5M826.5,587.8L818.8,614.2M826.5,599.4L798.8,610.7M826.5,604.6L804.9,623.7M826.5,614.3L850.4,635.4M826.5,618.5L840.3,637.0M826.5,627.0L841.9,652.2M826.5,633.7L836.9,657.2M826.5,640.4L835.2,664.0M826.5,648.8L836.0,665.7M826.5,662.3L835.2,680.8M826.5,672.4L840.3,696.0M826.5,675.8L839.4,699.3M826.5,679.1L836.9,702.7M826.5,684.2L835.2,707.7M826.5,707.7L854.6,738.9M826.5,712.8L842.8,734.7M826.5,717.8L848.7,748.1M826.5,724.6L841.9,751.5M826.5,727.9L835.2,748.1M826.5,731.3L831.8,748.1M826.5,705.0L825.5,733.0M826.5,733.0L825.1,760.0M826.5,712.0L825.5,745.0M826.5,716.0L827.5,744.0M826.5,720.0L825.5,748.0M826.5,690.0L827.5,712.0M826.5,700.0L828.0,720.0" stroke="#fff" fill="none"/>
</g>
<text x="747" y="32" font-size="14" fill="#00ff00" textLength="27.5" lengthAdjust="spacingAndGlyphs" font-family="Liberation Sans, sans-serif">OBS</text>
<text x="818.5" y="32" font-size="14" fill="#ff0080" textLength="16.5" lengthAdjust="spacingAndGlyphs" font-family="Liberation Sans, sans-serif">SR</text>
<text x="894" y="40" font-size="13" fill="#ffffff" text-anchor="start" font-family="Liberation Sans, sans-serif" text-decoration="underline">Parameter</text>
<text x="1124" y="40" font-size="13" fill="#ffffff" text-anchor="end" font-family="Liberation Sans, sans-serif" text-decoration="underline">Value LCL</text>
<text x="1214" y="40" font-size="13" fill="#ffffff" text-anchor="end" font-family="Liberation Sans, sans-serif" text-decoration="underline">Value CCL</text>
<text x="1230" y="40" font-size="13" fill="#ffffff" text-anchor="start" font-family="Liberation Sans, sans-serif" text-decoration="underline">Unit</text>
<text x="894" y="62" font-size="13" fill="#ffffff" text-anchor="start" font-family="Liberation Sans, sans-serif" >Convective Temperature:</text>
<text x="1124" y="62" font-size="13" fill="#ff0000" text-anchor="end" font-family="Liberation Sans, sans-serif" >36.46</text>
<text x="1230" y="62" font-size="13" fill="#ffffff" text-anchor="start" font-family="Liberation Sans, sans-serif" >[°C]</text>
<text x="894" y="79" font-size="13" fill="#ffffff" text-anchor="start" font-family="Liberation Sans, sans-serif" >Snowfall Height:</text>
<text x="1124" y="79" font-size="13" fill="#ffffff" text-anchor="end" font-family="Liberation Sans, sans-serif" >3432.14</text>
<text x="1230" y="79" font-size="13" fill="#ffffff" text-anchor="start" font-family="Liberation Sans, sans-serif" >[m]</text>
<text x="894" y="104" font-size="13" fill="#ffffff" text-anchor="start" font-family="Liberation Sans, sans-serif" text-decoration="underline">Parcels: Using 50mB mean layer LCL + CCL</text>
<text x="894" y="124" font-size="13" fill="#ffffff" text-anchor="start" font-family="Liberation Sans, sans-serif" >Lifted Index:</text>
<text x="1124" y="124" font-size="13" fill="#ffff00" text-anchor="end" font-family="Liberation Sans, sans-serif" >1.90</text>
<text x="1214" y="124" font-size="13" fill="#ffff00" text-anchor="end" font-family="Liberation Sans, sans-serif" >-1.14</text>
<text x="1230" y="124" font-size="13" fill="#ffffff" text-anchor="start" font-family="Liberation Sans, sans-serif" >[°C]</text>
<text x="894" y="141" font-size="13" fill="#ffffff" text-anchor="start" font-family="Liberation Sans, sans-serif" >CAPE:</text>
<text x="1124" y="141" font-size="13" fill="#00ff00" text-anchor="end" font-family="Liberation Sans, sans-serif" >0.00</text>
<text x="1214" y="141" font-size="13" fill="#00ff00" text-anchor="end" font-family="Liberation Sans, sans-serif" >114.07</text>
<text x="1230" y="141" font-size="13" fill="#ffffff" text-anchor="start" font-family="Liberation Sans, sans-serif" >[J/kg]</text>
<text x="894" y="158" font-size="13" fill="#ffffff" text-anchor="start" font-family="Liberation Sans, sans-serif" >CINH | LSI:</text>
<text x="1127" y="158" font-size="13" fill="#ffffff" text-anchor="end" font-family="Liberation Sans, sans-serif" >---,</text>
<text x="1136" y="158" font-size="13" fill="#ffffff" text-anchor="start" font-family="Liberation Sans, sans-serif" >---</text>
<text x="1230" y="158" font-size="13" fill="#ffffff" text-anchor="start" font-family="Liberation Sans, sans-serif" >[J/kg], [°C]</text>
<text x="894" y="175" font-size="13" fill="#ffffff" text-anchor="start" font-family="Liberation Sans, sans-serif" >CAPE Virt.:</text>
<text x="1124" y="175" font-size="13" fill="#00ff00" text-anchor="end" font-family="Liberation Sans, sans-serif" >0.00</text>
<text x="1214" y="175" font-size="13" fill="#00ff00" text-anchor="end" font-family="Liberation Sans, sans-serif" >61.11</text>
<text x="1230" y="175" font-size="13" fill="#ffffff" text-anchor="start" font-family="Liberation Sans, sans-serif" >[J/kg]</text>
<text x="894" y="192" font-size="13" fill="#ffffff" text-anchor="start" font-family="Liberation Sans, sans-serif" >CINH Virt.:</text>
<text x="1124" y="192" font-size="13" fill="#ffffff" text-anchor="end" font-family="Liberation Sans, sans-serif" >---</text>
<text x="1230" y="192" font-size="13" fill="#ffffff" text-anchor="start" font-family="Liberation Sans, sans-serif" >[J/kg]</text>
<text x="894" y="209" font-size="13" fill="#ffffff" text-anchor="start" font-family="Liberation Sans, sans-serif" >3km SFC CAPE | IL CAPE:</text>
<text x="1124" y="209" font-size="13" fill="#00ff00" text-anchor="end" font-family="Liberation Sans, sans-serif" >0.00</text>
<text x="1124" y="209" font-size="13" fill="#ffffff" text-anchor="start" font-family="Liberation Sans, sans-serif" >,</text>
<text x="1136" y="209" font-size="13" fill="#00ff00" text-anchor="start" font-family="Liberation Sans, sans-serif" >0.00</text>
<text x="1230" y="209" font-size="13" fill="#ffffff" text-anchor="start" font-family="Liberation Sans, sans-serif" >[J/kg]</text>
<text x="894" y="226" font-size="13" fill="#ffffff" text-anchor="start" font-family="Liberation Sans, sans-serif" >DCAPE (LFS = 502mB):</text>
<text x="1124" y="226" font-size="13" fill="#ff0000" text-anchor="end" font-family="Liberation Sans, sans-serif" >1477.60</text>
<text x="1230" y="226" font-size="13" fill="#ffffff" text-anchor="start" font-family="Liberation Sans, sans-serif" >[J/kg]</text>
<text x="894" y="243" font-size="13" fill="#ffffff" text-anchor="start" font-family="Liberation Sans, sans-serif" >850-600 Lapse Rate:</text>
<text x="1124" y="243" font-size="13" fill="#ff0000" text-anchor="end" font-family="Liberation Sans, sans-serif" >23.83</text>
<text x="1230" y="243" font-size="13" fill="#ffffff" text-anchor="start" font-family="Liberation Sans, sans-serif" >[°C]</text>
<text x="894" y="260" font-size="13" fill="#ffffff" text-anchor="start" font-family="Liberation Sans, sans-serif" >FM Hail Size | SHIP | LHP:</text>
<text x="1124" y="260" font-size="13" fill="#00ff00" text-anchor="end" font-family="Liberation Sans, sans-serif" >0.00</text>
<text x="1124" y="260" font-size="13" fill="#ffffff" text-anchor="start" font-family="Liberation Sans, sans-serif" >,</text>
<text x="1136" y="260" font-size="13" fill="#00ff00" text-anchor="start" font-family="Liberation Sans, sans-serif" >0.01</text>
<text x="1160" y="260" font-size="13" fill="#ffffff" text-anchor="start" font-family="Liberation Sans, sans-serif" >,</text>
<text x="1173" y="260" font-size="13" fill="#00ff00" text-anchor="start" font-family="Liberation Sans, sans-serif" >0.00</text>
<text x="1230" y="260" font-size="13" fill="#ffffff" text-anchor="start" font-family="Liberation Sans, sans-serif" >[cm], [1], [1]</text>
<text x="894" y="277" font-size="13" fill="#ffffff" text-anchor="start" font-family="Liberation Sans, sans-serif" >Estofex Exp. Hail Param:</text>
<text x="1124" y="277" font-size="13" fill="#ff0000" text-anchor="end" font-family="Liberation Sans, sans-serif" >3.14</text>
<text x="1230" y="277" font-size="13" fill="#ffffff" text-anchor="start" font-family="Liberation Sans, sans-serif" >[cm]</text>
<text x="894" y="294" font-size="13" fill="#ffffff" text-anchor="start" font-family="Liberation Sans, sans-serif" >Max. Hail Size (OLD, MU, IL):</text>
<text x="1124" y="294" font-size="13" fill="#ff0000" text-anchor="end" font-family="Liberation Sans, sans-serif" >3.95</text>
<text x="1124" y="294" font-size="13" fill="#ffffff" text-anchor="start" font-family="Liberation Sans, sans-serif" >,</text>
<text x="1136" y="294" font-size="13" fill="#00ff00" text-anchor="start" font-family="Liberation Sans, sans-serif" >0.00</text>
<text x="1160" y="294" font-size="13" fill="#ffffff" text-anchor="start" font-family="Liberation Sans, sans-serif" >,</text>
<text x="1173" y="294" font-size="13" fill="#00ff00" text-anchor="start" font-family="Liberation Sans, sans-serif" >0.00</text>
<text x="1230" y="294" font-size="13" fill="#ffffff" text-anchor="start" font-family="Liberation Sans, sans-serif" >[cm]</text>
<text x="894" y="314" font-size="13" fill="#ffffff" text-anchor="start" font-family="Liberation Sans, sans-serif" >LCL / CCL (AGL):</text>
<text x="1124" y="314" font-size="13" fill="#00ff00" text-anchor="end" font-family="Liberation Sans, sans-serif" >3414.28</text>
<text x="1214" y="314" font-size="13" fill="#00ff00" text-anchor="end" font-family="Liberation Sans, sans-serif" >4026.01</text>
<text x="1230" y="314" font-size="13" fill="#ffffff" text-anchor="start" font-family="Liberation Sans, sans-serif" >[m]</text>
<text x="894" y="331" font-size="13" fill="#ffffff" text-anchor="start" font-family="Liberation Sans, sans-serif" >Convective Height:</text>
<text x="1124" y="331" font-size="13" fill="#00ff00" text-anchor="end" font-family="Liberation Sans, sans-serif" >0.00</text>
<text x="1214" y="331" font-size="13" fill="#ffff00" text-anchor="end" font-family="Liberation Sans, sans-serif" >5.01</text>
<text x="1230" y="331" font-size="13" fill="#ffffff" text-anchor="start" font-family="Liberation Sans, sans-serif" >[km]</text>
<text x="894" y="356" font-size="13" fill="#ffffff" text-anchor="start" font-family="Liberation Sans, sans-serif" text-decoration="underline">Convective Indices</text>
<text x="894" y="376" font-size="13" fill="#ffffff" text-anchor="start" font-family="Liberation Sans, sans-serif" >Showalter Index:</text>
<text x="1124" y="376" font-size="13" fill="#00ff00" text-anchor="end" font-family="Liberation Sans, sans-serif" >4.42</text>
<text x="1230" y="376" font-size="13" fill="#ffffff" text-anchor="start" font-family="Liberation Sans, sans-serif" >[°C]</text>
<text x="894" y="393" font-size="13" fill="#ffffff" text-anchor="start" font-family="Liberation Sans, sans-serif" >Modified Thompson Index:</text>
<text x="1124" y="393" font-size="13" fill="#00ff00" text-anchor="end" font-family="Liberation Sans, sans-serif" >24.14</text>
<text x="1230" y="393" font-size="13" fill="#ffffff" text-anchor="start" font-family="Liberation Sans, sans-serif" >[°C]</text>
<text x="894" y="410" font-size="13" fill="#ffffff" text-anchor="start" font-family="Liberation Sans, sans-serif" >Total Totals Index:</text>
<text x="1124" y="410" font-size="13" fill="#00ff00" text-anchor="end" font-family="Liberation Sans, sans-serif" >42.40</text>
<text x="1230" y="410" font-size="13" fill="#ffffff" text-anchor="start" font-family="Liberation Sans, sans-serif" >[°C]</text>
<text x="894" y="427" font-size="13" fill="#ffffff" text-anchor="start" font-family="Liberation Sans, sans-serif" >KO Index:</text>
<text x="1124" y="427" font-size="13" fill="#ff0000" text-anchor="end" font-family="Liberation Sans, sans-serif" >-13.11</text>
<text x="1230" y="427" font-size="13" fill="#ffffff" text-anchor="start" font-family="Liberation Sans, sans-serif" >[1]</text>
<text x="894" y="444" font-size="13" fill="#ffffff" text-anchor="start" font-family="Liberation Sans, sans-serif" >Craven SigSvr / 1000:</text>
<text x="1124" y="444" font-size="13" fill="#00ff00" text-anchor="end" font-family="Liberation Sans, sans-serif" >0.00</text>
<text x="1230" y="444" font-size="13" fill="#ffffff" text-anchor="start" font-family="Liberation Sans, sans-serif" >[m^3/s^3]</text>
<text x="894" y="461" font-size="13" fill="#ffffff" text-anchor="start" font-family="Liberation Sans, sans-serif" >SCP RM (new, old):</text>
<text x="1124" y="461" font-size="13" fill="#00ff00" text-anchor="end" font-family="Liberation Sans, sans-serif" >0.00</text>
<text x="1124" y="461" font-size="13" fill="#ffffff" text-anchor="start" font-family="Liberation Sans, sans-serif" >,</text>
<text x="1136" y="461" font-size="13" fill="#00ff00" text-anchor="start" font-family="Liberation Sans, sans-serif" >0.00</text>
<text x="1230" y="461" font-size="13" fill="#ffffff" text-anchor="start" font-family="Liberation Sans, sans-serif" >[1]</text>
<text x="894" y="478" font-size="13" fill="#ffffff" text-anchor="start" font-family="Liberation Sans, sans-serif" >STP (new, old):</text>
<text x="1124" y="478" font-size="13" fill="#00ff00" text-anchor="end" font-family="Liberation Sans, sans-serif" >0.00</text>
<text x="1124" y="478" font-size="13" fill="#ffffff" text-anchor="start" font-family="Liberation Sans, sans-serif" >,</text>
<text x="1136" y="478" font-size="13" fill="#00ff00" text-anchor="start" font-family="Liberation Sans, sans-serif" >0.00</text>
<text x="1230" y="478" font-size="13" fill="#ffffff" text-anchor="start" font-family="Liberation Sans, sans-serif" >[1]</text>
<text x="894" y="495" font-size="13" fill="#ffffff" text-anchor="start" font-family="Liberation Sans, sans-serif" >SB STP (fix) | CWASP:</text>
<text x="1124" y="495" font-size="13" fill="#00ff00" text-anchor="end" font-family="Liberation Sans, sans-serif" >0.00</text>
<text x="1124" y="495" font-size="13" fill="#ffffff" text-anchor="start" font-family="Liberation Sans, sans-serif" >,</text>
<text x="1136" y="495" font-size="13" fill="#00ff00" text-anchor="start" font-family="Liberation Sans, sans-serif" >37.37</text>
<text x="1230" y="495" font-size="13" fill="#ffffff" text-anchor="start" font-family="Liberation Sans, sans-serif" >[1], [%]</text>
<text x="894" y="512" font-size="13" fill="#ffffff" text-anchor="start" font-family="Liberation Sans, sans-serif" >DCP | MMP | MSP:</text>
<text x="1124" y="512" font-size="13" fill="#00ff00" text-anchor="end" font-family="Liberation Sans, sans-serif" >0.03</text>
<text x="1124" y="512" font-size="13" fill="#ffffff" text-anchor="start" font-family="Liberation Sans, sans-serif" >,</text>
<text x="1136" y="512" font-size="13" fill="#00ff00" text-anchor="start" font-family="Liberation Sans, sans-serif" >0.00</text>
<text x="1160" y="512" font-size="13" fill="#ffffff" text-anchor="start" font-family="Liberation Sans, sans-serif" >,</text>
<text x="1173" y="512" font-size="13" fill="#00ff00" text-anchor="start" font-family="Liberation Sans, sans-serif" >0.00</text>
<text x="1230" y="512" font-size="13" fill="#ffffff" text-anchor="start" font-family="Liberation Sans, sans-serif" >[1], [%], [%]</text>
<text x="894" y="529" font-size="13" fill="#ffffff" text-anchor="start" font-family="Liberation Sans, sans-serif" >MB Comp | SHERBE:</text>
<text x="1124" y="529" font-size="13" fill="#00ff00" text-anchor="end" font-family="Liberation Sans, sans-serif" >2.00</text>
<text x="1124" y="529" font-size="13" fill="#ffffff" text-anchor="start" font-family="Liberation Sans, sans-serif" >,</text>
<text x="1136" y="529" font-size="13" fill="#00ff00" text-anchor="start" font-family="Liberation Sans, sans-serif" >0.00</text>
<text x="1230" y="529" font-size="13" fill="#ffffff" text-anchor="start" font-family="Liberation Sans, sans-serif" >[1], [1]</text>
<text x="894" y="546" font-size="13" fill="#ffffff" text-anchor="start" font-family="Liberation Sans, sans-serif" >Exp. Supercell Index CH:</text>
<text x="1124" y="546" font-size="13" fill="#00ff00" text-anchor="end" font-family="Liberation Sans, sans-serif" >0.49</text>
<text x="1230" y="546" font-size="13" fill="#ffffff" text-anchor="start" font-family="Liberation Sans, sans-serif" >[1]</text>
<text x="894" y="563" font-size="13" fill="#ffffff" text-anchor="start" font-family="Liberation Sans, sans-serif" >SWISS 12 Index:</text>
<text x="1124" y="563" font-size="13" fill="#ff0000" text-anchor="end" font-family="Liberation Sans, sans-serif" >-1.87</text>
<text x="1230" y="563" font-size="13" fill="#ffffff" text-anchor="start" font-family="Liberation Sans, sans-serif" >[1]</text>
<text x="894" y="580" font-size="13" fill="#ffffff" text-anchor="start" font-family="Liberation Sans, sans-serif" >Precipitable Water:</text>
<text x="1124" y="580" font-size="13" fill="#00ff00" text-anchor="end" font-family="Liberation Sans, sans-serif" >15.79</text>
<text x="1230" y="580" font-size="13" fill="#ffffff" text-anchor="start" font-family="Liberation Sans, sans-serif" >[mm]</text>
<text x="894" y="605" font-size="13" fill="#ffffff" text-anchor="start" font-family="Liberation Sans, sans-serif" text-decoration="underline">Wind Parameters</text>
<text x="894" y="625" font-size="13" fill="#ffffff" text-anchor="start" font-family="Liberation Sans, sans-serif" >Storm Direction | Motion:</text>
<text x="1124" y="625" font-size="13" fill="#ffffff" text-anchor="end" font-family="Liberation Sans, sans-serif" >261.02</text>
<text x="1124" y="625" font-size="13" fill="#ffffff" text-anchor="start" font-family="Liberation Sans, sans-serif" >,</text>
<text x="1136" y="625" font-size="13" fill="#ff0000" text-anchor="start" font-family="Liberation Sans, sans-serif" >25.57</text>
<text x="1230" y="625" font-size="13" fill="#ffffff" text-anchor="start" font-family="Liberation Sans, sans-serif" >[°], [knt]</text>
<text x="894" y="642" font-size="13" fill="#ffffff" text-anchor="start" font-family="Liberation Sans, sans-serif" >500m Critical Angle:</text>
<text x="1124" y="642" font-size="13" fill="#00ff00" text-anchor="end" font-family="Liberation Sans, sans-serif" >49.34</text>
<text x="1230" y="642" font-size="13" fill="#ffffff" text-anchor="start" font-family="Liberation Sans, sans-serif" >[°]</text>
<text x="894" y="662" font-size="13" fill="#ffffff" text-anchor="start" font-family="Liberation Sans, sans-serif" >SR Wind Sfc-2km:</text>
<text x="1124" y="662" font-size="13" fill="#00ff00" text-anchor="end" font-family="Liberation Sans, sans-serif" >15.72</text>
<text x="1230" y="662" font-size="13" fill="#ffffff" text-anchor="start" font-family="Liberation Sans, sans-serif" >[knt]</text>
<text x="894" y="679" font-size="13" fill="#ffffff" text-anchor="start" font-family="Liberation Sans, sans-serif" >SR Wind 4km-6km:</text>
<text x="1124" y="679" font-size="13" fill="#00ff00" text-anchor="end" font-family="Liberation Sans, sans-serif" >2.01</text>
<text x="1230" y="679" font-size="13" fill="#ffffff" text-anchor="start" font-family="Liberation Sans, sans-serif" >[knt]</text>
<text x="894" y="696" font-size="13" fill="#ffffff" text-anchor="start" font-family="Liberation Sans, sans-serif" >SR Wind 9km-11km:</text>
<text x="1124" y="696" font-size="13" fill="#00ff00" text-anchor="end" font-family="Liberation Sans, sans-serif" >4.65</text>
<text x="1230" y="696" font-size="13" fill="#ffffff" text-anchor="start" font-family="Liberation Sans, sans-serif" >[knt] HP</text>
<text x="894" y="716" font-size="13" fill="#ffffff" text-anchor="start" font-family="Liberation Sans, sans-serif" >Effective Shear 6000:</text>
<text x="1124" y="716" font-size="13" fill="#ffffff" text-anchor="end" font-family="Liberation Sans, sans-serif" >---</text>
<text x="1230" y="716" font-size="13" fill="#ffffff" text-anchor="start" font-family="Liberation Sans, sans-serif" >[knt]</text>
<text x="894" y="736" font-size="13" fill="#ffffff" text-anchor="start" font-family="Liberation Sans, sans-serif" >Bulk Richardson Number:</text>
<text x="1124" y="736" font-size="13" fill="#00ff00" text-anchor="end" font-family="Liberation Sans, sans-serif" >0.00</text>
<text x="1214" y="736" font-size="13" fill="#ffff00" text-anchor="end" font-family="Liberation Sans, sans-serif" >161.43</text>
<text x="1230" y="736" font-size="13" fill="#ffffff" text-anchor="start" font-family="Liberation Sans, sans-serif" >[1]</text>
<text x="894" y="756" font-size="13" fill="#ffffff" text-anchor="start" font-family="Liberation Sans, sans-serif" >3km Effective SRH:</text>
<text x="1124" y="756" font-size="13" fill="#ffffff" text-anchor="end" font-family="Liberation Sans, sans-serif" >---</text>
<text x="1230" y="756" font-size="13" fill="#ffffff" text-anchor="start" font-family="Liberation Sans, sans-serif" >[m^2/s^2]</text>
<text x="894" y="773" font-size="13" fill="#ffffff" text-anchor="start" font-family="Liberation Sans, sans-serif" >Max 3km SRH (0-2km) | AGL:</text>
<text x="1124" y="773" font-size="13" fill="#ff0000" text-anchor="end" font-family="Liberation Sans, sans-serif" >114.48</text>
<text x="1124" y="773" font-size="13" fill="#ffffff" text-anchor="start" font-family="Liberation Sans, sans-serif" >,</text>
<text x="1136" y="773" font-size="13" fill="#00ff00" text-anchor="start" font-family="Liberation Sans, sans-serif" >170.00</text>
<text x="1230" y="773" font-size="13" fill="#ffffff" text-anchor="start" font-family="Liberation Sans, sans-serif" >[m^2/s^2], [m]</text>
<text x="894" y="793" font-size="13" fill="#ffffff" text-anchor="start" font-family="Liberation Sans, sans-serif" >3km Energy Helicity Index:</text>
<text x="1124" y="793" font-size="13" fill="#00ff00" text-anchor="end" font-family="Liberation Sans, sans-serif" >0.00</text>
<text x="1214" y="793" font-size="13" fill="#00ff00" text-anchor="end" font-family="Liberation Sans, sans-serif" >0.06</text>
<text x="1230" y="793" font-size="13" fill="#ffffff" text-anchor="start" font-family="Liberation Sans, sans-serif" >[1]</text>
<text x="894" y="810" font-size="13" fill="#ffffff" text-anchor="start" font-family="Liberation Sans, sans-serif" >3km Vorticity Gen. Pot.:</text>
<text x="1124" y="810" font-size="13" fill="#00ff00" text-anchor="end" font-family="Liberation Sans, sans-serif" >0.00</text>
<text x="1214" y="810" font-size="13" fill="#00ff00" text-anchor="end" font-family="Liberation Sans, sans-serif" >0.02</text>
<text x="1230" y="810" font-size="13" fill="#ffffff" text-anchor="start" font-family="Liberation Sans, sans-serif" >[m/s^2]</text>
<rect x="729" y="827" width="15" height="8" fill="#ff0000"/>
<text x="753" y="836" font-size="13" fill="#ff0000" text-anchor="start" font-family="Liberation Sans, sans-serif" >Temperature Profile</text>
<rect x="729" y="847" width="15" height="8" fill="#00ffff"/>
<text x="753" y="856" font-size="13" fill="#00ffff" text-anchor="start" font-family="Liberation Sans, sans-serif" >Dewpoint Profile</text>
<rect x="729" y="867" width="15" height="8" fill="#00ff00"/>
<text x="753" y="876" font-size="13" fill="#00ff00" text-anchor="start" font-family="Liberation Sans, sans-serif" >OBS Windspeed Profile</text>
<rect x="729" y="887" width="15" height="8" fill="#ff0080"/>
<text x="753" y="896" font-size="13" fill="#ff0080" text-anchor="start" font-family="Liberation Sans, sans-serif" >SR Windspeed Profile</text>
<rect x="729" y="907" width="15" height="8" fill="#c8c800"/>
<text x="753" y="916" font-size="13" fill="#c8c800" text-anchor="start" font-family="Liberation Sans, sans-serif" >Sfc-3km Storm Relative Helicity Profile</text>
<rect x="729" y="927" width="15" height="8" fill="#505010"/>
<text x="753" y="936" font-size="13" fill="#505010" text-anchor="start" font-family="Liberation Sans, sans-serif" >Effective Layer (CAPE &gt;= 100 J/kg)</text>
<rect x="1079" y="827" width="15" height="8" fill="#00ff00"/>
<text x="1103" y="836" font-size="13" fill="#00ff00" text-anchor="start" font-family="Liberation Sans, sans-serif" >No / Non Severe Thunderstorms</text>
<rect x="1079" y="847" width="15" height="8" fill="#ffff00"/>
<text x="1103" y="856" font-size="13" fill="#ffff00" text-anchor="start" font-family="Liberation Sans, sans-serif" >Scattered / Moderate Thunderstorms</text>
<rect x="1079" y="867" width="15" height="8" fill="#ff0000"/>
<text x="1103" y="876" font-size="13" fill="#ff0000" text-anchor="start" font-family="Liberation Sans, sans-serif" >Widespread / Severe Thunderstorms</text>
</svg></body></html>
